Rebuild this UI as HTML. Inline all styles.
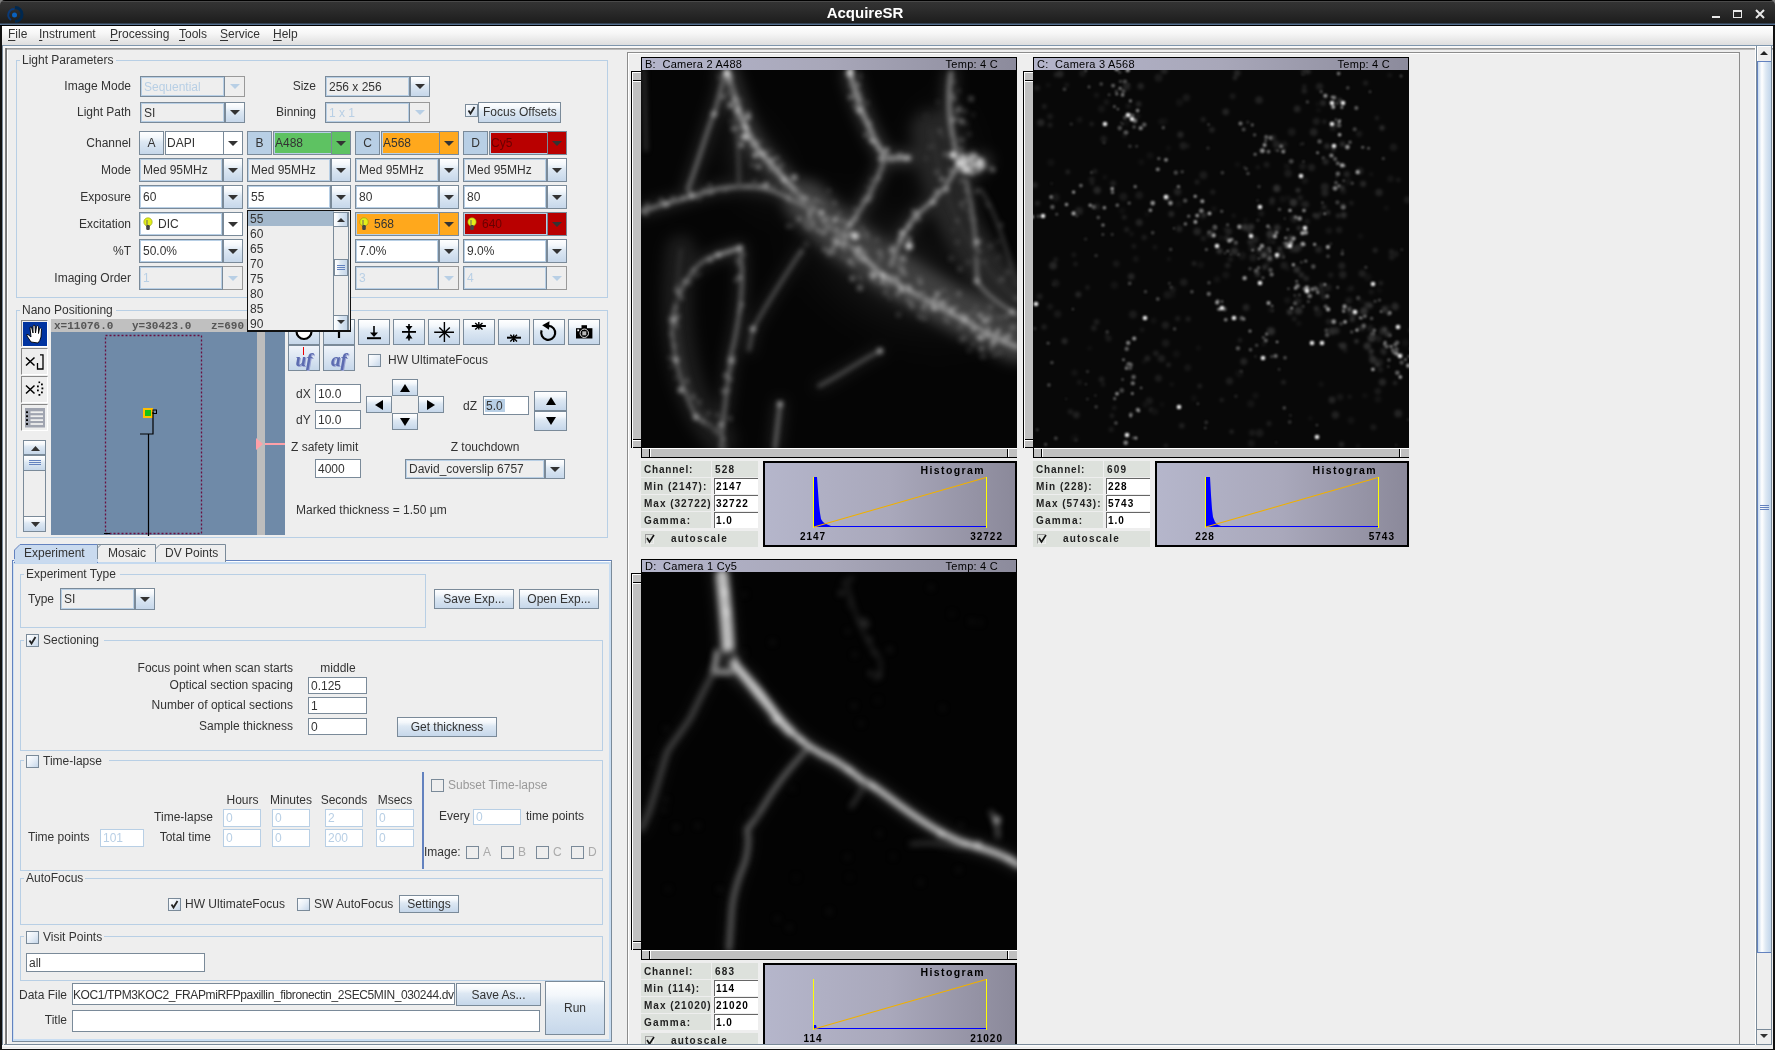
<!DOCTYPE html><html><head><meta charset="utf-8"><title>AcquireSR</title><style>
*{margin:0;padding:0}
html,body{width:1775px;height:1050px;overflow:hidden;background:#eeeeee}
body{position:relative;font-family:"Liberation Sans",sans-serif;font-size:12px;color:#333}
.a{position:absolute}
.t{position:absolute;white-space:nowrap}
u{text-decoration:underline;text-underline-offset:1.5px;text-decoration-thickness:1px}
</style></head><body>
<div id="root" style="position:absolute;left:0;top:0;width:1775px;height:1050px;will-change:transform">
<div class="a" style="left:0px;top:0px;width:8px;height:8px;background:#808080;"></div>
<div class="a" style="left:1767px;top:0px;width:8px;height:8px;background:#808080;"></div>
<div class="a" style="left:0px;top:0px;width:1775px;height:25px;background:linear-gradient(to bottom,#000 0px,#000 1px,#4a4a4a 1px,#4a4a4a 2px,#333 2px,#2e2e2e 8px,#1d1d1d 23px,#4d6a8a 24px);border-radius:5px 5px 0 0;"></div>
<div class="a" style="left:0px;top:24px;width:1775px;height:1px;background:#56708f;"></div>
<svg class="a" style="left:6px;top:6px" width="18" height="18"><path d="M8.5 3 A6 6 0 0 0 5 14" stroke="#0a3a78" stroke-width="2" fill="none"/><path d="M9 1.5 A7 7 0 0 1 9 15.5" stroke="#00284f" stroke-width="3" fill="none"/><circle cx="8.5" cy="9" r="2.5" fill="#0a62bf"/></svg>
<div class="t" style="top:4.30px;font-size:15px;line-height:17px;color:#ffffff;font-weight:bold;left:565px;width:600px;text-align:center;">AcquireSR</div>
<div class="a" style="left:1712px;top:16px;width:8px;height:2px;background:#e8e8e8;"></div>
<div class="a" style="left:1733px;top:10px;width:9px;height:8px;box-sizing:border-box;border:1px solid #e8e8e8;border-top-width:2px;"></div>
<svg class="a" style="left:1755px;top:9px" width="10" height="10"><path d="M1 1 L9 9 M9 1 L1 9" stroke="#e8e8e8" stroke-width="2"/></svg>
<div class="a" style="left:0px;top:25px;width:2px;height:1025px;background:#111;"></div>
<div class="a" style="left:1773px;top:25px;width:2px;height:1025px;background:#111;"></div>
<div class="a" style="left:0px;top:1049px;width:1775px;height:1px;background:#111;"></div>
<div class="a" style="left:0px;top:25px;width:1775px;height:1px;background:#000;"></div>
<div class="a" style="left:2px;top:26px;width:1771px;height:19px;background:linear-gradient(to bottom,#ffffff 0%,#f6f6f6 40%,#dedede 100%);"></div>
<div class="a" style="left:2px;top:45px;width:1771px;height:1px;background:#7e96ad;"></div>
<div class="a" style="left:2px;top:46px;width:1771px;height:2px;background:#f8f8f8;"></div>
<div class="a" style="left:2px;top:48px;width:1771px;height:2px;background:linear-gradient(to bottom,#8a8a8a,#c9c9c9);"></div>
<div class="t" style="top:26.84px;font-size:12px;line-height:14px;color:#333;left:8px;"><u>F</u>ile</div>
<div class="t" style="top:26.84px;font-size:12px;line-height:14px;color:#333;left:39px;"><u>I</u>nstrument</div>
<div class="t" style="top:26.84px;font-size:12px;line-height:14px;color:#333;left:110px;"><u>P</u>rocessing</div>
<div class="t" style="top:26.84px;font-size:12px;line-height:14px;color:#333;left:179px;"><u>T</u>ools</div>
<div class="t" style="top:26.84px;font-size:12px;line-height:14px;color:#333;left:220px;"><u>S</u>ervice</div>
<div class="t" style="top:26.84px;font-size:12px;line-height:14px;color:#333;left:273px;"><u>H</u>elp</div>
<div class="a" style="left:2px;top:45px;width:1px;height:1000px;background:#7a8a99;"></div>
<div class="a" style="left:3px;top:46px;width:2px;height:999px;background:#f6f6f6;"></div>
<div class="a" style="left:5px;top:48px;width:2px;height:997px;background:linear-gradient(to right,#8a8a8a,#6e6e6e);"></div>
<div class="a" style="left:7px;top:50px;width:1px;height:995px;background:#ffffff;"></div>
<div class="a" style="left:16px;top:60px;width:592px;height:238px;box-sizing:border-box;border:1px solid #b8cfe5;"></div>
<div class="a" style="left:20px;top:59px;width:96px;height:3px;background:#eeeeee;"></div>
<div class="t" style="top:52.84px;font-size:12px;line-height:14px;color:#333;left:22px;">Light Parameters</div>
<div class="t" style="top:78.84px;font-size:12px;line-height:14px;color:#333;right:1644px;">Image Mode</div>
<div class="a" style="left:140px;top:76px;width:85px;height:21px;box-sizing:border-box;border:1px solid #7a8a99;background:#eeeeee;box-shadow:inset 1px 1px 0 #b8cfe5,inset -1px -1px 0 #b8cfe5;"></div>
<div class="a" style="left:225px;top:76px;width:20px;height:21px;box-sizing:border-box;border:1px solid #999;border-left:none;background:#eeeeee;"></div>
<svg class="a" style="left:230.0px;top:84.0px" width="10" height="5"><polygon points="0,0 10,0 5.0,5" fill="#b8cfe5"/></svg>
<div class="t" style="top:79.84px;font-size:12px;line-height:14px;color:#b8cfe5;left:144px;">Sequential</div>
<div class="t" style="top:104.84px;font-size:12px;line-height:14px;color:#333;right:1644px;">Light Path</div>
<div class="a" style="left:140px;top:102px;width:85px;height:21px;box-sizing:border-box;border:1px solid #7a8a99;background:#eeeeee;box-shadow:inset 1px 1px 0 #b8cfe5,inset -1px -1px 0 #b8cfe5;"></div>
<div class="a" style="left:225px;top:102px;width:20px;height:21px;box-sizing:border-box;border:1px solid #7a8a99;border-left:1px solid #7a8a99;background:linear-gradient(to bottom,#ffffff 0%,#f3f7fb 25%,#dde8f3 45%,#c6d7ea 100%);"></div>
<svg class="a" style="left:230.0px;top:110.0px" width="10" height="5"><polygon points="0,0 10,0 5.0,5" fill="#333"/></svg>
<div class="t" style="top:105.84px;font-size:12px;line-height:14px;color:#333;left:144px;">SI</div>
<div class="t" style="top:78.84px;font-size:12px;line-height:14px;color:#333;right:1459px;">Size</div>
<div class="a" style="left:325px;top:76px;width:85px;height:21px;box-sizing:border-box;border:1px solid #7a8a99;background:#eeeeee;box-shadow:inset 1px 1px 0 #b8cfe5,inset -1px -1px 0 #b8cfe5;"></div>
<div class="a" style="left:410px;top:76px;width:20px;height:21px;box-sizing:border-box;border:1px solid #7a8a99;border-left:1px solid #7a8a99;background:linear-gradient(to bottom,#ffffff 0%,#f3f7fb 25%,#dde8f3 45%,#c6d7ea 100%);"></div>
<svg class="a" style="left:415.0px;top:84.0px" width="10" height="5"><polygon points="0,0 10,0 5.0,5" fill="#333"/></svg>
<div class="t" style="top:79.84px;font-size:12px;line-height:14px;color:#333;left:329px;">256 x 256</div>
<div class="t" style="top:104.84px;font-size:12px;line-height:14px;color:#333;right:1459px;">Binning</div>
<div class="a" style="left:325px;top:102px;width:85px;height:21px;box-sizing:border-box;border:1px solid #7a8a99;background:#eeeeee;box-shadow:inset 1px 1px 0 #b8cfe5,inset -1px -1px 0 #b8cfe5;"></div>
<div class="a" style="left:410px;top:102px;width:20px;height:21px;box-sizing:border-box;border:1px solid #999;border-left:none;background:#eeeeee;"></div>
<svg class="a" style="left:415.0px;top:110.0px" width="10" height="5"><polygon points="0,0 10,0 5.0,5" fill="#b8cfe5"/></svg>
<div class="t" style="top:105.84px;font-size:12px;line-height:14px;color:#b8cfe5;left:329px;">1 x 1</div>
<div class="a" style="left:465px;top:104px;width:13px;height:13px;box-sizing:border-box;border:1px solid #7a8a99;background:linear-gradient(to bottom right,#ffffff 0%,#e8eff7 50%,#c6d7ea 100%);"></div>
<svg class="a" style="left:465px;top:104px" width="13" height="13"><path d="M3.5 6.5 L5.5 9.5 L9.5 3" stroke="#222" stroke-width="1.8" fill="none"/></svg>
<div class="a" style="left:478px;top:102px;width:83px;height:21px;box-sizing:border-box;border:1px solid #7a8a99;background:linear-gradient(to bottom,#ffffff 0%,#f3f7fb 25%,#dde8f3 45%,#c6d7ea 100%);"></div>
<div class="t" style="top:104.84px;font-size:12px;line-height:14px;color:#333;left:483px;">Focus Offsets</div>
<div class="t" style="top:135.84px;font-size:12px;line-height:14px;color:#333;right:1644px;">Channel</div>
<div class="t" style="top:162.84px;font-size:12px;line-height:14px;color:#333;right:1644px;">Mode</div>
<div class="t" style="top:189.84px;font-size:12px;line-height:14px;color:#333;right:1644px;">Exposure</div>
<div class="t" style="top:216.84px;font-size:12px;line-height:14px;color:#333;right:1644px;">Excitation</div>
<div class="t" style="top:243.84px;font-size:12px;line-height:14px;color:#333;right:1644px;">%T</div>
<div class="t" style="top:270.84px;font-size:12px;line-height:14px;color:#333;right:1644px;">Imaging Order</div>
<div class="a" style="left:139px;top:131px;width:25px;height:24px;box-sizing:border-box;border:1px solid #7a8a99;background:linear-gradient(to bottom,#ffffff 0%,#f3f7fb 25%,#dde8f3 45%,#c6d7ea 100%);"></div>
<div class="t" style="top:135.84px;font-size:12px;line-height:14px;color:#333;left:-148.5px;width:600px;text-align:center;">A</div>
<div class="a" style="left:165px;top:131px;width:78px;height:24px;box-sizing:border-box;border:1px solid #7a8a99;background:#ffffff;"></div>
<div class="a" style="left:223px;top:131px;width:20px;height:24px;box-sizing:border-box;border:1px solid #7a8a99;background:#ffffff;"></div>
<svg class="a" style="left:228.0px;top:140.5px" width="10" height="5"><polygon points="0,0 10,0 5.0,5" fill="#333"/></svg>
<div class="t" style="top:135.84px;font-size:12px;line-height:14px;color:#333;left:167px;">DAPI</div>
<div class="a" style="left:247px;top:131px;width:25px;height:24px;box-sizing:border-box;border:1px solid #7a8a99;background:#b8cfe5;"></div>
<div class="t" style="top:135.84px;font-size:12px;line-height:14px;color:#333;left:-40.5px;width:600px;text-align:center;">B</div>
<div class="a" style="left:273px;top:131px;width:78px;height:24px;box-sizing:border-box;border:1px solid #7a8a99;background:#5ec262;"></div>
<div class="a" style="left:274px;top:132px;width:76px;height:22px;box-sizing:border-box;border:1px solid #b8cfe5;border-right:none;"></div>
<div class="a" style="left:331px;top:131px;width:20px;height:24px;box-sizing:border-box;border:1px solid #7a8a99;background:#5ec262;"></div>
<svg class="a" style="left:336.0px;top:140.5px" width="10" height="5"><polygon points="0,0 10,0 5.0,5" fill="#333"/></svg>
<div class="t" style="top:135.84px;font-size:12px;line-height:14px;color:#333;left:275px;">A488</div>
<div class="a" style="left:355px;top:131px;width:25px;height:24px;box-sizing:border-box;border:1px solid #7a8a99;background:#b8cfe5;"></div>
<div class="t" style="top:135.84px;font-size:12px;line-height:14px;color:#333;left:67.5px;width:600px;text-align:center;">C</div>
<div class="a" style="left:381px;top:131px;width:78px;height:24px;box-sizing:border-box;border:1px solid #7a8a99;background:#ffa81c;"></div>
<div class="a" style="left:382px;top:132px;width:76px;height:22px;box-sizing:border-box;border:1px solid #b8cfe5;border-right:none;"></div>
<div class="a" style="left:439px;top:131px;width:20px;height:24px;box-sizing:border-box;border:1px solid #7a8a99;background:#ffa81c;"></div>
<svg class="a" style="left:444.0px;top:140.5px" width="10" height="5"><polygon points="0,0 10,0 5.0,5" fill="#333"/></svg>
<div class="t" style="top:135.84px;font-size:12px;line-height:14px;color:#333;left:383px;">A568</div>
<div class="a" style="left:463px;top:131px;width:25px;height:24px;box-sizing:border-box;border:1px solid #7a8a99;background:#b8cfe5;"></div>
<div class="t" style="top:135.84px;font-size:12px;line-height:14px;color:#333;left:175.5px;width:600px;text-align:center;">D</div>
<div class="a" style="left:489px;top:131px;width:78px;height:24px;box-sizing:border-box;border:1px solid #7a8a99;background:#b90000;"></div>
<div class="a" style="left:490px;top:132px;width:76px;height:22px;box-sizing:border-box;border:1px solid #b8cfe5;border-right:none;"></div>
<div class="a" style="left:547px;top:131px;width:20px;height:24px;box-sizing:border-box;border:1px solid #7a8a99;background:#b90000;"></div>
<svg class="a" style="left:552.0px;top:140.5px" width="10" height="5"><polygon points="0,0 10,0 5.0,5" fill="#333"/></svg>
<div class="t" style="top:135.84px;font-size:12px;line-height:14px;color:#6a0000;left:491px;">Cy5</div>
<div class="a" style="left:139px;top:158px;width:84px;height:24px;box-sizing:border-box;border:1px solid #7a8a99;background:#eeeeee;box-shadow:inset 1px 1px 0 #b8cfe5,inset -1px -1px 0 #b8cfe5;"></div>
<div class="a" style="left:223px;top:158px;width:20px;height:24px;box-sizing:border-box;border:1px solid #7a8a99;border-left:1px solid #7a8a99;background:linear-gradient(to bottom,#ffffff 0%,#f3f7fb 25%,#dde8f3 45%,#c6d7ea 100%);"></div>
<svg class="a" style="left:228.0px;top:167.5px" width="10" height="5"><polygon points="0,0 10,0 5.0,5" fill="#333"/></svg>
<div class="t" style="top:163.34px;font-size:12px;line-height:14px;color:#333;left:143px;">Med 95MHz</div>
<div class="a" style="left:139px;top:185px;width:84px;height:24px;box-sizing:border-box;border:1px solid #7a8a99;background:#ffffff;box-shadow:inset 1px 1px 0 #b8cfe5,inset -1px -1px 0 #b8cfe5;"></div>
<div class="a" style="left:223px;top:185px;width:20px;height:24px;box-sizing:border-box;border:1px solid #7a8a99;border-left:1px solid #7a8a99;background:linear-gradient(to bottom,#ffffff 0%,#f3f7fb 25%,#dde8f3 45%,#c6d7ea 100%);"></div>
<svg class="a" style="left:228.0px;top:194.5px" width="10" height="5"><polygon points="0,0 10,0 5.0,5" fill="#333"/></svg>
<div class="t" style="top:190.34px;font-size:12px;line-height:14px;color:#333;left:143px;">60</div>
<div class="a" style="left:139px;top:212px;width:84px;height:24px;box-sizing:border-box;border:1px solid #7a8a99;background:#ffffff;box-shadow:inset 1px 1px 0 #b8cfe5,inset -1px -1px 0 #b8cfe5;"></div>
<div class="a" style="left:223px;top:212px;width:20px;height:24px;box-sizing:border-box;border:1px solid #7a8a99;border-left:1px solid #7a8a99;background:#ffffff;"></div>
<svg class="a" style="left:228.0px;top:221.5px" width="10" height="5"><polygon points="0,0 10,0 5.0,5" fill="#333"/></svg>
<svg class="a" style="left:142px;top:212px" width="12" height="24"><ellipse cx="6" cy="10" rx="4.2" ry="4.2" fill="#e4ef1a" stroke="#8a9a10" stroke-width="0.6"/><rect x="4.2" y="13" width="3.6" height="5" rx="1.2" fill="#444"/><rect x="4.5" y="8" width="1" height="5" fill="#666"/></svg>
<div class="t" style="top:217.34px;font-size:12px;line-height:14px;color:#333;left:158px;">DIC</div>
<div class="a" style="left:139px;top:239px;width:84px;height:24px;box-sizing:border-box;border:1px solid #7a8a99;background:#ffffff;box-shadow:inset 1px 1px 0 #b8cfe5,inset -1px -1px 0 #b8cfe5;"></div>
<div class="a" style="left:223px;top:239px;width:20px;height:24px;box-sizing:border-box;border:1px solid #7a8a99;border-left:1px solid #7a8a99;background:linear-gradient(to bottom,#ffffff 0%,#f3f7fb 25%,#dde8f3 45%,#c6d7ea 100%);"></div>
<svg class="a" style="left:228.0px;top:248.5px" width="10" height="5"><polygon points="0,0 10,0 5.0,5" fill="#333"/></svg>
<div class="t" style="top:244.34px;font-size:12px;line-height:14px;color:#333;left:143px;">50.0%</div>
<div class="a" style="left:139px;top:266px;width:84px;height:24px;box-sizing:border-box;border:1px solid #7a8a99;background:#eeeeee;box-shadow:inset 1px 1px 0 #b8cfe5,inset -1px -1px 0 #b8cfe5;"></div>
<div class="a" style="left:223px;top:266px;width:20px;height:24px;box-sizing:border-box;border:1px solid #999;border-left:none;background:#eeeeee;"></div>
<svg class="a" style="left:228.0px;top:275.5px" width="10" height="5"><polygon points="0,0 10,0 5.0,5" fill="#b8cfe5"/></svg>
<div class="t" style="top:271.34px;font-size:12px;line-height:14px;color:#b8cfe5;left:143px;">1</div>
<div class="a" style="left:247px;top:158px;width:84px;height:24px;box-sizing:border-box;border:1px solid #7a8a99;background:#eeeeee;box-shadow:inset 1px 1px 0 #b8cfe5,inset -1px -1px 0 #b8cfe5;"></div>
<div class="a" style="left:331px;top:158px;width:20px;height:24px;box-sizing:border-box;border:1px solid #7a8a99;border-left:1px solid #7a8a99;background:linear-gradient(to bottom,#ffffff 0%,#f3f7fb 25%,#dde8f3 45%,#c6d7ea 100%);"></div>
<svg class="a" style="left:336.0px;top:167.5px" width="10" height="5"><polygon points="0,0 10,0 5.0,5" fill="#333"/></svg>
<div class="t" style="top:163.34px;font-size:12px;line-height:14px;color:#333;left:251px;">Med 95MHz</div>
<div class="a" style="left:247px;top:185px;width:84px;height:24px;box-sizing:border-box;border:1px solid #7a8a99;background:#ffffff;box-shadow:inset 1px 1px 0 #b8cfe5,inset -1px -1px 0 #b8cfe5;"></div>
<div class="a" style="left:331px;top:185px;width:20px;height:24px;box-sizing:border-box;border:1px solid #7a8a99;border-left:1px solid #7a8a99;background:linear-gradient(to bottom,#ffffff 0%,#f3f7fb 25%,#dde8f3 45%,#c6d7ea 100%);"></div>
<svg class="a" style="left:336.0px;top:194.5px" width="10" height="5"><polygon points="0,0 10,0 5.0,5" fill="#333"/></svg>
<div class="t" style="top:190.34px;font-size:12px;line-height:14px;color:#333;left:251px;">55</div>
<div class="a" style="left:355px;top:158px;width:84px;height:24px;box-sizing:border-box;border:1px solid #7a8a99;background:#eeeeee;box-shadow:inset 1px 1px 0 #b8cfe5,inset -1px -1px 0 #b8cfe5;"></div>
<div class="a" style="left:439px;top:158px;width:20px;height:24px;box-sizing:border-box;border:1px solid #7a8a99;border-left:1px solid #7a8a99;background:linear-gradient(to bottom,#ffffff 0%,#f3f7fb 25%,#dde8f3 45%,#c6d7ea 100%);"></div>
<svg class="a" style="left:444.0px;top:167.5px" width="10" height="5"><polygon points="0,0 10,0 5.0,5" fill="#333"/></svg>
<div class="t" style="top:163.34px;font-size:12px;line-height:14px;color:#333;left:359px;">Med 95MHz</div>
<div class="a" style="left:355px;top:185px;width:84px;height:24px;box-sizing:border-box;border:1px solid #7a8a99;background:#ffffff;box-shadow:inset 1px 1px 0 #b8cfe5,inset -1px -1px 0 #b8cfe5;"></div>
<div class="a" style="left:439px;top:185px;width:20px;height:24px;box-sizing:border-box;border:1px solid #7a8a99;border-left:1px solid #7a8a99;background:linear-gradient(to bottom,#ffffff 0%,#f3f7fb 25%,#dde8f3 45%,#c6d7ea 100%);"></div>
<svg class="a" style="left:444.0px;top:194.5px" width="10" height="5"><polygon points="0,0 10,0 5.0,5" fill="#333"/></svg>
<div class="t" style="top:190.34px;font-size:12px;line-height:14px;color:#333;left:359px;">80</div>
<div class="a" style="left:355px;top:212px;width:104px;height:24px;box-sizing:border-box;border:1px solid #7a8a99;background:#ffa81c;"></div>
<div class="a" style="left:356px;top:213px;width:83px;height:22px;box-sizing:border-box;border:1px solid #b8cfe5;"></div>
<div class="a" style="left:439px;top:212px;width:20px;height:24px;box-sizing:border-box;border:1px solid #7a8a99;background:#ffa81c;"></div>
<svg class="a" style="left:444.0px;top:221.5px" width="10" height="5"><polygon points="0,0 10,0 5.0,5" fill="#333"/></svg>
<svg class="a" style="left:358px;top:212px" width="12" height="24"><ellipse cx="6" cy="10" rx="4.2" ry="4.2" fill="#e4ef1a" stroke="#8a9a10" stroke-width="0.6"/><rect x="4.2" y="13" width="3.6" height="5" rx="1.2" fill="#444"/><rect x="4.5" y="8" width="1" height="5" fill="#666"/></svg>
<div class="t" style="top:216.84px;font-size:12px;line-height:14px;color:#333;left:374px;">568</div>
<div class="a" style="left:355px;top:239px;width:84px;height:24px;box-sizing:border-box;border:1px solid #7a8a99;background:#ffffff;box-shadow:inset 1px 1px 0 #b8cfe5,inset -1px -1px 0 #b8cfe5;"></div>
<div class="a" style="left:439px;top:239px;width:20px;height:24px;box-sizing:border-box;border:1px solid #7a8a99;border-left:1px solid #7a8a99;background:linear-gradient(to bottom,#ffffff 0%,#f3f7fb 25%,#dde8f3 45%,#c6d7ea 100%);"></div>
<svg class="a" style="left:444.0px;top:248.5px" width="10" height="5"><polygon points="0,0 10,0 5.0,5" fill="#333"/></svg>
<div class="t" style="top:244.34px;font-size:12px;line-height:14px;color:#333;left:359px;">7.0%</div>
<div class="a" style="left:355px;top:266px;width:84px;height:24px;box-sizing:border-box;border:1px solid #7a8a99;background:#eeeeee;box-shadow:inset 1px 1px 0 #b8cfe5,inset -1px -1px 0 #b8cfe5;"></div>
<div class="a" style="left:439px;top:266px;width:20px;height:24px;box-sizing:border-box;border:1px solid #999;border-left:none;background:#eeeeee;"></div>
<svg class="a" style="left:444.0px;top:275.5px" width="10" height="5"><polygon points="0,0 10,0 5.0,5" fill="#b8cfe5"/></svg>
<div class="t" style="top:271.34px;font-size:12px;line-height:14px;color:#b8cfe5;left:359px;">3</div>
<div class="a" style="left:463px;top:158px;width:84px;height:24px;box-sizing:border-box;border:1px solid #7a8a99;background:#eeeeee;box-shadow:inset 1px 1px 0 #b8cfe5,inset -1px -1px 0 #b8cfe5;"></div>
<div class="a" style="left:547px;top:158px;width:20px;height:24px;box-sizing:border-box;border:1px solid #7a8a99;border-left:1px solid #7a8a99;background:linear-gradient(to bottom,#ffffff 0%,#f3f7fb 25%,#dde8f3 45%,#c6d7ea 100%);"></div>
<svg class="a" style="left:552.0px;top:167.5px" width="10" height="5"><polygon points="0,0 10,0 5.0,5" fill="#333"/></svg>
<div class="t" style="top:163.34px;font-size:12px;line-height:14px;color:#333;left:467px;">Med 95MHz</div>
<div class="a" style="left:463px;top:185px;width:84px;height:24px;box-sizing:border-box;border:1px solid #7a8a99;background:#ffffff;box-shadow:inset 1px 1px 0 #b8cfe5,inset -1px -1px 0 #b8cfe5;"></div>
<div class="a" style="left:547px;top:185px;width:20px;height:24px;box-sizing:border-box;border:1px solid #7a8a99;border-left:1px solid #7a8a99;background:linear-gradient(to bottom,#ffffff 0%,#f3f7fb 25%,#dde8f3 45%,#c6d7ea 100%);"></div>
<svg class="a" style="left:552.0px;top:194.5px" width="10" height="5"><polygon points="0,0 10,0 5.0,5" fill="#333"/></svg>
<div class="t" style="top:190.34px;font-size:12px;line-height:14px;color:#333;left:467px;">80</div>
<div class="a" style="left:463px;top:212px;width:104px;height:24px;box-sizing:border-box;border:1px solid #7a8a99;background:#b90000;"></div>
<div class="a" style="left:464px;top:213px;width:83px;height:22px;box-sizing:border-box;border:1px solid #b8cfe5;"></div>
<div class="a" style="left:547px;top:212px;width:20px;height:24px;box-sizing:border-box;border:1px solid #7a8a99;background:#b90000;"></div>
<svg class="a" style="left:552.0px;top:221.5px" width="10" height="5"><polygon points="0,0 10,0 5.0,5" fill="#333"/></svg>
<svg class="a" style="left:466px;top:212px" width="12" height="24"><ellipse cx="6" cy="10" rx="4.2" ry="4.2" fill="#e4ef1a" stroke="#8a9a10" stroke-width="0.6"/><rect x="4.2" y="13" width="3.6" height="5" rx="1.2" fill="#444"/><rect x="4.5" y="8" width="1" height="5" fill="#666"/></svg>
<div class="t" style="top:216.84px;font-size:12px;line-height:14px;color:#6a0000;left:482px;">640</div>
<div class="a" style="left:463px;top:239px;width:84px;height:24px;box-sizing:border-box;border:1px solid #7a8a99;background:#ffffff;box-shadow:inset 1px 1px 0 #b8cfe5,inset -1px -1px 0 #b8cfe5;"></div>
<div class="a" style="left:547px;top:239px;width:20px;height:24px;box-sizing:border-box;border:1px solid #7a8a99;border-left:1px solid #7a8a99;background:linear-gradient(to bottom,#ffffff 0%,#f3f7fb 25%,#dde8f3 45%,#c6d7ea 100%);"></div>
<svg class="a" style="left:552.0px;top:248.5px" width="10" height="5"><polygon points="0,0 10,0 5.0,5" fill="#333"/></svg>
<div class="t" style="top:244.34px;font-size:12px;line-height:14px;color:#333;left:467px;">9.0%</div>
<div class="a" style="left:463px;top:266px;width:84px;height:24px;box-sizing:border-box;border:1px solid #7a8a99;background:#eeeeee;box-shadow:inset 1px 1px 0 #b8cfe5,inset -1px -1px 0 #b8cfe5;"></div>
<div class="a" style="left:547px;top:266px;width:20px;height:24px;box-sizing:border-box;border:1px solid #999;border-left:none;background:#eeeeee;"></div>
<svg class="a" style="left:552.0px;top:275.5px" width="10" height="5"><polygon points="0,0 10,0 5.0,5" fill="#b8cfe5"/></svg>
<div class="t" style="top:271.34px;font-size:12px;line-height:14px;color:#b8cfe5;left:467px;">4</div>
<div class="a" style="left:16px;top:310px;width:592px;height:228px;box-sizing:border-box;border:1px solid #b8cfe5;"></div>
<div class="a" style="left:20px;top:309px;width:96px;height:3px;background:#eeeeee;"></div>
<div class="t" style="top:302.84px;font-size:12px;line-height:14px;color:#333;left:22px;">Nano Positioning</div>
<div class="a" style="left:21px;top:320px;width:27px;height:27px;box-sizing:border-box;border:1px solid #888;border-right-color:#fff;border-bottom-color:#fff;background:#eee;"></div>
<div class="a" style="left:23px;top:322px;width:24px;height:24px;background:#0033a0;"></div>
<svg class="a" style="left:24px;top:323px" width="22" height="22"><path d="M7 19 L3 13 Q2 11 4 11.5 L7 14 L6 5 Q6 3.5 7.5 4 L9 10 L9 3 Q9.5 1.5 11 2.5 L11.5 10 L12.5 3.5 Q13.5 2 14.5 3.5 L14.5 10.5 L15.5 5.5 Q16.5 4.5 17.5 6 L17 14 Q16 18 14 20 Z" fill="#fff" stroke="#000" stroke-width="0.9"/></svg>
<div class="a" style="left:21px;top:348px;width:27px;height:27px;box-sizing:border-box;border:1px solid #888;border-right-color:#fff;border-bottom-color:#fff;background:#eee;"></div>
<div class="a" style="left:21px;top:376px;width:27px;height:27px;box-sizing:border-box;border:1px solid #888;border-right-color:#fff;border-bottom-color:#fff;background:#eee;"></div>
<div class="a" style="left:21px;top:404px;width:27px;height:27px;box-sizing:border-box;border:1px solid #888;border-right-color:#fff;border-bottom-color:#fff;background:#eee;"></div>
<svg class="a" style="left:21px;top:348px" width="27" height="27"><path d="M5 9.5 L13.5 17.5 M13.5 9.5 L5 17.5" stroke="#000" stroke-width="1.5"/><path d="M19 6.8 L22 6.8 L22 21 L16.5 21 L16.5 15" stroke="#000" stroke-width="1.3" fill="none"/></svg>
<svg class="a" style="left:21px;top:376px" width="27" height="27"><path d="M5 9.5 L13.5 17.5 M13.5 9.5 L5 17.5" stroke="#000" stroke-width="1.5"/><g fill="#000"><rect x="17.5" y="5.5" width="1.6" height="1.6"/><rect x="20" y="7.5" width="1.8" height="1.8"/><rect x="16" y="9.5" width="1.8" height="1.8"/><rect x="20.5" y="11.5" width="1.8" height="1.8"/><rect x="16" y="13.5" width="1.8" height="1.8"/><rect x="20" y="15.5" width="1.8" height="1.8"/><rect x="17.5" y="18" width="1.8" height="1.8"/></g></svg>
<svg class="a" style="left:21px;top:404px" width="27" height="27"><rect x="4" y="4" width="20" height="19.5" fill="#a0a4b0"/><g fill="#eee"><rect x="9.5" y="7.3" width="12.5" height="1.8"/><rect x="9.5" y="11.3" width="12.5" height="1.8"/><rect x="9.5" y="15.2" width="12.5" height="1.8"/><rect x="9.5" y="19.1" width="12.5" height="1.8"/></g><g fill="#000"><rect x="5" y="7.3" width="2" height="1.8"/><rect x="5" y="11.3" width="2" height="1.8"/><rect x="5" y="15.2" width="2" height="1.8"/><rect x="5" y="19.1" width="2" height="1.8"/></g></svg>
<div class="a" style="left:23px;top:440px;width:23px;height:92px;box-sizing:border-box;border:1px solid #7a8a99;background:#eeeeee;"></div>
<div class="a" style="left:24px;top:441px;width:21px;height:14px;box-sizing:border-box;border-bottom:1px solid #7a8a99;background:linear-gradient(to bottom,#ffffff 0%,#f3f7fb 25%,#dde8f3 45%,#c6d7ea 100%);"></div>
<svg class="a" style="left:30.5px;top:445.5px" width="9" height="5"><polygon points="0,5 9,5 4.5,0" fill="#333"/></svg>
<div class="a" style="left:24px;top:455px;width:21px;height:16px;box-sizing:border-box;border:1px solid #7a8a99;border-left:none;border-right:none;background:linear-gradient(to bottom,#ffffff 0%,#f3f7fb 25%,#dde8f3 45%,#c6d7ea 100%);"></div>
<div class="a" style="left:29px;top:460px;width:12px;height:1px;background:#6382bf;"></div>
<div class="a" style="left:29px;top:462px;width:12px;height:1px;background:#6382bf;"></div>
<div class="a" style="left:29px;top:464px;width:12px;height:1px;background:#6382bf;"></div>
<div class="a" style="left:24px;top:516px;width:21px;height:15px;box-sizing:border-box;border-top:1px solid #7a8a99;background:linear-gradient(to bottom,#ffffff 0%,#f3f7fb 25%,#dde8f3 45%,#c6d7ea 100%);"></div>
<svg class="a" style="left:30.5px;top:521.5px" width="9" height="5"><polygon points="0,0 9,0 4.5,5" fill="#333"/></svg>
<div class="a" style="left:51px;top:319px;width:234px;height:216px;background:#6f8aa8;"></div>
<div class="a" style="left:51px;top:319px;width:234px;height:13px;background:#c0c0c0;"></div>
<div class="t" style="top:319.19px;font-size:11px;line-height:14px;color:#555;font-weight:bold;font-family:'Liberation Mono',monospace;left:54px;">x=11076.0</div>
<div class="t" style="top:319.19px;font-size:11px;line-height:14px;color:#555;font-weight:bold;font-family:'Liberation Mono',monospace;left:132px;">y=30423.0</div>
<div class="t" style="top:319.19px;font-size:11px;line-height:14px;color:#555;font-weight:bold;font-family:'Liberation Mono',monospace;left:211px;">z=690</div>
<svg class="a" style="left:104px;top:334px" width="100" height="202"><rect x="1.5" y="1.5" width="96" height="198" fill="none" stroke="#6a1040" stroke-width="1.3" stroke-dasharray="2,2"/></svg>
<div class="a" style="left:257px;top:332px;width:8px;height:203px;background:#bdbdbd;"></div>
<div class="a" style="left:265px;top:443px;width:20px;height:2px;background:#ffa0a8;"></div>
<svg class="a" style="left:256px;top:438px" width="8" height="12"><polygon points="0,0 0,12 7,6" fill="#ffa0a8"/></svg>
<div class="a" style="left:143px;top:408px;width:10px;height:10px;background:#ffc000;"></div>
<div class="a" style="left:145px;top:410px;width:6px;height:6px;background:#15c015;border:0;"></div>
<svg class="a" style="left:140px;top:405px" width="20" height="132"><path d="M13 7 L13 29 L0 29 M8.5 29 L8.5 131" stroke="#000" stroke-width="1.2" fill="none"/><rect x="13" y="5" width="3.5" height="3.5" fill="none" stroke="#000" stroke-width="1"/></svg>
<div class="a" style="left:104px;top:533px;width:6px;height:1px;background:#000;"></div>
<div class="a" style="left:288px;top:319px;width:32px;height:26px;box-sizing:border-box;border:1px solid #7a8a99;background:linear-gradient(to bottom,#ffffff 0%,#f3f7fb 25%,#dde8f3 45%,#c6d7ea 100%);"></div>
<div class="a" style="left:323px;top:319px;width:32px;height:26px;box-sizing:border-box;border:1px solid #7a8a99;background:linear-gradient(to bottom,#ffffff 0%,#f3f7fb 25%,#dde8f3 45%,#c6d7ea 100%);"></div>
<div class="a" style="left:358px;top:319px;width:32px;height:26px;box-sizing:border-box;border:1px solid #7a8a99;background:linear-gradient(to bottom,#ffffff 0%,#f3f7fb 25%,#dde8f3 45%,#c6d7ea 100%);"></div>
<div class="a" style="left:393px;top:319px;width:32px;height:26px;box-sizing:border-box;border:1px solid #7a8a99;background:linear-gradient(to bottom,#ffffff 0%,#f3f7fb 25%,#dde8f3 45%,#c6d7ea 100%);"></div>
<div class="a" style="left:428px;top:319px;width:32px;height:26px;box-sizing:border-box;border:1px solid #7a8a99;background:linear-gradient(to bottom,#ffffff 0%,#f3f7fb 25%,#dde8f3 45%,#c6d7ea 100%);"></div>
<div class="a" style="left:463px;top:319px;width:32px;height:26px;box-sizing:border-box;border:1px solid #7a8a99;background:linear-gradient(to bottom,#ffffff 0%,#f3f7fb 25%,#dde8f3 45%,#c6d7ea 100%);"></div>
<div class="a" style="left:498px;top:319px;width:32px;height:26px;box-sizing:border-box;border:1px solid #7a8a99;background:linear-gradient(to bottom,#ffffff 0%,#f3f7fb 25%,#dde8f3 45%,#c6d7ea 100%);"></div>
<div class="a" style="left:533px;top:319px;width:32px;height:26px;box-sizing:border-box;border:1px solid #7a8a99;background:linear-gradient(to bottom,#ffffff 0%,#f3f7fb 25%,#dde8f3 45%,#c6d7ea 100%);"></div>
<div class="a" style="left:568px;top:319px;width:32px;height:26px;box-sizing:border-box;border:1px solid #7a8a99;background:linear-gradient(to bottom,#ffffff 0%,#f3f7fb 25%,#dde8f3 45%,#c6d7ea 100%);"></div>
<svg class="a" style="left:358px;top:319px" width="32" height="26"><path d="M16 7 L16 17" stroke="#000" stroke-width="1.6"/><polygon points="12,13.5 20,13.5 16,18" fill="#000"/><rect x="9" y="18.2" width="14" height="2" fill="#000"/></svg>
<svg class="a" style="left:393px;top:319px" width="32" height="26"><path d="M16 5 L16 21.5" stroke="#000" stroke-width="1.6"/><rect x="9" y="12" width="14" height="1.8" fill="#000"/><polygon points="12.5,7 19.5,7 16,11.5" fill="#000"/><polygon points="12.5,19.5 19.5,19.5 16,14.5" fill="#000"/></svg>
<svg class="a" style="left:428px;top:319px" width="32" height="26"><path d="M16.4 3 L16.4 23 M6.2 13.3 L26 13.3 M11.3 8.4 L21.8 18.5 M21.8 8.4 L11.3 18.5" stroke="#000" stroke-width="1.4"/></svg>
<svg class="a" style="left:463px;top:319px" width="32" height="26"><path d="M15.8 3 L15.8 10.6 M12.2 4 L19.5 10.6 M19.5 4 L12.2 10.6" stroke="#000" stroke-width="1.4"/><path d="M8.8 7 L22.9 7" stroke="#000" stroke-width="2"/></svg>
<svg class="a" style="left:498px;top:319px" width="32" height="26"><path d="M15.7 15.6 L15.7 23 M12.3 15.8 L19 22.4 M19 15.8 L12.3 22.4" stroke="#000" stroke-width="1.4"/><path d="M9 18.7 L23 18.7" stroke="#000" stroke-width="2"/></svg>
<svg class="a" style="left:533px;top:319px" width="32" height="26"><path d="M15.5 6.8 A7 7 0 1 1 8.6 11.4" stroke="#000" stroke-width="2.2" fill="none"/><polygon points="9.2,6.2 16.5,2.2 16,10.8" fill="#000"/></svg>
<svg class="a" style="left:568px;top:319px" width="32" height="26"><rect x="8" y="9.2" width="16.4" height="10.3" fill="#000"/><rect x="13.5" y="6.2" width="5.5" height="3.5" fill="#000"/><circle cx="16.3" cy="14.3" r="4.2" fill="#000" stroke="#ddd" stroke-width="1"/><rect x="14.3" y="12.3" width="4" height="4" fill="#bbb"/><rect x="9.3" y="10.4" width="1.8" height="1.8" fill="#fff"/></svg>
<svg class="a" style="left:288px;top:319px" width="32" height="26"><circle cx="16" cy="12.5" r="7.5" fill="#fff" stroke="#000" stroke-width="2.2"/><circle cx="16" cy="9.5" r="3.4" fill="#000"/></svg>
<svg class="a" style="left:323px;top:319px" width="32" height="26"><path d="M16 4 L16 19 M11 5 L21 5" stroke="#000" stroke-width="2.2"/></svg>
<div class="a" style="left:288px;top:345px;width:32px;height:26px;box-sizing:border-box;border:1px solid #7a8a99;background:linear-gradient(to bottom,#f0f4fa,#c6d7ea);"></div>
<div class="t" style="top:348.92px;font-size:19px;line-height:21px;color:#5c6bb0;font-weight:bold;font-family:'Liberation Serif',serif;left:4px;width:600px;text-align:center;font-style:italic;text-shadow:1px 1px 0 #9aa4d4;">uf</div>
<div class="a" style="left:323px;top:345px;width:32px;height:26px;box-sizing:border-box;border:1px solid #7a8a99;background:linear-gradient(to bottom,#f0f4fa,#c6d7ea);"></div>
<div class="t" style="top:348.92px;font-size:19px;line-height:21px;color:#5c6bb0;font-weight:bold;font-family:'Liberation Serif',serif;left:39px;width:600px;text-align:center;font-style:italic;text-shadow:1px 1px 0 #9aa4d4;">af</div>
<div class="a" style="left:303px;top:347px;width:1px;height:8px;background:#e00;"></div>
<div class="a" style="left:368px;top:354px;width:13px;height:13px;box-sizing:border-box;border:1px solid #7a8a99;background:linear-gradient(to bottom right,#ffffff 0%,#e8eff7 50%,#c6d7ea 100%);"></div>
<div class="t" style="top:352.84px;font-size:12px;line-height:14px;color:#333;left:388px;">HW UltimateFocus</div>
<div class="t" style="top:386.84px;font-size:12px;line-height:14px;color:#333;left:296px;">dX</div>
<div class="a" style="left:315px;top:384px;width:46px;height:19px;box-sizing:border-box;border:1px solid #7a8a99;background:#ffffff;box-shadow:inset -1px -1px 0 #ffffff;"></div>
<div class="a" style="left:316px;top:402px;width:45px;height:1px;background:#7a8a99;"></div>
<div class="a" style="left:360px;top:385px;width:1px;height:18px;background:#7a8a99;"></div>
<div class="t" style="top:386.84px;font-size:12px;line-height:14px;color:#333;left:318px;">10.0</div>
<div class="t" style="top:412.84px;font-size:12px;line-height:14px;color:#333;left:296px;">dY</div>
<div class="a" style="left:315px;top:410px;width:46px;height:19px;box-sizing:border-box;border:1px solid #7a8a99;background:#ffffff;box-shadow:inset -1px -1px 0 #ffffff;"></div>
<div class="a" style="left:316px;top:428px;width:45px;height:1px;background:#7a8a99;"></div>
<div class="a" style="left:360px;top:411px;width:1px;height:18px;background:#7a8a99;"></div>
<div class="t" style="top:412.84px;font-size:12px;line-height:14px;color:#333;left:318px;">10.0</div>
<div class="a" style="left:392px;top:379px;width:26px;height:17px;box-sizing:border-box;border:1px solid #7a8a99;background:linear-gradient(to bottom,#ffffff 0%,#f3f7fb 25%,#dde8f3 45%,#c6d7ea 100%);"></div>
<svg class="a" style="left:400.0px;top:383.5px" width="10" height="8"><polygon points="0,8 10,8 5.0,0" fill="#000"/></svg>
<div class="a" style="left:366px;top:396px;width:26px;height:17px;box-sizing:border-box;border:1px solid #7a8a99;background:linear-gradient(to bottom,#ffffff 0%,#f3f7fb 25%,#dde8f3 45%,#c6d7ea 100%);"></div>
<svg class="a" style="left:375.0px;top:399.5px" width="8" height="10"><polygon points="8,0 8,10 0,5.0" fill="#000"/></svg>
<div class="a" style="left:418px;top:396px;width:26px;height:17px;box-sizing:border-box;border:1px solid #7a8a99;background:linear-gradient(to bottom,#ffffff 0%,#f3f7fb 25%,#dde8f3 45%,#c6d7ea 100%);"></div>
<svg class="a" style="left:427.0px;top:399.5px" width="8" height="10"><polygon points="0,0 0,10 8,5.0" fill="#000"/></svg>
<div class="a" style="left:392px;top:413px;width:26px;height:17px;box-sizing:border-box;border:1px solid #7a8a99;background:linear-gradient(to bottom,#ffffff 0%,#f3f7fb 25%,#dde8f3 45%,#c6d7ea 100%);"></div>
<svg class="a" style="left:400.0px;top:417.5px" width="10" height="8"><polygon points="0,0 10,0 5.0,8" fill="#000"/></svg>
<div class="t" style="top:398.84px;font-size:12px;line-height:14px;color:#333;left:463px;">dZ</div>
<div class="a" style="left:483px;top:396px;width:46px;height:19px;box-sizing:border-box;border:1px solid #7a8a99;background:#ffffff;box-shadow:inset -1px -1px 0 #ffffff;"></div>
<div class="a" style="left:484px;top:414px;width:45px;height:1px;background:#7a8a99;"></div>
<div class="a" style="left:528px;top:397px;width:1px;height:18px;background:#7a8a99;"></div>
<div class="a" style="left:485px;top:399px;width:20px;height:13px;background:#b8cfe5;"></div>
<div class="t" style="top:398.84px;font-size:12px;line-height:14px;color:#333;left:486px;">5.0</div>
<div class="a" style="left:534px;top:391px;width:33px;height:20px;box-sizing:border-box;border:1px solid #7a8a99;background:linear-gradient(to bottom,#ffffff 0%,#f3f7fb 25%,#dde8f3 45%,#c6d7ea 100%);"></div>
<svg class="a" style="left:545.5px;top:397.0px" width="10" height="8"><polygon points="0,8 10,8 5.0,0" fill="#000"/></svg>
<div class="a" style="left:534px;top:411px;width:33px;height:20px;box-sizing:border-box;border:1px solid #7a8a99;background:linear-gradient(to bottom,#ffffff 0%,#f3f7fb 25%,#dde8f3 45%,#c6d7ea 100%);"></div>
<svg class="a" style="left:545.5px;top:417.0px" width="10" height="8"><polygon points="0,0 10,0 5.0,8" fill="#000"/></svg>
<div class="t" style="top:439.84px;font-size:12px;line-height:14px;color:#333;left:291px;">Z safety limit</div>
<div class="t" style="top:439.84px;font-size:12px;line-height:14px;color:#333;left:185px;width:600px;text-align:center;">Z touchdown</div>
<div class="a" style="left:315px;top:459px;width:46px;height:19px;box-sizing:border-box;border:1px solid #7a8a99;background:#ffffff;box-shadow:inset -1px -1px 0 #ffffff;"></div>
<div class="a" style="left:316px;top:477px;width:45px;height:1px;background:#7a8a99;"></div>
<div class="a" style="left:360px;top:460px;width:1px;height:18px;background:#7a8a99;"></div>
<div class="t" style="top:461.84px;font-size:12px;line-height:14px;color:#333;left:318px;">4000</div>
<div class="a" style="left:405px;top:459px;width:140px;height:20px;box-sizing:border-box;border:1px solid #7a8a99;background:#eeeeee;box-shadow:inset 1px 1px 0 #b8cfe5,inset -1px -1px 0 #b8cfe5;"></div>
<div class="a" style="left:545px;top:459px;width:20px;height:20px;box-sizing:border-box;border:1px solid #7a8a99;border-left:1px solid #7a8a99;background:linear-gradient(to bottom,#ffffff 0%,#f3f7fb 25%,#dde8f3 45%,#c6d7ea 100%);"></div>
<svg class="a" style="left:550.0px;top:466.5px" width="10" height="5"><polygon points="0,0 10,0 5.0,5" fill="#333"/></svg>
<div class="t" style="top:462.34px;font-size:12px;line-height:14px;color:#333;left:409px;">David_coverslip 6757</div>
<div class="t" style="top:502.84px;font-size:12px;line-height:14px;color:#333;left:296px;">Marked thickness = 1.50 µm</div>
<div class="a" style="left:12px;top:560px;width:600px;height:482px;box-sizing:border-box;border:1px solid #6382bf;border-right-color:#7a8a99;border-bottom-color:#7a8a99;"></div>
<div class="a" style="left:13px;top:561px;width:598px;height:1px;background:#ffffff;"></div>
<div class="a" style="left:13px;top:562px;width:597px;height:2px;background:#c4d9ef;"></div>
<div class="a" style="left:13px;top:562px;width:1px;height:478px;background:#cfe0f2;"></div>
<div class="a" style="left:609px;top:562px;width:2px;height:479px;background:#c8ddf2;"></div>
<div class="a" style="left:13px;top:1039px;width:598px;height:2px;background:#c8ddf2;"></div>
<svg class="a" style="left:12px;top:543px" width="216" height="21"><path d="M2.5 20 L2.5 7 L8 1.5 L85.5 1.5 L85.5 20" fill="#c9daef" stroke="#6382bf" stroke-width="1"/><path d="M85.5 19 L85.5 1.5 L143.5 1.5 L143.5 19" fill="#eeeeee" stroke="#7a8a99" stroke-width="1"/><path d="M89 1.5 L85.5 5" stroke="#7a8a99" stroke-width="1"/><path d="M143.5 19 L143.5 6 L148 1.5 L213.5 1.5 L213.5 19" fill="#eeeeee" stroke="#7a8a99" stroke-width="1"/></svg>
<div class="a" style="left:14px;top:559px;width:84px;height:3px;background:#c9daef;"></div>
<div class="t" style="top:545.84px;font-size:12px;line-height:14px;color:#333;left:24px;">Experiment</div>
<div class="t" style="top:545.84px;font-size:12px;line-height:14px;color:#333;left:108px;">Mosaic</div>
<div class="t" style="top:545.84px;font-size:12px;line-height:14px;color:#333;left:165px;">DV Points</div>
<div class="a" style="left:20px;top:574px;width:406px;height:54px;box-sizing:border-box;border:1px solid #b8cfe5;"></div>
<div class="a" style="left:24px;top:573px;width:96px;height:3px;background:#eeeeee;"></div>
<div class="t" style="top:566.84px;font-size:12px;line-height:14px;color:#333;left:26px;">Experiment Type</div>
<div class="t" style="top:591.84px;font-size:12px;line-height:14px;color:#333;left:28px;">Type</div>
<div class="a" style="left:60px;top:588px;width:75px;height:22px;box-sizing:border-box;border:1px solid #7a8a99;background:#eeeeee;box-shadow:inset 1px 1px 0 #b8cfe5,inset -1px -1px 0 #b8cfe5;"></div>
<div class="a" style="left:135px;top:588px;width:20px;height:22px;box-sizing:border-box;border:1px solid #7a8a99;border-left:1px solid #7a8a99;background:linear-gradient(to bottom,#ffffff 0%,#f3f7fb 25%,#dde8f3 45%,#c6d7ea 100%);"></div>
<svg class="a" style="left:140.0px;top:596.5px" width="10" height="5"><polygon points="0,0 10,0 5.0,5" fill="#333"/></svg>
<div class="t" style="top:592.34px;font-size:12px;line-height:14px;color:#333;left:64px;">SI</div>
<div class="a" style="left:434px;top:589px;width:80px;height:20px;box-sizing:border-box;border:1px solid #7a8a99;background:linear-gradient(to bottom,#ffffff 0%,#f3f7fb 25%,#dde8f3 45%,#c6d7ea 100%);"></div>
<div class="t" style="top:592.34px;font-size:12px;line-height:14px;color:#333;left:174.0px;width:600px;text-align:center;">Save Exp...</div>
<div class="a" style="left:519px;top:589px;width:80px;height:20px;box-sizing:border-box;border:1px solid #7a8a99;background:linear-gradient(to bottom,#ffffff 0%,#f3f7fb 25%,#dde8f3 45%,#c6d7ea 100%);"></div>
<div class="t" style="top:592.34px;font-size:12px;line-height:14px;color:#333;left:259.0px;width:600px;text-align:center;">Open Exp...</div>
<div class="a" style="left:20px;top:640px;width:583px;height:111px;box-sizing:border-box;border:1px solid #b8cfe5;"></div>
<div class="a" style="left:24px;top:633px;width:80px;height:14px;background:#eeeeee;"></div>
<div class="a" style="left:26px;top:634px;width:13px;height:13px;box-sizing:border-box;border:1px solid #7a8a99;background:linear-gradient(to bottom right,#ffffff 0%,#e8eff7 50%,#c6d7ea 100%);"></div>
<svg class="a" style="left:26px;top:634px" width="13" height="13"><path d="M3.5 6.5 L5.5 9.5 L9.5 3" stroke="#222" stroke-width="1.8" fill="none"/></svg>
<div class="t" style="top:632.84px;font-size:12px;line-height:14px;color:#333;left:43px;">Sectioning</div>
<div class="t" style="top:660.84px;font-size:12px;line-height:14px;color:#333;right:1482px;">Focus point when scan starts</div>
<div class="t" style="top:660.84px;font-size:12px;line-height:14px;color:#333;left:38px;width:600px;text-align:center;">middle</div>
<div class="t" style="top:677.84px;font-size:12px;line-height:14px;color:#333;right:1482px;">Optical section spacing</div>
<div class="a" style="left:308px;top:677px;width:59px;height:17px;box-sizing:border-box;border:1px solid #7a8a99;background:#ffffff;box-shadow:inset -1px -1px 0 #ffffff;"></div>
<div class="a" style="left:309px;top:693px;width:58px;height:1px;background:#7a8a99;"></div>
<div class="a" style="left:366px;top:678px;width:1px;height:16px;background:#7a8a99;"></div>
<div class="t" style="top:678.84px;font-size:12px;line-height:14px;color:#333;left:311px;">0.125</div>
<div class="t" style="top:697.84px;font-size:12px;line-height:14px;color:#333;right:1482px;">Number of optical sections</div>
<div class="a" style="left:308px;top:697px;width:59px;height:17px;box-sizing:border-box;border:1px solid #7a8a99;background:#ffffff;box-shadow:inset -1px -1px 0 #ffffff;"></div>
<div class="a" style="left:309px;top:713px;width:58px;height:1px;background:#7a8a99;"></div>
<div class="a" style="left:366px;top:698px;width:1px;height:16px;background:#7a8a99;"></div>
<div class="t" style="top:698.84px;font-size:12px;line-height:14px;color:#333;left:311px;">1</div>
<div class="t" style="top:718.84px;font-size:12px;line-height:14px;color:#333;right:1482px;">Sample thickness</div>
<div class="a" style="left:308px;top:718px;width:59px;height:17px;box-sizing:border-box;border:1px solid #7a8a99;background:#ffffff;box-shadow:inset -1px -1px 0 #ffffff;"></div>
<div class="a" style="left:309px;top:734px;width:58px;height:1px;background:#7a8a99;"></div>
<div class="a" style="left:366px;top:719px;width:1px;height:16px;background:#7a8a99;"></div>
<div class="t" style="top:719.84px;font-size:12px;line-height:14px;color:#333;left:311px;">0</div>
<div class="a" style="left:397px;top:717px;width:100px;height:20px;box-sizing:border-box;border:1px solid #7a8a99;background:linear-gradient(to bottom,#ffffff 0%,#f3f7fb 25%,#dde8f3 45%,#c6d7ea 100%);"></div>
<div class="t" style="top:720.34px;font-size:12px;line-height:14px;color:#333;left:147.0px;width:600px;text-align:center;">Get thickness</div>
<div class="a" style="left:20px;top:760px;width:583px;height:111px;box-sizing:border-box;border:1px solid #b8cfe5;"></div>
<div class="a" style="left:24px;top:754px;width:85px;height:14px;background:#eeeeee;"></div>
<div class="a" style="left:26px;top:755px;width:13px;height:13px;box-sizing:border-box;border:1px solid #7a8a99;background:linear-gradient(to bottom right,#ffffff 0%,#e8eff7 50%,#c6d7ea 100%);"></div>
<div class="t" style="top:753.84px;font-size:12px;line-height:14px;color:#333;left:43px;">Time-lapse</div>
<div class="t" style="top:792.84px;font-size:12px;line-height:14px;color:#333;left:-57.5px;width:600px;text-align:center;">Hours</div>
<div class="t" style="top:792.84px;font-size:12px;line-height:14px;color:#333;left:-9px;width:600px;text-align:center;">Minutes</div>
<div class="t" style="top:792.84px;font-size:12px;line-height:14px;color:#333;left:44px;width:600px;text-align:center;">Seconds</div>
<div class="t" style="top:792.84px;font-size:12px;line-height:14px;color:#333;left:95px;width:600px;text-align:center;">Msecs</div>
<div class="t" style="top:809.84px;font-size:12px;line-height:14px;color:#333;right:1562px;">Time-lapse</div>
<div class="t" style="top:829.84px;font-size:12px;line-height:14px;color:#333;right:1564px;">Total time</div>
<div class="t" style="top:829.84px;font-size:12px;line-height:14px;color:#333;left:28px;">Time points</div>
<div class="a" style="left:100px;top:829px;width:44px;height:18px;box-sizing:border-box;border:1px solid #b8cfe5;background:#ffffff;"></div>
<div class="t" style="top:831.34px;font-size:12px;line-height:14px;color:#b8cfe5;left:103px;">101</div>
<div class="a" style="left:223px;top:809px;width:38px;height:18px;box-sizing:border-box;border:1px solid #b8cfe5;background:#ffffff;"></div>
<div class="t" style="top:811.34px;font-size:12px;line-height:14px;color:#b8cfe5;left:226px;">0</div>
<div class="a" style="left:223px;top:829px;width:38px;height:18px;box-sizing:border-box;border:1px solid #b8cfe5;background:#ffffff;"></div>
<div class="t" style="top:831.34px;font-size:12px;line-height:14px;color:#b8cfe5;left:226px;">0</div>
<div class="a" style="left:272px;top:809px;width:38px;height:18px;box-sizing:border-box;border:1px solid #b8cfe5;background:#ffffff;"></div>
<div class="t" style="top:811.34px;font-size:12px;line-height:14px;color:#b8cfe5;left:275px;">0</div>
<div class="a" style="left:272px;top:829px;width:38px;height:18px;box-sizing:border-box;border:1px solid #b8cfe5;background:#ffffff;"></div>
<div class="t" style="top:831.34px;font-size:12px;line-height:14px;color:#b8cfe5;left:275px;">0</div>
<div class="a" style="left:325px;top:809px;width:38px;height:18px;box-sizing:border-box;border:1px solid #b8cfe5;background:#ffffff;"></div>
<div class="t" style="top:811.34px;font-size:12px;line-height:14px;color:#b8cfe5;left:328px;">2</div>
<div class="a" style="left:325px;top:829px;width:38px;height:18px;box-sizing:border-box;border:1px solid #b8cfe5;background:#ffffff;"></div>
<div class="t" style="top:831.34px;font-size:12px;line-height:14px;color:#b8cfe5;left:328px;">200</div>
<div class="a" style="left:376px;top:809px;width:38px;height:18px;box-sizing:border-box;border:1px solid #b8cfe5;background:#ffffff;"></div>
<div class="t" style="top:811.34px;font-size:12px;line-height:14px;color:#b8cfe5;left:379px;">0</div>
<div class="a" style="left:376px;top:829px;width:38px;height:18px;box-sizing:border-box;border:1px solid #b8cfe5;background:#ffffff;"></div>
<div class="t" style="top:831.34px;font-size:12px;line-height:14px;color:#b8cfe5;left:379px;">0</div>
<div class="a" style="left:422px;top:772px;width:2px;height:97px;background:#6382bf;"></div>
<div class="a" style="left:431px;top:779px;width:13px;height:13px;box-sizing:border-box;border:1px solid #7a8a99;background:transparent;"></div>
<div class="t" style="top:777.84px;font-size:12px;line-height:14px;color:#999;left:448px;">Subset Time-lapse</div>
<div class="t" style="top:808.84px;font-size:12px;line-height:14px;color:#333;left:439px;">Every</div>
<div class="a" style="left:473px;top:809px;width:48px;height:16px;box-sizing:border-box;border:1px solid #b8cfe5;background:#ffffff;"></div>
<div class="t" style="top:810.34px;font-size:12px;line-height:14px;color:#b8cfe5;left:476px;">0</div>
<div class="t" style="top:808.84px;font-size:12px;line-height:14px;color:#333;left:526px;">time points</div>
<div class="t" style="top:844.84px;font-size:12px;line-height:14px;color:#333;left:424px;">Image:</div>
<div class="a" style="left:466px;top:846px;width:13px;height:13px;box-sizing:border-box;border:1px solid #7a8a99;background:transparent;"></div>
<div class="t" style="top:844.84px;font-size:12px;line-height:14px;color:#aaa;left:483px;">A</div>
<div class="a" style="left:501px;top:846px;width:13px;height:13px;box-sizing:border-box;border:1px solid #7a8a99;background:transparent;"></div>
<div class="t" style="top:844.84px;font-size:12px;line-height:14px;color:#aaa;left:518px;">B</div>
<div class="a" style="left:536px;top:846px;width:13px;height:13px;box-sizing:border-box;border:1px solid #7a8a99;background:transparent;"></div>
<div class="t" style="top:844.84px;font-size:12px;line-height:14px;color:#aaa;left:553px;">C</div>
<div class="a" style="left:571px;top:846px;width:13px;height:13px;box-sizing:border-box;border:1px solid #7a8a99;background:transparent;"></div>
<div class="t" style="top:844.84px;font-size:12px;line-height:14px;color:#aaa;left:588px;">D</div>
<div class="a" style="left:20px;top:878px;width:583px;height:47px;box-sizing:border-box;border:1px solid #b8cfe5;"></div>
<div class="a" style="left:24px;top:877px;width:61px;height:3px;background:#eeeeee;"></div>
<div class="t" style="top:870.84px;font-size:12px;line-height:14px;color:#333;left:26px;">AutoFocus</div>
<div class="a" style="left:168px;top:898px;width:13px;height:13px;box-sizing:border-box;border:1px solid #7a8a99;background:linear-gradient(to bottom right,#ffffff 0%,#e8eff7 50%,#c6d7ea 100%);"></div>
<svg class="a" style="left:168px;top:898px" width="13" height="13"><path d="M3.5 6.5 L5.5 9.5 L9.5 3" stroke="#222" stroke-width="1.8" fill="none"/></svg>
<div class="t" style="top:896.84px;font-size:12px;line-height:14px;color:#333;left:185px;">HW UltimateFocus</div>
<div class="a" style="left:297px;top:898px;width:13px;height:13px;box-sizing:border-box;border:1px solid #7a8a99;background:linear-gradient(to bottom right,#ffffff 0%,#e8eff7 50%,#c6d7ea 100%);"></div>
<div class="t" style="top:896.84px;font-size:12px;line-height:14px;color:#333;left:314px;">SW AutoFocus</div>
<div class="a" style="left:399px;top:895px;width:60px;height:18px;box-sizing:border-box;border:1px solid #7a8a99;background:linear-gradient(to bottom,#ffffff 0%,#f3f7fb 25%,#dde8f3 45%,#c6d7ea 100%);"></div>
<div class="t" style="top:897.34px;font-size:12px;line-height:14px;color:#333;left:129.0px;width:600px;text-align:center;">Settings</div>
<div class="a" style="left:20px;top:936px;width:583px;height:45px;box-sizing:border-box;border:1px solid #b8cfe5;"></div>
<div class="a" style="left:24px;top:930px;width:80px;height:14px;background:#eeeeee;"></div>
<div class="a" style="left:26px;top:931px;width:13px;height:13px;box-sizing:border-box;border:1px solid #7a8a99;background:linear-gradient(to bottom right,#ffffff 0%,#e8eff7 50%,#c6d7ea 100%);"></div>
<div class="t" style="top:929.84px;font-size:12px;line-height:14px;color:#333;left:43px;">Visit Points</div>
<div class="a" style="left:26px;top:953px;width:179px;height:19px;box-sizing:border-box;border:1px solid #7a8a99;background:#ffffff;box-shadow:inset -1px -1px 0 #ffffff;"></div>
<div class="a" style="left:27px;top:971px;width:178px;height:1px;background:#7a8a99;"></div>
<div class="a" style="left:204px;top:954px;width:1px;height:18px;background:#7a8a99;"></div>
<div class="t" style="top:955.84px;font-size:12px;line-height:14px;color:#333;left:29px;">all</div>
<div class="t" style="top:987.84px;font-size:12px;line-height:14px;color:#333;right:1708px;">Data File</div>
<div class="a" style="left:72px;top:983px;width:383px;height:22px;box-sizing:border-box;border:1px solid #7a8a99;background:#ffffff;box-shadow:inset -1px -1px 0 #ffffff;"></div>
<div class="a" style="left:73px;top:1004px;width:382px;height:1px;background:#7a8a99;"></div>
<div class="a" style="left:454px;top:984px;width:1px;height:21px;background:#7a8a99;"></div>
<div class="t" style="top:987.84px;font-size:12px;line-height:14px;color:#333;letter-spacing:-0.38px;left:73px;">KOC1/TPM3KOC2_FRAPmiRFPpaxillin_fibronectin_2SEC5MIN_030244.dv</div>
<div class="a" style="left:456px;top:983px;width:85px;height:23px;box-sizing:border-box;border:1px solid #7a8a99;background:linear-gradient(to bottom,#ffffff 0%,#f3f7fb 25%,#dde8f3 45%,#c6d7ea 100%);"></div>
<div class="t" style="top:987.84px;font-size:12px;line-height:14px;color:#333;left:198.5px;width:600px;text-align:center;">Save As...</div>
<div class="t" style="top:1012.84px;font-size:12px;line-height:14px;color:#333;right:1708px;">Title</div>
<div class="a" style="left:72px;top:1010px;width:468px;height:22px;box-sizing:border-box;border:1px solid #7a8a99;background:#ffffff;box-shadow:inset -1px -1px 0 #ffffff;"></div>
<div class="a" style="left:73px;top:1031px;width:467px;height:1px;background:#7a8a99;"></div>
<div class="a" style="left:539px;top:1011px;width:1px;height:21px;background:#7a8a99;"></div>
<div class="a" style="left:545px;top:981px;width:60px;height:54px;box-sizing:border-box;border:1px solid #7a8a99;background:linear-gradient(to bottom,#ffffff 0%,#f3f7fb 25%,#dde8f3 45%,#c6d7ea 100%);"></div>
<div class="t" style="top:1001.34px;font-size:12px;line-height:14px;color:#333;left:275.0px;width:600px;text-align:center;">Run</div>
<div class="a" style="left:627px;top:52px;width:1113px;height:994px;box-sizing:border-box;border-left:1px solid #8c8c8c;border-top:1px solid #8c8c8c;border-right:1px solid #8c8c8c;"></div>
<div class="a" style="left:628px;top:53px;width:1px;height:992px;background:#ffffff;"></div>
<div class="a" style="left:628px;top:53px;width:1110px;height:1px;background:#ffffff;"></div>
<div class="a" style="left:1755px;top:46px;width:1px;height:999px;background:#ffffff;"></div>
<div class="a" style="left:1756px;top:46px;width:16px;height:999px;box-sizing:border-box;border:1px solid #7a8a99;background:#eeeeee;"></div>
<div class="a" style="left:1757px;top:46px;width:14px;height:15px;box-sizing:border-box;border-top:1px solid #fff;border-left:1px solid #fff;background:#eeeeee;"></div>
<svg class="a" style="left:1760.0px;top:51.0px" width="8" height="4"><polygon points="0,4 8,4 4.0,0" fill="#222"/></svg>
<div class="a" style="left:1757px;top:61px;width:14px;height:892px;box-sizing:border-box;border-left:1px solid #6382bf;border-top:1px solid #6382bf;border-bottom:1px solid #6382bf;background:linear-gradient(to right,#c8daee 0%,#ffffff 30%,#dde8f3 60%,#c0d4ea 100%);"></div>
<div class="a" style="left:1760px;top:505px;width:9px;height:1px;background:#6382bf;"></div>
<div class="a" style="left:1760px;top:507px;width:9px;height:1px;background:#6382bf;"></div>
<div class="a" style="left:1760px;top:509px;width:9px;height:1px;background:#6382bf;"></div>
<div class="a" style="left:1757px;top:1029px;width:14px;height:15px;box-sizing:border-box;border-top:1px solid #7a8a99;background:#eeeeee;"></div>
<svg class="a" style="left:1760.0px;top:1034.0px" width="8" height="4"><polygon points="0,0 8,0 4.0,4" fill="#333"/></svg>
<div class="a" style="left:631px;top:71px;width:10px;height:377px;box-sizing:border-box;border-left:1px solid #000;border-top:1px solid #000;background:#fff;"></div>
<div class="a" style="left:633px;top:73px;width:8px;height:7px;background:#c0c0c0;"></div>
<div class="a" style="left:633px;top:80px;width:8px;height:1px;background:#000;"></div>
<div class="a" style="left:633px;top:81px;width:8px;height:1px;background:#fff;"></div>
<div class="a" style="left:633px;top:82px;width:8px;height:357px;background:#c0c0c0;"></div>
<div class="a" style="left:633px;top:439px;width:8px;height:1px;background:#000;"></div>
<div class="a" style="left:633px;top:440px;width:8px;height:1px;background:#fff;"></div>
<div class="a" style="left:633px;top:441px;width:8px;height:6px;background:#c0c0c0;"></div>
<div class="a" style="left:633px;top:447px;width:8px;height:1px;background:#000;"></div>
<div class="a" style="left:641px;top:57px;width:376px;height:13px;box-sizing:border-box;border:1px solid #000;border-bottom:none;background:linear-gradient(to right,#b4b5cb 0%,#a8a7b9 50%,#8c8b9c 100%);"></div>
<div class="t" style="top:56.69px;font-size:11px;line-height:14px;color:#000;letter-spacing:0.25px;left:645px;">B:&nbsp; Camera 2 A488</div>
<div class="t" style="top:56.69px;font-size:11px;line-height:14px;color:#000;letter-spacing:0.25px;right:777px;">Temp: 4 C</div>
<div class="a" style="left:641px;top:70px;width:376px;height:378px;background:#000;overflow:hidden"><svg width="376" height="378" style="position:absolute;left:0;top:0"><defs><filter id="bl3" x="-10%" y="-10%" width="120%" height="120%" color-interpolation-filters="sRGB"><feGaussianBlur stdDeviation="2.8"/></filter><filter id="bw3" x="-10%" y="-10%" width="120%" height="120%" color-interpolation-filters="sRGB"><feGaussianBlur stdDeviation="7"/></filter></defs><g filter="url(#bw3)" fill="none" stroke-linecap="round" stroke-linejoin="round"><defs><radialGradient id="rgB1"><stop offset="0" stop-color="#242424"/><stop offset="1" stop-color="#050505" stop-opacity="0"/></radialGradient></defs><rect x="-10" y="-10" width="400" height="400" fill="#050505" stroke="none"/><ellipse cx="250" cy="200" rx="150" ry="90" transform="rotate(30 250 200)" fill="url(#rgB1)" stroke="none"/><ellipse cx="110" cy="90" rx="90" ry="55" transform="rotate(60 110 90)" fill="url(#rgB1)" stroke="none" opacity="0.6"/><ellipse cx="300" cy="90" rx="60" ry="90" fill="url(#rgB1)" stroke="none" opacity="0.7"/><path d="M86,3 C95,31 104,66 121,84 C143,110 165,132 187,154 C204,167 222,189 244,207 C266,220 292,233 323,250 C345,264 360,270 376,277" stroke="#3a3a3a" stroke-width="20" opacity="1.0"/><path d="M209,3 C218,40 231,66 244,88 L268,88" stroke="#383838" stroke-width="14" opacity="1.0"/><path d="M244,88 C235,115 222,137 209,154 C200,165 196,172 190,182" stroke="#303030" stroke-width="12" opacity="1.0"/><path d="M310,3 C305,36 310,66 318,93 C305,119 292,132 275,145 C261,163 257,176 250,195" stroke="#303030" stroke-width="12" opacity="1.0"/><path d="M320,100 L342,92" stroke="#404040" stroke-width="16" opacity="1.0"/><path d="M325,110 C331,136 336,172 336,211 C345,225 360,235 376,245" stroke="#2a2a2a" stroke-width="10" opacity="1.0"/><path d="M0,141 C25,134 51,126 77,119 C104,115 125,115 147,128 L172,140" stroke="#2c2c2c" stroke-width="10" opacity="1.0"/><path d="M84,3 C80,20 76,35 73,44 C66,60 60,84 47,119" stroke="#2a2a2a" stroke-width="10" opacity="1.0"/><path d="M77,185 C55,189 38,215 31,250 C31,277 38,312 55,347 L77,362" stroke="#262626" stroke-width="10" opacity="1.0"/><path d="M99,178 C104,215 99,250 90,285 C86,321 82,345 80,378" stroke="#262626" stroke-width="10" opacity="1.0"/><path d="M77,185 L99,178" stroke="#303030" stroke-width="10" opacity="1.0"/><path d="M161,180 C143,207 126,233 112,259 L108,280" stroke="#222222" stroke-width="8" opacity="1.0"/><path d="M139,334 L134,378" stroke="#262626" stroke-width="10" opacity="1.0"/><path d="M239,281 C220,290 204,303 178,316" stroke="#222222" stroke-width="8" opacity="1.0"/><path d="M90,15 C95,40 98,80 98,118" stroke="#1e1e1e" stroke-width="8" opacity="1.0"/><path d="M165,132 C200,170 260,215 376,270" stroke="#404040" stroke-width="44" opacity="1.0"/><path d="M290,60 C300,120 320,180 376,230" stroke="#262626" stroke-width="40" opacity="1.0"/><path d="M40,180 C30,250 40,330 80,370" stroke="#1c1c1c" stroke-width="30" opacity="1.0"/></g><g filter="url(#bl3)" fill="none" stroke-linecap="round" stroke-linejoin="round"><path d="M86,3 C95,31 104,66 121,84 C143,110 165,132 187,154 C204,167 222,189 244,207 C266,220 292,233 323,250 C345,264 360,270 376,277" stroke="#8c8c8c" stroke-width="5.5" opacity="1.0"/><path d="M209,3 C218,40 231,66 244,88 L268,88" stroke="#8a8a8a" stroke-width="5" opacity="1.0"/><path d="M244,88 C235,115 222,137 209,154 C200,165 196,172 190,182" stroke="#727272" stroke-width="4" opacity="1.0"/><path d="M310,3 C305,36 310,66 318,93 C305,119 292,132 275,145 C261,163 257,176 250,195" stroke="#7c7c7c" stroke-width="4.5" opacity="1.0"/><path d="M320,100 L342,92" stroke="#9a9a9a" stroke-width="5" opacity="1.0"/><path d="M325,110 C331,136 336,172 336,211 C345,225 360,235 376,245" stroke="#6a6a6a" stroke-width="3.8" opacity="1.0"/><path d="M0,141 C25,134 51,126 77,119 C104,115 125,115 147,128 L172,140" stroke="#727272" stroke-width="4" opacity="1.0"/><path d="M84,3 C80,20 76,35 73,44 C66,60 60,84 47,119" stroke="#6a6a6a" stroke-width="3.8" opacity="1.0"/><path d="M77,185 C55,189 38,215 31,250 C31,277 38,312 55,347 L77,362" stroke="#626262" stroke-width="3.8" opacity="1.0"/><path d="M99,178 C104,215 99,250 90,285 C86,321 82,345 80,378" stroke="#626262" stroke-width="3.8" opacity="1.0"/><path d="M77,185 L99,178" stroke="#888888" stroke-width="4" opacity="1.0"/><path d="M161,180 C143,207 126,233 112,259 L108,280" stroke="#555555" stroke-width="3.2" opacity="1.0"/><path d="M139,334 L134,378" stroke="#666666" stroke-width="3.8" opacity="1.0"/><path d="M239,281 C220,290 204,303 178,316" stroke="#555555" stroke-width="3.2" opacity="1.0"/><path d="M3,0 L5,80" stroke="#3a3a3a" stroke-width="3" opacity="1.0"/><path d="M90,15 C95,40 98,80 98,118" stroke="#4a4a4a" stroke-width="3" opacity="1.0"/><path d="M165,132 C200,170 260,215 376,270" stroke="#404040" stroke-width="3" opacity="1.0"/><path d="M290,60 C300,120 320,180 376,230" stroke="#303030" stroke-width="3" opacity="1.0"/><path d="M40,180 C30,250 40,330 80,370" stroke="#303030" stroke-width="3" opacity="1.0"/><path d="M340,120 C360,150 370,200 376,215" stroke="#3a3a3a" stroke-width="3" opacity="1.0"/><circle cx="169" cy="154" r="5" stroke="#777" stroke-width="2"/><circle cx="73" cy="44" r="2.8" fill="#b8b8b8" stroke="none"/><circle cx="77" cy="185" r="2.8" fill="#b8b8b8" stroke="none"/><circle cx="99" cy="178" r="2.8" fill="#b8b8b8" stroke="none"/><circle cx="218" cy="40" r="2.8" fill="#b8b8b8" stroke="none"/><circle cx="231" cy="70" r="2.8" fill="#b8b8b8" stroke="none"/><circle cx="266" cy="88" r="2.8" fill="#b8b8b8" stroke="none"/><circle cx="209" cy="154" r="2.8" fill="#b8b8b8" stroke="none"/><circle cx="204" cy="167" r="2.8" fill="#b8b8b8" stroke="none"/><circle cx="261" cy="163" r="2.8" fill="#b8b8b8" stroke="none"/><circle cx="301" cy="233" r="2.8" fill="#b8b8b8" stroke="none"/><circle cx="340" cy="268" r="2.8" fill="#b8b8b8" stroke="none"/><circle cx="139" cy="334" r="2.8" fill="#b8b8b8" stroke="none"/><circle cx="239" cy="281" r="2.8" fill="#b8b8b8" stroke="none"/><circle cx="196" cy="172" r="2.8" fill="#b8b8b8" stroke="none"/><circle cx="222" cy="189" r="2.8" fill="#b8b8b8" stroke="none"/><circle cx="371" cy="242" r="2.8" fill="#b8b8b8" stroke="none"/><circle cx="35" cy="290" r="2.8" fill="#b8b8b8" stroke="none"/><circle cx="33" cy="250" r="2.8" fill="#b8b8b8" stroke="none"/><circle cx="40" cy="320" r="2.8" fill="#b8b8b8" stroke="none"/><circle cx="90" cy="290" r="2.8" fill="#b8b8b8" stroke="none"/><circle cx="104" cy="66" r="2.8" fill="#b8b8b8" stroke="none"/><circle cx="121" cy="84" r="2.8" fill="#b8b8b8" stroke="none"/><circle cx="143" cy="110" r="2.8" fill="#b8b8b8" stroke="none"/><circle cx="244" cy="207" r="2.8" fill="#b8b8b8" stroke="none"/><circle cx="266" cy="220" r="2.8" fill="#b8b8b8" stroke="none"/><circle cx="323" cy="250" r="2.8" fill="#b8b8b8" stroke="none"/><circle cx="25" cy="134" r="2.8" fill="#b8b8b8" stroke="none"/><circle cx="51" cy="126" r="2.8" fill="#b8b8b8" stroke="none"/><circle cx="125" cy="115" r="2.8" fill="#b8b8b8" stroke="none"/><circle cx="305" cy="119" r="2.8" fill="#b8b8b8" stroke="none"/><circle cx="292" cy="132" r="2.8" fill="#b8b8b8" stroke="none"/><circle cx="275" cy="145" r="2.8" fill="#b8b8b8" stroke="none"/><circle cx="336" cy="172" r="2.8" fill="#b8b8b8" stroke="none"/><circle cx="336" cy="211" r="2.8" fill="#b8b8b8" stroke="none"/><circle cx="112" cy="259" r="2.8" fill="#b8b8b8" stroke="none"/><circle cx="80" cy="355" r="2.8" fill="#b8b8b8" stroke="none"/><circle cx="55" cy="347" r="2.8" fill="#b8b8b8" stroke="none"/><circle cx="318" cy="93" r="3.6" fill="#e6e6e6" stroke="none"/><circle cx="312" cy="85" r="3.6" fill="#e6e6e6" stroke="none"/><circle cx="325" cy="100" r="3.6" fill="#e6e6e6" stroke="none"/><circle cx="214" cy="166" r="3.6" fill="#e6e6e6" stroke="none"/><circle cx="268" cy="176" r="3.6" fill="#e6e6e6" stroke="none"/><circle cx="86" cy="3" r="3.6" fill="#e6e6e6" stroke="none"/><circle cx="209" cy="3" r="3.6" fill="#e6e6e6" stroke="none"/><circle cx="231.1" cy="204.3" r="2.8" fill="rgb(186,186,186)"/><circle cx="353.4" cy="285.0" r="1.3" fill="rgb(147,147,147)"/><circle cx="92.5" cy="58.8" r="2.3" fill="rgb(144,144,144)"/><circle cx="157.8" cy="127.3" r="1.7" fill="rgb(113,113,113)"/><circle cx="272.9" cy="225.5" r="1.5" fill="rgb(174,174,174)"/><circle cx="114.2" cy="85.2" r="2.3" fill="rgb(206,206,206)"/><circle cx="296.3" cy="224.1" r="2.4" fill="rgb(176,176,176)"/><circle cx="93.4" cy="28.9" r="2.6" fill="rgb(176,176,176)"/><circle cx="241.0" cy="210.1" r="1.5" fill="rgb(165,165,165)"/><circle cx="372.3" cy="277.1" r="1.5" fill="rgb(132,132,132)"/><circle cx="341.2" cy="251.4" r="1.4" fill="rgb(102,102,102)"/><circle cx="104.7" cy="57.5" r="2.8" fill="rgb(199,199,199)"/><circle cx="289.7" cy="239.3" r="1.4" fill="rgb(103,103,103)"/><circle cx="217.8" cy="184.7" r="1.6" fill="rgb(92,92,92)"/><circle cx="339.0" cy="245.5" r="2.8" fill="rgb(142,142,142)"/><circle cx="269.8" cy="232.7" r="2.5" fill="rgb(106,106,106)"/><circle cx="89.2" cy="15.9" r="1.8" fill="rgb(91,91,91)"/><circle cx="315.3" cy="237.9" r="1.3" fill="rgb(196,196,196)"/><circle cx="218.1" cy="178.6" r="2.2" fill="rgb(196,196,196)"/><circle cx="196.0" cy="159.0" r="1.6" fill="rgb(198,198,198)"/><circle cx="173.5" cy="138.8" r="1.4" fill="rgb(113,113,113)"/><circle cx="182.6" cy="150.0" r="2.3" fill="rgb(142,142,142)"/><circle cx="93.4" cy="27.9" r="2.0" fill="rgb(138,138,138)"/><circle cx="255.4" cy="209.4" r="2.2" fill="rgb(173,173,173)"/><circle cx="202.9" cy="168.8" r="2.2" fill="rgb(97,97,97)"/><circle cx="131.0" cy="89.9" r="1.8" fill="rgb(184,184,184)"/><circle cx="304.8" cy="235.8" r="1.3" fill="rgb(101,101,101)"/><circle cx="367.8" cy="270.8" r="1.3" fill="rgb(118,118,118)"/><circle cx="352.3" cy="272.5" r="2.7" fill="rgb(166,166,166)"/><circle cx="346.1" cy="265.0" r="1.2" fill="rgb(180,180,180)"/><circle cx="107.1" cy="42.7" r="1.5" fill="rgb(186,186,186)"/><circle cx="102.4" cy="67.1" r="2.5" fill="rgb(196,196,196)"/><circle cx="357.1" cy="261.1" r="2.1" fill="rgb(188,188,188)"/><circle cx="198.2" cy="161.6" r="2.5" fill="rgb(99,99,99)"/><circle cx="87.4" cy="23.2" r="1.8" fill="rgb(90,90,90)"/><circle cx="293.8" cy="229.6" r="2.5" fill="rgb(144,144,144)"/><circle cx="97.5" cy="48.3" r="1.9" fill="rgb(103,103,103)"/><circle cx="362.0" cy="270.9" r="1.4" fill="rgb(177,177,177)"/><circle cx="322.5" cy="245.9" r="1.8" fill="rgb(126,126,126)"/><circle cx="293.8" cy="237.9" r="2.8" fill="rgb(182,182,182)"/><circle cx="89.4" cy="7.1" r="2.3" fill="rgb(161,161,161)"/><circle cx="203.3" cy="173.9" r="2.2" fill="rgb(167,167,167)"/><circle cx="344.2" cy="250.3" r="2.7" fill="rgb(190,190,190)"/><circle cx="281.2" cy="224.1" r="2.6" fill="rgb(141,141,141)"/><circle cx="337.5" cy="266.6" r="1.9" fill="rgb(174,174,174)"/><circle cx="128.9" cy="99.8" r="1.7" fill="rgb(101,101,101)"/><circle cx="194.4" cy="149.6" r="2.7" fill="rgb(181,181,181)"/><circle cx="326.2" cy="245.3" r="1.6" fill="rgb(119,119,119)"/><circle cx="180.7" cy="142.8" r="2.6" fill="rgb(200,200,200)"/><circle cx="153.2" cy="107.4" r="2.6" fill="rgb(185,185,185)"/><circle cx="221.6" cy="182.6" r="1.7" fill="rgb(165,165,165)"/><circle cx="147.5" cy="125.8" r="1.5" fill="rgb(153,153,153)"/><circle cx="234.3" cy="205.8" r="1.9" fill="rgb(199,199,199)"/><circle cx="265.1" cy="216.5" r="1.5" fill="rgb(124,124,124)"/><circle cx="346.4" cy="259.5" r="2.3" fill="rgb(208,208,208)"/><circle cx="100.6" cy="74.9" r="2.3" fill="rgb(179,179,179)"/><circle cx="285.6" cy="234.1" r="1.2" fill="rgb(172,172,172)"/><circle cx="117.5" cy="96.8" r="2.2" fill="rgb(160,160,160)"/><circle cx="242.7" cy="205.1" r="1.7" fill="rgb(97,97,97)"/><circle cx="99.3" cy="30.1" r="1.4" fill="rgb(103,103,103)"/><circle cx="210.4" cy="162.9" r="1.6" fill="rgb(182,182,182)"/><circle cx="113.7" cy="74.9" r="1.9" fill="rgb(172,172,172)"/><circle cx="186.0" cy="148.5" r="2.7" fill="rgb(131,131,131)"/><circle cx="325.6" cy="247.0" r="1.6" fill="rgb(192,192,192)"/><circle cx="301.4" cy="234.9" r="1.2" fill="rgb(112,112,112)"/><circle cx="345.9" cy="266.1" r="2.1" fill="rgb(169,169,169)"/><circle cx="112.0" cy="74.8" r="2.8" fill="rgb(135,135,135)"/><circle cx="245.0" cy="207.8" r="1.3" fill="rgb(91,91,91)"/><circle cx="332.5" cy="259.9" r="1.8" fill="rgb(176,176,176)"/><circle cx="102.8" cy="53.6" r="1.8" fill="rgb(152,152,152)"/><circle cx="98.8" cy="58.0" r="1.7" fill="rgb(135,135,135)"/><circle cx="290.4" cy="235.7" r="1.6" fill="rgb(136,136,136)"/><circle cx="157.9" cy="123.6" r="2.6" fill="rgb(96,96,96)"/><circle cx="255.3" cy="208.1" r="1.2" fill="rgb(142,142,142)"/><circle cx="90.0" cy="51.4" r="1.3" fill="rgb(104,104,104)"/><circle cx="199.0" cy="164.6" r="1.9" fill="rgb(104,104,104)"/><circle cx="89.4" cy="35.2" r="2.7" fill="rgb(156,156,156)"/><circle cx="95.8" cy="41.2" r="2.1" fill="rgb(194,194,194)"/><circle cx="364.1" cy="267.5" r="2.7" fill="rgb(152,152,152)"/><circle cx="132.8" cy="101.1" r="1.5" fill="rgb(99,99,99)"/><circle cx="140.1" cy="95.3" r="2.4" fill="rgb(98,98,98)"/><circle cx="187.2" cy="157.1" r="2.3" fill="rgb(133,133,133)"/><circle cx="106.5" cy="49.9" r="1.5" fill="rgb(91,91,91)"/><circle cx="247.8" cy="209.6" r="2.0" fill="rgb(178,178,178)"/><circle cx="214.9" cy="184.2" r="2.2" fill="rgb(168,168,168)"/><circle cx="107.3" cy="47.0" r="2.4" fill="rgb(192,192,192)"/><circle cx="165.9" cy="127.4" r="1.6" fill="rgb(161,161,161)"/><circle cx="343.6" cy="260.2" r="1.3" fill="rgb(142,142,142)"/><circle cx="105.6" cy="68.2" r="2.1" fill="rgb(202,202,202)"/><circle cx="172.7" cy="138.4" r="2.7" fill="rgb(117,117,117)"/><circle cx="181.7" cy="159.0" r="2.0" fill="rgb(209,209,209)"/><circle cx="241.2" cy="212.9" r="1.5" fill="rgb(209,209,209)"/><circle cx="192.2" cy="169.5" r="1.7" fill="rgb(138,138,138)"/><circle cx="155.3" cy="121.0" r="1.8" fill="rgb(109,109,109)"/><circle cx="321.2" cy="244.0" r="1.6" fill="rgb(144,144,144)"/><circle cx="220.7" cy="181.3" r="1.6" fill="rgb(104,104,104)"/><circle cx="363.4" cy="272.0" r="2.0" fill="rgb(159,159,159)"/><circle cx="338.5" cy="256.7" r="1.5" fill="rgb(160,160,160)"/><circle cx="178.1" cy="160.0" r="2.3" fill="rgb(193,193,193)"/><circle cx="358.5" cy="282.9" r="1.9" fill="rgb(96,96,96)"/><circle cx="345.7" cy="261.3" r="1.7" fill="rgb(124,124,124)"/><circle cx="368.2" cy="266.1" r="2.0" fill="rgb(191,191,191)"/><circle cx="301.2" cy="234.0" r="1.4" fill="rgb(119,119,119)"/><circle cx="241.8" cy="205.2" r="2.6" fill="rgb(205,205,205)"/><circle cx="125.1" cy="82.2" r="2.1" fill="rgb(111,111,111)"/><circle cx="263.2" cy="221.9" r="1.8" fill="rgb(152,152,152)"/><circle cx="266.8" cy="219.0" r="2.2" fill="rgb(146,146,146)"/><circle cx="256.3" cy="212.8" r="2.0" fill="rgb(171,171,171)"/><circle cx="267.3" cy="217.8" r="2.7" fill="rgb(184,184,184)"/><circle cx="111.4" cy="94.9" r="1.5" fill="rgb(139,139,139)"/><circle cx="365.5" cy="267.1" r="2.4" fill="rgb(133,133,133)"/><circle cx="253.2" cy="208.7" r="1.6" fill="rgb(115,115,115)"/><circle cx="137.5" cy="99.3" r="1.8" fill="rgb(140,140,140)"/><circle cx="82.4" cy="26.9" r="2.1" fill="rgb(132,132,132)"/><circle cx="264.4" cy="221.3" r="2.0" fill="rgb(92,92,92)"/><circle cx="260.5" cy="219.2" r="2.7" fill="rgb(182,182,182)"/><circle cx="310.4" cy="238.8" r="2.3" fill="rgb(205,205,205)"/><circle cx="115.3" cy="72.4" r="1.6" fill="rgb(188,188,188)"/><circle cx="240.1" cy="186.0" r="2.1" fill="rgb(113,113,113)"/><circle cx="78.3" cy="6.9" r="1.6" fill="rgb(98,98,98)"/><circle cx="90.8" cy="13.1" r="1.2" fill="rgb(117,117,117)"/><circle cx="129.8" cy="81.1" r="1.2" fill="rgb(103,103,103)"/><circle cx="355.4" cy="263.8" r="1.7" fill="rgb(152,152,152)"/><circle cx="143.6" cy="118.5" r="1.6" fill="rgb(96,96,96)"/><circle cx="96.9" cy="38.6" r="2.2" fill="rgb(173,173,173)"/><circle cx="136.0" cy="88.3" r="1.7" fill="rgb(149,149,149)"/><circle cx="119.5" cy="71.7" r="1.3" fill="rgb(108,108,108)"/><circle cx="256.4" cy="223.9" r="1.6" fill="rgb(185,185,185)"/><circle cx="310.0" cy="243.4" r="1.5" fill="rgb(174,174,174)"/><circle cx="305.3" cy="235.2" r="1.3" fill="rgb(169,169,169)"/><circle cx="232.4" cy="67.0" r="1.9" fill="rgb(100,100,100)"/><circle cx="234.7" cy="75.1" r="1.7" fill="rgb(143,143,143)"/><circle cx="246.2" cy="82.3" r="1.5" fill="rgb(119,119,119)"/><circle cx="232.9" cy="67.4" r="2.3" fill="rgb(110,110,110)"/><circle cx="219.3" cy="34.5" r="1.4" fill="rgb(112,112,112)"/><circle cx="245.6" cy="80.1" r="2.4" fill="rgb(169,169,169)"/><circle cx="218.3" cy="42.9" r="1.3" fill="rgb(150,150,150)"/><circle cx="217.0" cy="14.2" r="1.4" fill="rgb(183,183,183)"/><circle cx="251.2" cy="88.6" r="1.3" fill="rgb(140,140,140)"/><circle cx="224.9" cy="65.0" r="1.8" fill="rgb(167,167,167)"/><circle cx="216.7" cy="16.3" r="1.8" fill="rgb(115,115,115)"/><circle cx="237.2" cy="78.9" r="1.8" fill="rgb(161,161,161)"/><circle cx="239.6" cy="88.8" r="2.3" fill="rgb(183,183,183)"/><circle cx="237.1" cy="73.2" r="2.0" fill="rgb(117,117,117)"/><circle cx="219.1" cy="6.1" r="1.4" fill="rgb(136,136,136)"/><circle cx="233.2" cy="72.0" r="2.1" fill="rgb(167,167,167)"/><circle cx="229.2" cy="53.1" r="1.3" fill="rgb(186,186,186)"/><circle cx="209.3" cy="15.3" r="1.4" fill="rgb(100,100,100)"/><circle cx="214.2" cy="15.0" r="2.2" fill="rgb(106,106,106)"/><circle cx="216.1" cy="17.9" r="1.6" fill="rgb(102,102,102)"/><circle cx="220.3" cy="29.3" r="1.5" fill="rgb(164,164,164)"/><circle cx="259.1" cy="85.4" r="2.3" fill="rgb(150,150,150)"/><circle cx="213.9" cy="36.1" r="2.1" fill="rgb(102,102,102)"/><circle cx="218.3" cy="23.8" r="2.2" fill="rgb(123,123,123)"/><circle cx="218.4" cy="34.7" r="2.4" fill="rgb(104,104,104)"/><circle cx="250.0" cy="90.2" r="2.1" fill="rgb(124,124,124)"/><circle cx="209.7" cy="27.2" r="2.2" fill="rgb(147,147,147)"/><circle cx="209.9" cy="-1.3" r="2.3" fill="rgb(185,185,185)"/><circle cx="225.8" cy="32.9" r="1.5" fill="rgb(126,126,126)"/><circle cx="221.0" cy="47.2" r="1.3" fill="rgb(112,112,112)"/><circle cx="253.8" cy="180.7" r="2.3" fill="rgb(155,155,155)"/><circle cx="320.9" cy="51.5" r="2.4" fill="rgb(152,152,152)"/><circle cx="274.6" cy="145.3" r="2.0" fill="rgb(118,118,118)"/><circle cx="268.6" cy="168.1" r="1.6" fill="rgb(162,162,162)"/><circle cx="320.9" cy="70.1" r="2.3" fill="rgb(93,93,93)"/><circle cx="255.7" cy="177.2" r="2.0" fill="rgb(84,84,84)"/><circle cx="258.2" cy="168.9" r="1.6" fill="rgb(158,158,158)"/><circle cx="272.7" cy="151.3" r="1.6" fill="rgb(104,104,104)"/><circle cx="311.5" cy="25.2" r="2.2" fill="rgb(102,102,102)"/><circle cx="317.3" cy="20.8" r="1.4" fill="rgb(126,126,126)"/><circle cx="320.8" cy="79.2" r="1.6" fill="rgb(143,143,143)"/><circle cx="251.6" cy="176.5" r="2.1" fill="rgb(111,111,111)"/><circle cx="260.4" cy="170.1" r="1.9" fill="rgb(162,162,162)"/><circle cx="300.8" cy="109.2" r="2.3" fill="rgb(146,146,146)"/><circle cx="311.5" cy="50.2" r="2.4" fill="rgb(149,149,149)"/><circle cx="313.3" cy="29.0" r="1.9" fill="rgb(123,123,123)"/><circle cx="276.3" cy="142.3" r="1.8" fill="rgb(162,162,162)"/><circle cx="268.4" cy="156.9" r="2.1" fill="rgb(160,160,160)"/><circle cx="323.4" cy="41.2" r="1.7" fill="rgb(118,118,118)"/><circle cx="281.3" cy="139.1" r="1.6" fill="rgb(112,112,112)"/><circle cx="277.8" cy="148.6" r="1.8" fill="rgb(146,146,146)"/><circle cx="330.1" cy="28.7" r="1.9" fill="rgb(159,159,159)"/><circle cx="317.7" cy="39.3" r="2.1" fill="rgb(166,166,166)"/><circle cx="319.3" cy="78.8" r="1.2" fill="rgb(130,130,130)"/><circle cx="267.8" cy="169.8" r="1.8" fill="rgb(173,173,173)"/><circle cx="302.8" cy="120.0" r="2.2" fill="rgb(122,122,122)"/><circle cx="293.4" cy="125.8" r="1.7" fill="rgb(131,131,131)"/><circle cx="312.2" cy="100.7" r="1.6" fill="rgb(151,151,151)"/><circle cx="274.3" cy="150.0" r="1.8" fill="rgb(97,97,97)"/><circle cx="295.7" cy="121.2" r="1.9" fill="rgb(152,152,152)"/><circle cx="272.5" cy="140.9" r="1.5" fill="rgb(163,163,163)"/><circle cx="266.2" cy="183.8" r="1.7" fill="rgb(88,88,88)"/><circle cx="313.1" cy="12.1" r="1.4" fill="rgb(125,125,125)"/><circle cx="292.2" cy="128.5" r="2.1" fill="rgb(104,104,104)"/><circle cx="315.9" cy="48.8" r="1.9" fill="rgb(110,110,110)"/><circle cx="321.8" cy="87.7" r="1.8" fill="rgb(171,171,171)"/><circle cx="330.8" cy="102.7" r="2.2" fill="rgb(237,237,237)"/><circle cx="333.4" cy="94.9" r="1.8" fill="rgb(199,199,199)"/><circle cx="321.9" cy="86.7" r="2.6" fill="rgb(236,236,236)"/><circle cx="323.2" cy="98.1" r="2.0" fill="rgb(209,209,209)"/><circle cx="331.9" cy="101.7" r="2.4" fill="rgb(140,140,140)"/><circle cx="339.0" cy="90.2" r="2.4" fill="rgb(232,232,232)"/><circle cx="322.5" cy="95.6" r="2.3" fill="rgb(206,206,206)"/><circle cx="338.2" cy="96.2" r="2.0" fill="rgb(225,225,225)"/><circle cx="331.2" cy="91.9" r="2.0" fill="rgb(234,234,234)"/><circle cx="326.8" cy="100.8" r="1.7" fill="rgb(229,229,229)"/><circle cx="342.3" cy="96.5" r="2.2" fill="rgb(189,189,189)"/><circle cx="329.2" cy="89.7" r="2.3" fill="rgb(232,232,232)"/><circle cx="327.7" cy="99.5" r="2.1" fill="rgb(200,200,200)"/><circle cx="337.1" cy="100.9" r="2.1" fill="rgb(176,176,176)"/><circle cx="338.0" cy="92.7" r="2.0" fill="rgb(222,222,222)"/><circle cx="320.9" cy="84.6" r="1.8" fill="rgb(145,145,145)"/><circle cx="340.3" cy="98.6" r="1.6" fill="rgb(166,166,166)"/><circle cx="333.5" cy="86.3" r="2.9" fill="rgb(195,195,195)"/><circle cx="351.8" cy="99.6" r="2.2" fill="rgb(159,159,159)"/><circle cx="339.1" cy="93.0" r="1.6" fill="rgb(227,227,227)"/><circle cx="325.0" cy="88.8" r="1.6" fill="rgb(145,145,145)"/><circle cx="328.4" cy="85.4" r="2.4" fill="rgb(151,151,151)"/><circle cx="324.2" cy="91.8" r="2.5" fill="rgb(236,236,236)"/><circle cx="330.8" cy="91.8" r="2.1" fill="rgb(165,165,165)"/><circle cx="47.8" cy="213.3" r="1.9" fill="rgb(94,94,94)"/><circle cx="48.6" cy="210.4" r="1.9" fill="rgb(84,84,84)"/><circle cx="33.7" cy="275.9" r="1.6" fill="rgb(143,143,143)"/><circle cx="29.2" cy="288.0" r="1.8" fill="rgb(106,106,106)"/><circle cx="36.9" cy="246.5" r="2.1" fill="rgb(124,124,124)"/><circle cx="54.5" cy="205.9" r="1.9" fill="rgb(80,80,80)"/><circle cx="52.2" cy="325.6" r="1.2" fill="rgb(143,143,143)"/><circle cx="29.4" cy="248.9" r="1.9" fill="rgb(112,112,112)"/><circle cx="78.4" cy="353.4" r="1.8" fill="rgb(105,105,105)"/><circle cx="31.3" cy="251.0" r="2.0" fill="rgb(143,143,143)"/><circle cx="58.4" cy="332.0" r="1.5" fill="rgb(140,140,140)"/><circle cx="35.5" cy="219.8" r="2.1" fill="rgb(119,119,119)"/><circle cx="37.4" cy="223.0" r="2.1" fill="rgb(140,140,140)"/><circle cx="52.4" cy="200.2" r="2.1" fill="rgb(126,126,126)"/><circle cx="32.7" cy="254.6" r="2.0" fill="rgb(88,88,88)"/><circle cx="40.8" cy="227.9" r="1.6" fill="rgb(138,138,138)"/><circle cx="36.5" cy="215.5" r="1.3" fill="rgb(119,119,119)"/><circle cx="41.9" cy="320.0" r="1.5" fill="rgb(109,109,109)"/><circle cx="76.5" cy="345.0" r="1.6" fill="rgb(125,125,125)"/><circle cx="52.4" cy="326.9" r="2.1" fill="rgb(112,112,112)"/><circle cx="69.0" cy="353.9" r="1.9" fill="rgb(91,91,91)"/><circle cx="46.0" cy="310.9" r="1.7" fill="rgb(139,139,139)"/><circle cx="53.2" cy="199.6" r="1.4" fill="rgb(145,145,145)"/><circle cx="70.2" cy="189.4" r="2.1" fill="rgb(151,151,151)"/><circle cx="68.0" cy="190.2" r="1.9" fill="rgb(138,138,138)"/><circle cx="35.2" cy="236.9" r="1.3" fill="rgb(145,145,145)"/><circle cx="58.3" cy="203.7" r="1.5" fill="rgb(93,93,93)"/><circle cx="62.7" cy="351.2" r="1.5" fill="rgb(153,153,153)"/><circle cx="43.5" cy="211.1" r="2.2" fill="rgb(141,141,141)"/><circle cx="30.6" cy="296.5" r="1.6" fill="rgb(87,87,87)"/><circle cx="67.4" cy="343.4" r="1.9" fill="rgb(98,98,98)"/><circle cx="35.8" cy="255.8" r="2.1" fill="rgb(92,92,92)"/><circle cx="34.8" cy="307.8" r="1.4" fill="rgb(90,90,90)"/><circle cx="30.2" cy="264.2" r="1.6" fill="rgb(124,124,124)"/><circle cx="44.6" cy="321.5" r="2.1" fill="rgb(109,109,109)"/><circle cx="82.5" cy="369.8" r="1.8" fill="rgb(157,157,157)"/><circle cx="95.5" cy="254.7" r="1.2" fill="rgb(96,96,96)"/><circle cx="98.1" cy="207.1" r="1.8" fill="rgb(155,155,155)"/><circle cx="82.3" cy="320.6" r="1.8" fill="rgb(123,123,123)"/><circle cx="81.5" cy="348.0" r="1.8" fill="rgb(104,104,104)"/><circle cx="80.9" cy="379.9" r="1.3" fill="rgb(80,80,80)"/><circle cx="92.9" cy="292.2" r="1.3" fill="rgb(146,146,146)"/><circle cx="84.9" cy="305.5" r="2.2" fill="rgb(134,134,134)"/><circle cx="87.0" cy="320.5" r="1.6" fill="rgb(157,157,157)"/><circle cx="98.6" cy="240.9" r="1.6" fill="rgb(152,152,152)"/><circle cx="90.8" cy="295.6" r="1.4" fill="rgb(94,94,94)"/><circle cx="89.1" cy="348.5" r="1.5" fill="rgb(150,150,150)"/><circle cx="89.8" cy="288.4" r="1.6" fill="rgb(135,135,135)"/><circle cx="103.1" cy="184.2" r="1.3" fill="rgb(139,139,139)"/><circle cx="100.7" cy="234.8" r="1.9" fill="rgb(156,156,156)"/><circle cx="84.3" cy="376.6" r="1.9" fill="rgb(92,92,92)"/><circle cx="83.1" cy="322.2" r="2.1" fill="rgb(100,100,100)"/><circle cx="99.9" cy="208.0" r="1.8" fill="rgb(144,144,144)"/><circle cx="95.1" cy="210.2" r="1.8" fill="rgb(113,113,113)"/><circle cx="93.3" cy="287.0" r="1.6" fill="rgb(98,98,98)"/><circle cx="85.4" cy="334.9" r="1.4" fill="rgb(87,87,87)"/><circle cx="92.6" cy="275.6" r="2.0" fill="rgb(97,97,97)"/><circle cx="89.3" cy="309.1" r="1.7" fill="rgb(153,153,153)"/><circle cx="90.5" cy="299.9" r="1.3" fill="rgb(106,106,106)"/><circle cx="97.1" cy="193.4" r="1.5" fill="rgb(120,120,120)"/><circle cx="81.4" cy="367.0" r="1.5" fill="rgb(105,105,105)"/><circle cx="81.0" cy="356.9" r="1.4" fill="rgb(83,83,83)"/><circle cx="101.5" cy="199.1" r="1.4" fill="rgb(130,130,130)"/><circle cx="96.3" cy="189.6" r="1.3" fill="rgb(139,139,139)"/><circle cx="84.2" cy="321.1" r="1.9" fill="rgb(114,114,114)"/><circle cx="122.2" cy="119.2" r="1.2" fill="rgb(97,97,97)"/><circle cx="69.9" cy="122.4" r="1.9" fill="rgb(159,159,159)"/><circle cx="58.0" cy="128.7" r="1.4" fill="rgb(112,112,112)"/><circle cx="120.1" cy="116.0" r="1.3" fill="rgb(123,123,123)"/><circle cx="171.7" cy="138.5" r="1.7" fill="rgb(119,119,119)"/><circle cx="32.2" cy="128.3" r="2.0" fill="rgb(103,103,103)"/><circle cx="162.7" cy="131.2" r="1.3" fill="rgb(118,118,118)"/><circle cx="20.3" cy="130.4" r="1.8" fill="rgb(158,158,158)"/><circle cx="6.7" cy="133.5" r="1.3" fill="rgb(105,105,105)"/><circle cx="5.2" cy="135.9" r="1.5" fill="rgb(135,135,135)"/><circle cx="63.4" cy="120.4" r="2.2" fill="rgb(115,115,115)"/><circle cx="4.7" cy="143.4" r="2.1" fill="rgb(130,130,130)"/><circle cx="30.4" cy="129.8" r="1.3" fill="rgb(110,110,110)"/><circle cx="119.5" cy="115.6" r="1.6" fill="rgb(149,149,149)"/><circle cx="168.7" cy="145.7" r="2.0" fill="rgb(149,149,149)"/><circle cx="107.8" cy="116.0" r="2.1" fill="rgb(125,125,125)"/><circle cx="30.9" cy="130.8" r="1.5" fill="rgb(109,109,109)"/><circle cx="87.7" cy="116.8" r="1.5" fill="rgb(120,120,120)"/><circle cx="84.5" cy="120.2" r="1.4" fill="rgb(122,122,122)"/><circle cx="48.7" cy="122.6" r="2.0" fill="rgb(121,121,121)"/><circle cx="46.6" cy="127.0" r="1.6" fill="rgb(103,103,103)"/><circle cx="68.7" cy="115.6" r="1.7" fill="rgb(138,138,138)"/><circle cx="34.5" cy="131.2" r="1.5" fill="rgb(108,108,108)"/><circle cx="132.5" cy="117.1" r="1.4" fill="rgb(142,142,142)"/><circle cx="113.7" cy="112.0" r="1.9" fill="rgb(101,101,101)"/><circle cx="10.1" cy="138.6" r="2.2" fill="rgb(121,121,121)"/><circle cx="123.7" cy="114.4" r="1.4" fill="rgb(106,106,106)"/><circle cx="20.3" cy="130.9" r="1.7" fill="rgb(109,109,109)"/><circle cx="42.4" cy="127.9" r="2.1" fill="rgb(147,147,147)"/><circle cx="147.9" cy="129.9" r="1.5" fill="rgb(157,157,157)"/><circle cx="237.2" cy="108.3" r="2.1" fill="rgb(148,148,148)"/><circle cx="233.0" cy="115.9" r="1.6" fill="rgb(95,95,95)"/><circle cx="203.3" cy="162.9" r="2.1" fill="rgb(115,115,115)"/><circle cx="224.4" cy="126.2" r="1.2" fill="rgb(111,111,111)"/><circle cx="230.0" cy="125.9" r="2.0" fill="rgb(106,106,106)"/><circle cx="208.9" cy="152.2" r="1.2" fill="rgb(133,133,133)"/><circle cx="214.0" cy="149.4" r="2.1" fill="rgb(152,152,152)"/><circle cx="230.2" cy="109.2" r="1.5" fill="rgb(82,82,82)"/><circle cx="227.0" cy="117.1" r="1.7" fill="rgb(89,89,89)"/><circle cx="233.3" cy="112.0" r="1.6" fill="rgb(152,152,152)"/><circle cx="241.0" cy="99.3" r="2.1" fill="rgb(99,99,99)"/><circle cx="215.5" cy="145.9" r="2.0" fill="rgb(144,144,144)"/><circle cx="232.6" cy="111.4" r="2.2" fill="rgb(84,84,84)"/><circle cx="227.6" cy="130.0" r="2.0" fill="rgb(147,147,147)"/><circle cx="214.4" cy="145.4" r="1.3" fill="rgb(100,100,100)"/><circle cx="196.8" cy="163.5" r="1.3" fill="rgb(116,116,116)"/><circle cx="235.8" cy="109.1" r="1.3" fill="rgb(109,109,109)"/><circle cx="222.2" cy="130.9" r="1.9" fill="rgb(121,121,121)"/><circle cx="192.9" cy="183.5" r="1.7" fill="rgb(109,109,109)"/><circle cx="200.3" cy="175.6" r="1.6" fill="rgb(106,106,106)"/><circle cx="278.6" cy="228.3" r="1.3" fill="rgb(145,145,145)"/><circle cx="254.4" cy="212.6" r="1.9" fill="rgb(89,89,89)"/><circle cx="238.5" cy="182.1" r="1.8" fill="rgb(146,146,146)"/><circle cx="230.6" cy="202.6" r="2.1" fill="rgb(119,119,119)"/><circle cx="246.2" cy="215.4" r="2.3" fill="rgb(101,101,101)"/><circle cx="321.4" cy="270.9" r="1.2" fill="rgb(79,79,79)"/><circle cx="358.3" cy="247.3" r="1.9" fill="rgb(102,102,102)"/><circle cx="216.3" cy="189.5" r="2.2" fill="rgb(83,83,83)"/><circle cx="307.9" cy="251.4" r="1.4" fill="rgb(105,105,105)"/><circle cx="221.5" cy="187.9" r="1.9" fill="rgb(115,115,115)"/><circle cx="187.6" cy="181.3" r="2.0" fill="rgb(115,115,115)"/><circle cx="316.7" cy="245.8" r="1.8" fill="rgb(134,134,134)"/><circle cx="279.5" cy="212.9" r="1.8" fill="rgb(147,147,147)"/><circle cx="331.5" cy="248.5" r="2.1" fill="rgb(62,62,62)"/><circle cx="383.1" cy="260.1" r="1.6" fill="rgb(136,136,136)"/><circle cx="211.1" cy="153.4" r="1.2" fill="rgb(140,140,140)"/><circle cx="263.7" cy="190.2" r="1.9" fill="rgb(137,137,137)"/><circle cx="218.2" cy="164.9" r="1.2" fill="rgb(90,90,90)"/><circle cx="200.0" cy="159.2" r="1.4" fill="rgb(74,74,74)"/><circle cx="219.0" cy="217.8" r="2.5" fill="rgb(138,138,138)"/><circle cx="350.5" cy="278.2" r="1.6" fill="rgb(143,143,143)"/><circle cx="331.6" cy="242.9" r="1.3" fill="rgb(143,143,143)"/><circle cx="255.1" cy="206.1" r="1.4" fill="rgb(122,122,122)"/><circle cx="261.7" cy="197.1" r="1.5" fill="rgb(146,146,146)"/><circle cx="221.7" cy="158.6" r="1.5" fill="rgb(122,122,122)"/><circle cx="246.0" cy="212.6" r="2.5" fill="rgb(93,93,93)"/><circle cx="264.4" cy="218.4" r="2.3" fill="rgb(127,127,127)"/><circle cx="341.6" cy="266.3" r="1.7" fill="rgb(125,125,125)"/><circle cx="283.8" cy="248.2" r="1.4" fill="rgb(142,142,142)"/><circle cx="235.3" cy="212.2" r="1.5" fill="rgb(125,125,125)"/><circle cx="238.4" cy="190.8" r="1.6" fill="rgb(117,117,117)"/><circle cx="248.9" cy="227.5" r="1.5" fill="rgb(99,99,99)"/><circle cx="173.6" cy="130.1" r="2.4" fill="rgb(109,109,109)"/><circle cx="281.3" cy="225.8" r="2.3" fill="rgb(86,86,86)"/><circle cx="349.4" cy="237.1" r="2.3" fill="rgb(99,99,99)"/><circle cx="309.9" cy="237.8" r="1.3" fill="rgb(97,97,97)"/><circle cx="273.5" cy="226.4" r="2.4" fill="rgb(94,94,94)"/><circle cx="205.3" cy="180.6" r="1.5" fill="rgb(102,102,102)"/><circle cx="258.0" cy="228.4" r="2.4" fill="rgb(61,61,61)"/><circle cx="361.2" cy="267.4" r="2.3" fill="rgb(111,111,111)"/><circle cx="278.3" cy="246.2" r="1.6" fill="rgb(125,125,125)"/><circle cx="194.5" cy="167.6" r="1.7" fill="rgb(103,103,103)"/><circle cx="168.9" cy="133.6" r="1.4" fill="rgb(109,109,109)"/><circle cx="336.5" cy="261.8" r="2.4" fill="rgb(64,64,64)"/><circle cx="225.6" cy="185.2" r="1.3" fill="rgb(104,104,104)"/><circle cx="211.9" cy="194.9" r="1.7" fill="rgb(130,130,130)"/><circle cx="320.1" cy="251.5" r="1.2" fill="rgb(89,89,89)"/><circle cx="182.3" cy="134.3" r="2.6" fill="rgb(78,78,78)"/><circle cx="177.5" cy="131.5" r="2.5" fill="rgb(95,95,95)"/><circle cx="258.9" cy="205.0" r="1.9" fill="rgb(99,99,99)"/><circle cx="255.8" cy="182.3" r="1.9" fill="rgb(76,76,76)"/><circle cx="257.6" cy="195.3" r="2.1" fill="rgb(110,110,110)"/><circle cx="248.4" cy="207.1" r="2.0" fill="rgb(137,137,137)"/><circle cx="165.3" cy="174.0" r="2.6" fill="rgb(61,61,61)"/><circle cx="273.4" cy="214.6" r="1.9" fill="rgb(71,71,71)"/><circle cx="220.8" cy="166.1" r="1.5" fill="rgb(117,117,117)"/><circle cx="296.1" cy="236.0" r="1.8" fill="rgb(89,89,89)"/><circle cx="281.7" cy="236.6" r="2.1" fill="rgb(85,85,85)"/><circle cx="322.1" cy="267.6" r="2.3" fill="rgb(70,70,70)"/><circle cx="344.4" cy="259.4" r="1.2" fill="rgb(125,125,125)"/><circle cx="244.9" cy="211.7" r="1.9" fill="rgb(97,97,97)"/><circle cx="181.1" cy="157.9" r="2.6" fill="rgb(94,94,94)"/><circle cx="257.5" cy="244.8" r="1.7" fill="rgb(118,118,118)"/><circle cx="319.3" cy="269.5" r="1.6" fill="rgb(69,69,69)"/><circle cx="150.8" cy="155.7" r="1.5" fill="rgb(99,99,99)"/><circle cx="320.4" cy="256.5" r="1.9" fill="rgb(98,98,98)"/><circle cx="370.2" cy="258.2" r="2.0" fill="rgb(97,97,97)"/><circle cx="147.1" cy="156.1" r="1.6" fill="rgb(112,112,112)"/><circle cx="339.0" cy="256.1" r="1.4" fill="rgb(87,87,87)"/><circle cx="324.5" cy="246.0" r="1.4" fill="rgb(102,102,102)"/><circle cx="178.7" cy="150.6" r="1.3" fill="rgb(68,68,68)"/><circle cx="198.8" cy="170.3" r="2.3" fill="rgb(97,97,97)"/><circle cx="218.6" cy="207.1" r="1.3" fill="rgb(126,126,126)"/><circle cx="201.7" cy="150.7" r="2.0" fill="rgb(137,137,137)"/><circle cx="208.6" cy="164.5" r="2.0" fill="rgb(124,124,124)"/><circle cx="212.9" cy="184.7" r="1.8" fill="rgb(85,85,85)"/><circle cx="279.8" cy="239.5" r="2.1" fill="rgb(67,67,67)"/><circle cx="320.4" cy="252.3" r="1.4" fill="rgb(105,105,105)"/><circle cx="263.9" cy="204.3" r="1.8" fill="rgb(140,140,140)"/><circle cx="250.5" cy="180.3" r="2.6" fill="rgb(144,144,144)"/><circle cx="225.6" cy="163.5" r="1.5" fill="rgb(149,149,149)"/><circle cx="302.4" cy="220.6" r="1.3" fill="rgb(137,137,137)"/><circle cx="201.7" cy="187.4" r="1.5" fill="rgb(101,101,101)"/><circle cx="327.4" cy="255.8" r="1.3" fill="rgb(102,102,102)"/><circle cx="294.6" cy="233.6" r="1.5" fill="rgb(146,146,146)"/><circle cx="231.3" cy="208.4" r="2.2" fill="rgb(126,126,126)"/><circle cx="281.5" cy="248.1" r="1.9" fill="rgb(76,76,76)"/><circle cx="388.1" cy="260.1" r="2.6" fill="rgb(101,101,101)"/><circle cx="340.5" cy="278.5" r="2.2" fill="rgb(144,144,144)"/><circle cx="345.9" cy="247.4" r="2.3" fill="rgb(102,102,102)"/><circle cx="211.4" cy="208.5" r="2.4" fill="rgb(136,136,136)"/><circle cx="304.3" cy="247.3" r="2.0" fill="rgb(79,79,79)"/><circle cx="239.4" cy="198.8" r="2.2" fill="rgb(80,80,80)"/><circle cx="328.2" cy="280.2" r="1.6" fill="rgb(84,84,84)"/><circle cx="259.0" cy="203.9" r="1.7" fill="rgb(61,61,61)"/><circle cx="344.0" cy="257.8" r="2.5" fill="rgb(80,80,80)"/><circle cx="223.6" cy="181.5" r="2.2" fill="rgb(112,112,112)"/><circle cx="266.7" cy="229.1" r="2.6" fill="rgb(93,93,93)"/><circle cx="379.1" cy="264.3" r="2.4" fill="rgb(61,61,61)"/><circle cx="317.8" cy="223.8" r="2.0" fill="rgb(133,133,133)"/><circle cx="188.2" cy="162.0" r="1.8" fill="rgb(77,77,77)"/><circle cx="287.4" cy="232.9" r="2.1" fill="rgb(113,113,113)"/><circle cx="365.1" cy="246.2" r="1.7" fill="rgb(143,143,143)"/><circle cx="249.4" cy="207.0" r="2.2" fill="rgb(143,143,143)"/><circle cx="278.2" cy="208.9" r="2.3" fill="rgb(100,100,100)"/><circle cx="258.6" cy="199.7" r="1.4" fill="rgb(115,115,115)"/><circle cx="332.5" cy="274.0" r="2.4" fill="rgb(71,71,71)"/><circle cx="182.7" cy="162.3" r="2.5" fill="rgb(149,149,149)"/><circle cx="259.8" cy="190.6" r="1.4" fill="rgb(147,147,147)"/><circle cx="216.2" cy="175.0" r="1.2" fill="rgb(103,103,103)"/><circle cx="261.5" cy="201.0" r="2.4" fill="rgb(130,130,130)"/><circle cx="284.2" cy="240.8" r="1.9" fill="rgb(95,95,95)"/><circle cx="283.1" cy="236.5" r="2.0" fill="rgb(149,149,149)"/><circle cx="206.7" cy="174.3" r="1.3" fill="rgb(64,64,64)"/><circle cx="261.1" cy="188.0" r="2.6" fill="rgb(135,135,135)"/><circle cx="281.3" cy="227.7" r="1.7" fill="rgb(83,83,83)"/><circle cx="306.4" cy="240.6" r="1.7" fill="rgb(104,104,104)"/><circle cx="264.2" cy="217.6" r="2.3" fill="rgb(113,113,113)"/><circle cx="168.6" cy="142.0" r="2.6" fill="rgb(128,128,128)"/><circle cx="193.5" cy="133.0" r="1.6" fill="rgb(142,142,142)"/><circle cx="344.6" cy="247.8" r="2.0" fill="rgb(94,94,94)"/><circle cx="226.7" cy="168.1" r="1.7" fill="rgb(108,108,108)"/><circle cx="331.3" cy="250.9" r="2.0" fill="rgb(149,149,149)"/><circle cx="158.3" cy="149.1" r="2.2" fill="rgb(147,147,147)"/><circle cx="271.2" cy="236.7" r="1.9" fill="rgb(123,123,123)"/><circle cx="376.1" cy="266.3" r="2.4" fill="rgb(65,65,65)"/><circle cx="347.9" cy="255.0" r="2.3" fill="rgb(81,81,81)"/><circle cx="244.6" cy="222.5" r="1.9" fill="rgb(114,114,114)"/><circle cx="201.0" cy="174.1" r="2.3" fill="rgb(145,145,145)"/><circle cx="202.4" cy="178.2" r="1.7" fill="rgb(132,132,132)"/><circle cx="180.2" cy="159.3" r="2.5" fill="rgb(61,61,61)"/><circle cx="187.7" cy="184.8" r="1.4" fill="rgb(135,135,135)"/><circle cx="213.9" cy="193.6" r="1.3" fill="rgb(89,89,89)"/><circle cx="207.0" cy="173.8" r="2.2" fill="rgb(112,112,112)"/><circle cx="198.0" cy="143.7" r="1.4" fill="rgb(133,133,133)"/><circle cx="341.9" cy="286.3" r="2.3" fill="rgb(80,80,80)"/><circle cx="187.8" cy="120.8" r="1.3" fill="rgb(128,128,128)"/><circle cx="306.4" cy="229.8" r="2.6" fill="rgb(89,89,89)"/><circle cx="348.7" cy="249.2" r="2.2" fill="rgb(121,121,121)"/><circle cx="331.1" cy="251.8" r="1.6" fill="rgb(108,108,108)"/><circle cx="213.9" cy="139.0" r="1.5" fill="rgb(122,122,122)"/><circle cx="318.7" cy="257.3" r="2.3" fill="rgb(87,87,87)"/><circle cx="183.6" cy="179.3" r="1.9" fill="rgb(133,133,133)"/><circle cx="210.0" cy="173.6" r="2.4" fill="rgb(74,74,74)"/><circle cx="183.8" cy="145.6" r="2.1" fill="rgb(67,67,67)"/><circle cx="201.4" cy="155.1" r="1.8" fill="rgb(100,100,100)"/><circle cx="170.2" cy="153.8" r="2.3" fill="rgb(124,124,124)"/><circle cx="305.4" cy="246.2" r="1.4" fill="rgb(94,94,94)"/><circle cx="220.1" cy="209.4" r="1.5" fill="rgb(89,89,89)"/><circle cx="235.9" cy="170.2" r="1.9" fill="rgb(94,94,94)"/><circle cx="372.3" cy="257.2" r="2.0" fill="rgb(137,137,137)"/><circle cx="217.5" cy="187.6" r="1.9" fill="rgb(129,129,129)"/><circle cx="160.2" cy="182.7" r="1.9" fill="rgb(94,94,94)"/><circle cx="349.9" cy="247.0" r="1.4" fill="rgb(117,117,117)"/><circle cx="334.8" cy="237.0" r="1.6" fill="rgb(106,106,106)"/><circle cx="208.9" cy="191.3" r="2.5" fill="rgb(141,141,141)"/><circle cx="323.3" cy="268.3" r="1.4" fill="rgb(142,142,142)"/><circle cx="304.4" cy="225.8" r="2.6" fill="rgb(62,62,62)"/><circle cx="346.9" cy="244.0" r="2.4" fill="rgb(79,79,79)"/><circle cx="305.2" cy="250.5" r="1.5" fill="rgb(132,132,132)"/><circle cx="369.8" cy="194.5" r="1.5" fill="rgb(76,76,76)"/><circle cx="296.0" cy="102.3" r="2.3" fill="rgb(94,94,94)"/><circle cx="324.6" cy="110.0" r="1.8" fill="rgb(90,90,90)"/><circle cx="337.6" cy="120.4" r="1.6" fill="rgb(79,79,79)"/><circle cx="327.9" cy="64.1" r="1.9" fill="rgb(79,79,79)"/><circle cx="308.8" cy="100.2" r="1.7" fill="rgb(118,118,118)"/><circle cx="328.3" cy="148.3" r="1.4" fill="rgb(74,74,74)"/><circle cx="349.3" cy="176.2" r="2.1" fill="rgb(80,80,80)"/><circle cx="322.2" cy="138.2" r="1.3" fill="rgb(96,96,96)"/><circle cx="310.5" cy="188.3" r="2.2" fill="rgb(71,71,71)"/><circle cx="284.8" cy="45.4" r="1.5" fill="rgb(53,53,53)"/><circle cx="346.9" cy="134.4" r="2.0" fill="rgb(69,69,69)"/><circle cx="324.1" cy="130.7" r="1.4" fill="rgb(107,107,107)"/><circle cx="320.6" cy="110.5" r="2.2" fill="rgb(91,91,91)"/><circle cx="316.4" cy="172.1" r="1.4" fill="rgb(118,118,118)"/><circle cx="312.4" cy="159.9" r="1.3" fill="rgb(73,73,73)"/><circle cx="315.4" cy="79.9" r="1.7" fill="rgb(110,110,110)"/><circle cx="339.1" cy="171.2" r="1.5" fill="rgb(99,99,99)"/><circle cx="316.0" cy="81.3" r="2.1" fill="rgb(90,90,90)"/><circle cx="357.8" cy="187.2" r="2.4" fill="rgb(50,50,50)"/><circle cx="366.8" cy="202.3" r="1.7" fill="rgb(103,103,103)"/><circle cx="325.1" cy="120.8" r="1.9" fill="rgb(102,102,102)"/><circle cx="348.0" cy="135.4" r="1.5" fill="rgb(83,83,83)"/><circle cx="298.9" cy="60.8" r="2.1" fill="rgb(94,94,94)"/><circle cx="320.8" cy="100.6" r="1.4" fill="rgb(87,87,87)"/><circle cx="327.0" cy="141.2" r="1.6" fill="rgb(74,74,74)"/><circle cx="292.8" cy="75.8" r="1.9" fill="rgb(62,62,62)"/><circle cx="354.4" cy="189.8" r="1.4" fill="rgb(56,56,56)"/><circle cx="304.4" cy="84.5" r="2.3" fill="rgb(115,115,115)"/><circle cx="317.4" cy="69.7" r="1.9" fill="rgb(67,67,67)"/><circle cx="357.9" cy="210.8" r="1.6" fill="rgb(72,72,72)"/><circle cx="285.1" cy="88.6" r="1.2" fill="rgb(108,108,108)"/><circle cx="348.5" cy="98.6" r="1.5" fill="rgb(64,64,64)"/><circle cx="302.4" cy="66.4" r="1.4" fill="rgb(67,67,67)"/><circle cx="316.4" cy="150.7" r="1.8" fill="rgb(104,104,104)"/><circle cx="319.1" cy="198.9" r="2.1" fill="rgb(89,89,89)"/><circle cx="320.6" cy="134.0" r="2.3" fill="rgb(92,92,92)"/><circle cx="332.2" cy="44.7" r="1.2" fill="rgb(99,99,99)"/><circle cx="288.8" cy="77.2" r="1.6" fill="rgb(84,84,84)"/><circle cx="338.4" cy="181.2" r="1.7" fill="rgb(118,118,118)"/><circle cx="310.6" cy="70.0" r="1.5" fill="rgb(58,58,58)"/><circle cx="300.6" cy="65.4" r="2.2" fill="rgb(56,56,56)"/><circle cx="333.8" cy="149.5" r="1.5" fill="rgb(103,103,103)"/><circle cx="335.6" cy="121.1" r="1.7" fill="rgb(117,117,117)"/><circle cx="348.5" cy="96.4" r="1.4" fill="rgb(88,88,88)"/><circle cx="375.1" cy="228.3" r="2.1" fill="rgb(102,102,102)"/><circle cx="356.9" cy="171.7" r="1.3" fill="rgb(104,104,104)"/><circle cx="327.6" cy="192.1" r="1.7" fill="rgb(102,102,102)"/><circle cx="315.3" cy="42.2" r="2.2" fill="rgb(83,83,83)"/><circle cx="338.4" cy="204.6" r="1.2" fill="rgb(84,84,84)"/><circle cx="318.2" cy="38.0" r="1.7" fill="rgb(118,118,118)"/><circle cx="361.0" cy="209.3" r="2.0" fill="rgb(100,100,100)"/><circle cx="360.2" cy="155.0" r="1.7" fill="rgb(91,91,91)"/><circle cx="343.6" cy="191.7" r="2.3" fill="rgb(68,68,68)"/><circle cx="332.2" cy="81.8" r="2.1" fill="rgb(64,64,64)"/><circle cx="325.6" cy="54.1" r="1.9" fill="rgb(59,59,59)"/><circle cx="323.1" cy="115.3" r="1.7" fill="rgb(53,53,53)"/><circle cx="387.3" cy="240.8" r="2.2" fill="rgb(101,101,101)"/><circle cx="297.1" cy="32.3" r="1.8" fill="rgb(60,60,60)"/><circle cx="327.8" cy="127.2" r="2.3" fill="rgb(79,79,79)"/></g></svg></div>
<div class="a" style="left:641px;top:448px;width:376px;height:10px;box-sizing:border-box;border-top:1px solid #fff;border-bottom:1px solid #000;background:#c0c0c0;"></div>
<div class="a" style="left:641px;top:448px;width:1px;height:10px;background:#000;"></div>
<div class="a" style="left:649px;top:449px;width:1px;height:8px;background:#000;"></div>
<div class="a" style="left:650px;top:449px;width:1px;height:8px;background:#fff;"></div>
<div class="a" style="left:1007px;top:449px;width:1px;height:8px;background:#000;"></div>
<div class="a" style="left:1008px;top:449px;width:1px;height:8px;background:#fff;"></div>
<div class="a" style="left:1023px;top:71px;width:10px;height:377px;box-sizing:border-box;border-left:1px solid #000;border-top:1px solid #000;background:#fff;"></div>
<div class="a" style="left:1025px;top:73px;width:8px;height:7px;background:#c0c0c0;"></div>
<div class="a" style="left:1025px;top:80px;width:8px;height:1px;background:#000;"></div>
<div class="a" style="left:1025px;top:81px;width:8px;height:1px;background:#fff;"></div>
<div class="a" style="left:1025px;top:82px;width:8px;height:357px;background:#c0c0c0;"></div>
<div class="a" style="left:1025px;top:439px;width:8px;height:1px;background:#000;"></div>
<div class="a" style="left:1025px;top:440px;width:8px;height:1px;background:#fff;"></div>
<div class="a" style="left:1025px;top:441px;width:8px;height:6px;background:#c0c0c0;"></div>
<div class="a" style="left:1025px;top:447px;width:8px;height:1px;background:#000;"></div>
<div class="a" style="left:1033px;top:57px;width:376px;height:13px;box-sizing:border-box;border:1px solid #000;border-bottom:none;background:linear-gradient(to right,#b4b5cb 0%,#a8a7b9 50%,#8c8b9c 100%);"></div>
<div class="t" style="top:56.69px;font-size:11px;line-height:14px;color:#000;letter-spacing:0.25px;left:1037px;">C:&nbsp; Camera 3 A568</div>
<div class="t" style="top:56.69px;font-size:11px;line-height:14px;color:#000;letter-spacing:0.25px;right:385px;">Temp: 4 C</div>
<div class="a" style="left:1033px;top:70px;width:376px;height:378px;background:#000;overflow:hidden"><svg width="376" height="378" style="position:absolute;left:0;top:0"><defs><filter id="bl1" x="-10%" y="-10%" width="120%" height="120%" color-interpolation-filters="sRGB"><feGaussianBlur stdDeviation="1.1"/></filter><filter id="bw1" x="-10%" y="-10%" width="120%" height="120%" color-interpolation-filters="sRGB"><feGaussianBlur stdDeviation="1.8"/></filter></defs><g filter="url(#bw1)" fill="none" stroke-linecap="round" stroke-linejoin="round"><rect x="-10" y="-10" width="400" height="400" fill="#080808" stroke="none"/><circle cx="271.3" cy="20.9" r="2.7" fill="rgb(33,33,33)" stroke="none"/><circle cx="316.6" cy="326.8" r="2.0" fill="rgb(26,26,26)" stroke="none"/><circle cx="342.2" cy="180.2" r="2.5" fill="rgb(35,35,35)" stroke="none"/><circle cx="70.0" cy="314.4" r="2.3" fill="rgb(24,24,24)" stroke="none"/><circle cx="139.6" cy="224.9" r="3.0" fill="rgb(16,16,16)" stroke="none"/><circle cx="167.6" cy="194.9" r="3.4" fill="rgb(18,18,18)" stroke="none"/><circle cx="307.0" cy="327.1" r="3.4" fill="rgb(23,23,23)" stroke="none"/><circle cx="143.4" cy="284.0" r="3.7" fill="rgb(17,17,17)" stroke="none"/><circle cx="358.7" cy="187.0" r="3.1" fill="rgb(27,27,27)" stroke="none"/><circle cx="202.0" cy="7.8" r="2.4" fill="rgb(37,37,37)" stroke="none"/><circle cx="68.6" cy="38.8" r="3.6" fill="rgb(21,21,21)" stroke="none"/><circle cx="11.3" cy="36.5" r="2.4" fill="rgb(31,31,31)" stroke="none"/><circle cx="6.7" cy="226.6" r="3.0" fill="rgb(28,28,28)" stroke="none"/><circle cx="264.2" cy="38.9" r="3.4" fill="rgb(35,35,35)" stroke="none"/><circle cx="17.0" cy="46.5" r="3.0" fill="rgb(26,26,26)" stroke="none"/><circle cx="105.1" cy="46.1" r="2.3" fill="rgb(24,24,24)" stroke="none"/><circle cx="222.5" cy="325.5" r="3.1" fill="rgb(19,19,19)" stroke="none"/><circle cx="280.7" cy="62.1" r="3.9" fill="rgb(34,34,34)" stroke="none"/><circle cx="146.2" cy="158.9" r="3.1" fill="rgb(34,34,34)" stroke="none"/><circle cx="148.8" cy="355.8" r="2.7" fill="rgb(33,33,33)" stroke="none"/><circle cx="90.4" cy="126.7" r="4.0" fill="rgb(25,25,25)" stroke="none"/><circle cx="302.4" cy="345.0" r="3.7" fill="rgb(33,33,33)" stroke="none"/><circle cx="20.1" cy="195.6" r="3.9" fill="rgb(37,37,37)" stroke="none"/><circle cx="93.7" cy="159.6" r="2.7" fill="rgb(29,29,29)" stroke="none"/><circle cx="199.6" cy="26.2" r="3.0" fill="rgb(25,25,25)" stroke="none"/><circle cx="7.8" cy="52.7" r="3.6" fill="rgb(37,37,37)" stroke="none"/><circle cx="352.3" cy="239.4" r="3.8" fill="rgb(33,33,33)" stroke="none"/><circle cx="332.6" cy="13.0" r="2.5" fill="rgb(30,30,30)" stroke="none"/><circle cx="255.1" cy="103.4" r="3.8" fill="rgb(27,27,27)" stroke="none"/><circle cx="233.6" cy="94.7" r="2.9" fill="rgb(27,27,27)" stroke="none"/><circle cx="357.5" cy="108.7" r="3.3" fill="rgb(22,22,22)" stroke="none"/><circle cx="45.3" cy="224.6" r="3.0" fill="rgb(37,37,37)" stroke="none"/><circle cx="100.9" cy="176.3" r="2.3" fill="rgb(27,27,27)" stroke="none"/><circle cx="46.6" cy="49.7" r="2.8" fill="rgb(22,22,22)" stroke="none"/><circle cx="108.4" cy="92.0" r="3.1" fill="rgb(17,17,17)" stroke="none"/><circle cx="315.7" cy="230.6" r="3.3" fill="rgb(28,28,28)" stroke="none"/><circle cx="75.6" cy="268.5" r="3.1" fill="rgb(26,26,26)" stroke="none"/><circle cx="230.4" cy="177.3" r="2.5" fill="rgb(22,22,22)" stroke="none"/><circle cx="83.3" cy="193.7" r="3.2" fill="rgb(24,24,24)" stroke="none"/><circle cx="4.5" cy="133.3" r="2.5" fill="rgb(34,34,34)" stroke="none"/><circle cx="209.3" cy="185.8" r="4.0" fill="rgb(22,22,22)" stroke="none"/><circle cx="111.1" cy="291.9" r="2.1" fill="rgb(19,19,19)" stroke="none"/><circle cx="327.6" cy="166.3" r="2.8" fill="rgb(17,17,17)" stroke="none"/><circle cx="165.4" cy="278.0" r="2.5" fill="rgb(18,18,18)" stroke="none"/><circle cx="360.7" cy="279.2" r="2.7" fill="rgb(19,19,19)" stroke="none"/><circle cx="132.5" cy="255.3" r="3.7" fill="rgb(29,29,29)" stroke="none"/><circle cx="308.8" cy="195.7" r="3.5" fill="rgb(32,32,32)" stroke="none"/><circle cx="285.6" cy="179.6" r="3.4" fill="rgb(33,33,33)" stroke="none"/><circle cx="343.9" cy="48.1" r="2.0" fill="rgb(35,35,35)" stroke="none"/><circle cx="287.9" cy="221.4" r="3.9" fill="rgb(26,26,26)" stroke="none"/><circle cx="215.1" cy="158.0" r="3.7" fill="rgb(33,33,33)" stroke="none"/><circle cx="228.4" cy="143.5" r="2.9" fill="rgb(25,25,25)" stroke="none"/><circle cx="271.9" cy="110.7" r="3.1" fill="rgb(24,24,24)" stroke="none"/><circle cx="144.6" cy="121.7" r="3.7" fill="rgb(33,33,33)" stroke="none"/><circle cx="187.8" cy="167.8" r="2.6" fill="rgb(20,20,20)" stroke="none"/><circle cx="54.5" cy="217.5" r="2.2" fill="rgb(28,28,28)" stroke="none"/><circle cx="346.0" cy="122.4" r="3.7" fill="rgb(34,34,34)" stroke="none"/><circle cx="360.5" cy="77.2" r="3.8" fill="rgb(25,25,25)" stroke="none"/><circle cx="4.0" cy="17.9" r="3.0" fill="rgb(28,28,28)" stroke="none"/><circle cx="346.0" cy="292.4" r="4.0" fill="rgb(27,27,27)" stroke="none"/><circle cx="194.6" cy="195.5" r="2.8" fill="rgb(31,31,31)" stroke="none"/><circle cx="134.5" cy="224.8" r="3.9" fill="rgb(23,23,23)" stroke="none"/><circle cx="254.4" cy="198.5" r="2.7" fill="rgb(18,18,18)" stroke="none"/><circle cx="150.7" cy="212.2" r="3.8" fill="rgb(28,28,28)" stroke="none"/><circle cx="362.6" cy="184.0" r="3.2" fill="rgb(25,25,25)" stroke="none"/><circle cx="374.5" cy="129.8" r="3.6" fill="rgb(27,27,27)" stroke="none"/><circle cx="64.2" cy="120.2" r="3.7" fill="rgb(37,37,37)" stroke="none"/><circle cx="192.7" cy="41.8" r="3.4" fill="rgb(35,35,35)" stroke="none"/><circle cx="308.5" cy="374.3" r="2.8" fill="rgb(35,35,35)" stroke="none"/><circle cx="58.8" cy="109.6" r="3.0" fill="rgb(27,27,27)" stroke="none"/><circle cx="70.7" cy="69.0" r="3.2" fill="rgb(29,29,29)" stroke="none"/><circle cx="132.8" cy="375.6" r="2.1" fill="rgb(30,30,30)" stroke="none"/><circle cx="154.7" cy="297.7" r="3.4" fill="rgb(22,22,22)" stroke="none"/><circle cx="1.5" cy="115.1" r="3.2" fill="rgb(34,34,34)" stroke="none"/><circle cx="251.2" cy="74.3" r="3.1" fill="rgb(26,26,26)" stroke="none"/><circle cx="100.0" cy="244.5" r="4.0" fill="rgb(27,27,27)" stroke="none"/><circle cx="216.0" cy="155.4" r="2.3" fill="rgb(18,18,18)" stroke="none"/><circle cx="285.6" cy="40.3" r="2.3" fill="rgb(18,18,18)" stroke="none"/><circle cx="196.5" cy="311.1" r="3.6" fill="rgb(29,29,29)" stroke="none"/><circle cx="23.4" cy="4.7" r="2.6" fill="rgb(32,32,32)" stroke="none"/><circle cx="269.0" cy="133.8" r="2.5" fill="rgb(19,19,19)" stroke="none"/><circle cx="37.4" cy="341.7" r="2.7" fill="rgb(28,28,28)" stroke="none"/><circle cx="169.1" cy="145.8" r="3.8" fill="rgb(17,17,17)" stroke="none"/><circle cx="219.1" cy="362.7" r="3.2" fill="rgb(25,25,25)" stroke="none"/><circle cx="93.7" cy="16.6" r="3.7" fill="rgb(36,36,36)" stroke="none"/><circle cx="118.4" cy="339.8" r="2.6" fill="rgb(33,33,33)" stroke="none"/><circle cx="226.6" cy="362.9" r="3.9" fill="rgb(26,26,26)" stroke="none"/><circle cx="91.3" cy="147.3" r="2.4" fill="rgb(31,31,31)" stroke="none"/><circle cx="116.2" cy="330.9" r="3.6" fill="rgb(26,26,26)" stroke="none"/><circle cx="91.5" cy="65.6" r="2.4" fill="rgb(23,23,23)" stroke="none"/><circle cx="365.3" cy="109.9" r="2.2" fill="rgb(28,28,28)" stroke="none"/><circle cx="200.7" cy="145.8" r="2.1" fill="rgb(24,24,24)" stroke="none"/><circle cx="46.4" cy="312.2" r="2.5" fill="rgb(23,23,23)" stroke="none"/><circle cx="71.9" cy="107.2" r="2.1" fill="rgb(21,21,21)" stroke="none"/><circle cx="249.8" cy="129.1" r="3.4" fill="rgb(19,19,19)" stroke="none"/><circle cx="34.8" cy="101.9" r="2.3" fill="rgb(34,34,34)" stroke="none"/><circle cx="166.7" cy="316.1" r="2.3" fill="rgb(33,33,33)" stroke="none"/><circle cx="132.7" cy="273.1" r="3.9" fill="rgb(24,24,24)" stroke="none"/><circle cx="78.2" cy="359.5" r="2.5" fill="rgb(27,27,27)" stroke="none"/><circle cx="170.2" cy="49.5" r="2.5" fill="rgb(31,31,31)" stroke="none"/><circle cx="338.3" cy="222.1" r="2.5" fill="rgb(24,24,24)" stroke="none"/><circle cx="228.7" cy="80.3" r="2.2" fill="rgb(35,35,35)" stroke="none"/><circle cx="192.9" cy="205.1" r="3.5" fill="rgb(21,21,21)" stroke="none"/><circle cx="144.7" cy="248.5" r="2.6" fill="rgb(28,28,28)" stroke="none"/><circle cx="146.6" cy="32.5" r="3.7" fill="rgb(19,19,19)" stroke="none"/><circle cx="120.7" cy="250.5" r="3.1" fill="rgb(18,18,18)" stroke="none"/><circle cx="135.9" cy="189.1" r="2.1" fill="rgb(22,22,22)" stroke="none"/><circle cx="117.0" cy="85.6" r="3.4" fill="rgb(18,18,18)" stroke="none"/><circle cx="106.2" cy="152.5" r="3.5" fill="rgb(35,35,35)" stroke="none"/><circle cx="331.9" cy="325.6" r="2.6" fill="rgb(18,18,18)" stroke="none"/><circle cx="11.1" cy="256.9" r="2.7" fill="rgb(30,30,30)" stroke="none"/><circle cx="155.1" cy="249.1" r="2.5" fill="rgb(31,31,31)" stroke="none"/><circle cx="318.4" cy="133.1" r="2.4" fill="rgb(29,29,29)" stroke="none"/><circle cx="43.3" cy="345.0" r="3.4" fill="rgb(32,32,32)" stroke="none"/><circle cx="15.2" cy="15.1" r="2.4" fill="rgb(19,19,19)" stroke="none"/><circle cx="114.0" cy="143.9" r="2.6" fill="rgb(16,16,16)" stroke="none"/><circle cx="240.0" cy="67.9" r="3.1" fill="rgb(34,34,34)" stroke="none"/><circle cx="269.5" cy="96.3" r="3.4" fill="rgb(25,25,25)" stroke="none"/><circle cx="131.2" cy="0.4" r="3.6" fill="rgb(34,34,34)" stroke="none"/><circle cx="107.7" cy="16.2" r="3.2" fill="rgb(34,34,34)" stroke="none"/><circle cx="17.8" cy="92.4" r="3.6" fill="rgb(18,18,18)" stroke="none"/><circle cx="79.0" cy="345.7" r="2.2" fill="rgb(32,32,32)" stroke="none"/><circle cx="261.2" cy="148.8" r="3.7" fill="rgb(32,32,32)" stroke="none"/><circle cx="105.7" cy="34.0" r="2.8" fill="rgb(36,36,36)" stroke="none"/><circle cx="349.8" cy="261.4" r="3.7" fill="rgb(32,32,32)" stroke="none"/><circle cx="236.2" cy="171.2" r="3.4" fill="rgb(17,17,17)" stroke="none"/><circle cx="161.1" cy="193.5" r="2.3" fill="rgb(36,36,36)" stroke="none"/><circle cx="286.5" cy="16.5" r="3.6" fill="rgb(31,31,31)" stroke="none"/><circle cx="98.2" cy="206.5" r="3.3" fill="rgb(37,37,37)" stroke="none"/><circle cx="204.5" cy="94.4" r="2.7" fill="rgb(17,17,17)" stroke="none"/><circle cx="154.8" cy="76.1" r="2.3" fill="rgb(22,22,22)" stroke="none"/><circle cx="265.8" cy="253.4" r="2.5" fill="rgb(21,21,21)" stroke="none"/><circle cx="193.8" cy="168.2" r="2.7" fill="rgb(36,36,36)" stroke="none"/><circle cx="112.6" cy="334.4" r="3.1" fill="rgb(19,19,19)" stroke="none"/><circle cx="125.4" cy="308.2" r="3.5" fill="rgb(28,28,28)" stroke="none"/><circle cx="63.6" cy="251.9" r="2.9" fill="rgb(29,29,29)" stroke="none"/><circle cx="288.1" cy="314.2" r="2.6" fill="rgb(18,18,18)" stroke="none"/><circle cx="135.5" cy="78.0" r="2.6" fill="rgb(17,17,17)" stroke="none"/><circle cx="74.1" cy="265.2" r="2.2" fill="rgb(25,25,25)" stroke="none"/><circle cx="122.0" cy="177.2" r="2.3" fill="rgb(23,23,23)" stroke="none"/><circle cx="27.0" cy="4.1" r="3.5" fill="rgb(37,37,37)" stroke="none"/><circle cx="31.6" cy="271.1" r="3.1" fill="rgb(37,37,37)" stroke="none"/><circle cx="40.9" cy="184.8" r="2.4" fill="rgb(25,25,25)" stroke="none"/><circle cx="204.2" cy="3.1" r="3.3" fill="rgb(36,36,36)" stroke="none"/><circle cx="236.0" cy="353.5" r="2.5" fill="rgb(30,30,30)" stroke="none"/><circle cx="92.5" cy="52.4" r="3.5" fill="rgb(16,16,16)" stroke="none"/><circle cx="315.7" cy="112.0" r="3.3" fill="rgb(20,20,20)" stroke="none"/><circle cx="318.0" cy="350.3" r="3.6" fill="rgb(19,19,19)" stroke="none"/><circle cx="312.2" cy="280.6" r="2.4" fill="rgb(23,23,23)" stroke="none"/><circle cx="310.3" cy="121.0" r="3.1" fill="rgb(24,24,24)" stroke="none"/><circle cx="138.8" cy="314.3" r="2.1" fill="rgb(21,21,21)" stroke="none"/><circle cx="213.1" cy="237.5" r="3.4" fill="rgb(34,34,34)" stroke="none"/><circle cx="340.4" cy="357.2" r="3.0" fill="rgb(26,26,26)" stroke="none"/><circle cx="59.2" cy="113.2" r="2.2" fill="rgb(28,28,28)" stroke="none"/><circle cx="258.7" cy="61.9" r="3.9" fill="rgb(25,25,25)" stroke="none"/><circle cx="33.7" cy="15.1" r="2.4" fill="rgb(25,25,25)" stroke="none"/><circle cx="271.8" cy="1.1" r="3.7" fill="rgb(34,34,34)" stroke="none"/><circle cx="295.9" cy="160.8" r="3.3" fill="rgb(22,22,22)" stroke="none"/><circle cx="193.5" cy="159.2" r="2.9" fill="rgb(23,23,23)" stroke="none"/><circle cx="250.5" cy="312.3" r="2.3" fill="rgb(35,35,35)" stroke="none"/><circle cx="111.2" cy="167.5" r="2.7" fill="rgb(28,28,28)" stroke="none"/><circle cx="73.5" cy="32.1" r="2.9" fill="rgb(23,23,23)" stroke="none"/><circle cx="365.2" cy="343.5" r="3.9" fill="rgb(35,35,35)" stroke="none"/><circle cx="361.6" cy="234.3" r="2.1" fill="rgb(33,33,33)" stroke="none"/><circle cx="254.3" cy="230.3" r="3.1" fill="rgb(22,22,22)" stroke="none"/><circle cx="358.3" cy="181.7" r="2.6" fill="rgb(30,30,30)" stroke="none"/><circle cx="129.1" cy="334.6" r="2.4" fill="rgb(16,16,16)" stroke="none"/><circle cx="255.2" cy="169.1" r="3.3" fill="rgb(17,17,17)" stroke="none"/><circle cx="139.9" cy="219.5" r="3.1" fill="rgb(25,25,25)" stroke="none"/><circle cx="212.4" cy="149.8" r="2.4" fill="rgb(18,18,18)" stroke="none"/><circle cx="334.6" cy="207.2" r="3.7" fill="rgb(18,18,18)" stroke="none"/><circle cx="95.3" cy="35.9" r="2.5" fill="rgb(27,27,27)" stroke="none"/><circle cx="184.0" cy="209.4" r="3.1" fill="rgb(20,20,20)" stroke="none"/><circle cx="42.5" cy="194.0" r="2.2" fill="rgb(28,28,28)" stroke="none"/><circle cx="153.4" cy="27.8" r="3.7" fill="rgb(25,25,25)" stroke="none"/><circle cx="207.0" cy="270.1" r="2.2" fill="rgb(32,32,32)" stroke="none"/><circle cx="372.5" cy="272.8" r="3.7" fill="rgb(18,18,18)" stroke="none"/><circle cx="147.4" cy="64.7" r="3.1" fill="rgb(37,37,37)" stroke="none"/><circle cx="291.4" cy="51.7" r="2.1" fill="rgb(33,33,33)" stroke="none"/><circle cx="89.1" cy="140.7" r="3.2" fill="rgb(16,16,16)" stroke="none"/><circle cx="80.1" cy="113.4" r="2.9" fill="rgb(31,31,31)" stroke="none"/><circle cx="334.1" cy="234.8" r="3.1" fill="rgb(35,35,35)" stroke="none"/><circle cx="345.0" cy="329.2" r="3.5" fill="rgb(19,19,19)" stroke="none"/><circle cx="128.4" cy="288.6" r="3.7" fill="rgb(30,30,30)" stroke="none"/><circle cx="46.1" cy="141.0" r="3.9" fill="rgb(32,32,32)" stroke="none"/><circle cx="271.4" cy="16.4" r="2.2" fill="rgb(29,29,29)" stroke="none"/><circle cx="206.4" cy="303.5" r="3.9" fill="rgb(18,18,18)" stroke="none"/><circle cx="253.9" cy="96.2" r="2.9" fill="rgb(20,20,20)" stroke="none"/><circle cx="315.1" cy="219.8" r="2.0" fill="rgb(18,18,18)" stroke="none"/><circle cx="41.5" cy="302.7" r="3.1" fill="rgb(20,20,20)" stroke="none"/><circle cx="109.1" cy="259.7" r="2.3" fill="rgb(24,24,24)" stroke="none"/><circle cx="329.2" cy="203.5" r="3.6" fill="rgb(31,31,31)" stroke="none"/><circle cx="356.7" cy="5.2" r="2.3" fill="rgb(23,23,23)" stroke="none"/><circle cx="188.7" cy="330.0" r="2.1" fill="rgb(33,33,33)" stroke="none"/><circle cx="68.5" cy="309.3" r="2.8" fill="rgb(30,30,30)" stroke="none"/><circle cx="178.9" cy="59.8" r="2.8" fill="rgb(34,34,34)" stroke="none"/><circle cx="328.3" cy="230.9" r="2.7" fill="rgb(17,17,17)" stroke="none"/><circle cx="81.3" cy="337.9" r="2.1" fill="rgb(28,28,28)" stroke="none"/><circle cx="63.8" cy="136.5" r="3.2" fill="rgb(26,26,26)" stroke="none"/><circle cx="145.8" cy="133.7" r="3.2" fill="rgb(16,16,16)" stroke="none"/><circle cx="125.5" cy="7.8" r="4.0" fill="rgb(26,26,26)" stroke="none"/><circle cx="17.1" cy="55.1" r="2.5" fill="rgb(30,30,30)" stroke="none"/><circle cx="102.8" cy="189.0" r="3.1" fill="rgb(21,21,21)" stroke="none"/><circle cx="198.6" cy="361.7" r="2.1" fill="rgb(37,37,37)" stroke="none"/><circle cx="210.8" cy="291.4" r="3.5" fill="rgb(35,35,35)" stroke="none"/><circle cx="238.0" cy="239.9" r="2.6" fill="rgb(23,23,23)" stroke="none"/><circle cx="299.0" cy="329.9" r="3.4" fill="rgb(36,36,36)" stroke="none"/><circle cx="114.3" cy="288.5" r="3.0" fill="rgb(32,32,32)" stroke="none"/><circle cx="238.8" cy="132.5" r="2.8" fill="rgb(28,28,28)" stroke="none"/><circle cx="22.7" cy="127.5" r="4.0" fill="rgb(23,23,23)" stroke="none"/><circle cx="181.0" cy="138.8" r="2.5" fill="rgb(21,21,21)" stroke="none"/><circle cx="131.3" cy="51.3" r="3.7" fill="rgb(16,16,16)" stroke="none"/><circle cx="170.4" cy="168.4" r="2.6" fill="rgb(28,28,28)" stroke="none"/><circle cx="63.5" cy="25.1" r="2.6" fill="rgb(22,22,22)" stroke="none"/><circle cx="273.2" cy="208.4" r="2.7" fill="rgb(36,36,36)" stroke="none"/><circle cx="346.4" cy="220.5" r="2.4" fill="rgb(17,17,17)" stroke="none"/><circle cx="218.3" cy="373.3" r="3.5" fill="rgb(23,23,23)" stroke="none"/><circle cx="161.0" cy="328.2" r="3.0" fill="rgb(17,17,17)" stroke="none"/><circle cx="338.1" cy="104.3" r="2.0" fill="rgb(21,21,21)" stroke="none"/><circle cx="61.9" cy="101.3" r="2.4" fill="rgb(31,31,31)" stroke="none"/><circle cx="150.2" cy="75.7" r="3.7" fill="rgb(29,29,29)" stroke="none"/><circle cx="243.7" cy="74.4" r="3.9" fill="rgb(32,32,32)" stroke="none"/><circle cx="226.0" cy="30.0" r="3.8" fill="rgb(33,33,33)" stroke="none"/><circle cx="128.3" cy="51.7" r="3.1" fill="rgb(20,20,20)" stroke="none"/><circle cx="329.2" cy="241.9" r="2.4" fill="rgb(36,36,36)" stroke="none"/><circle cx="122.9" cy="283.2" r="2.8" fill="rgb(30,30,30)" stroke="none"/><circle cx="255.3" cy="127.7" r="2.8" fill="rgb(17,17,17)" stroke="none"/><circle cx="17.1" cy="236.7" r="3.0" fill="rgb(23,23,23)" stroke="none"/><circle cx="224.8" cy="97.2" r="2.0" fill="rgb(26,26,26)" stroke="none"/><circle cx="347.9" cy="213.2" r="2.1" fill="rgb(37,37,37)" stroke="none"/><circle cx="230.9" cy="273.7" r="2.2" fill="rgb(23,23,23)" stroke="none"/><circle cx="58.7" cy="53.9" r="2.2" fill="rgb(32,32,32)" stroke="none"/><circle cx="306.1" cy="160.0" r="3.2" fill="rgb(27,27,27)" stroke="none"/><circle cx="208.7" cy="248.5" r="2.7" fill="rgb(29,29,29)" stroke="none"/><circle cx="278.6" cy="97.5" r="3.5" fill="rgb(31,31,31)" stroke="none"/><circle cx="291.8" cy="116.9" r="4.0" fill="rgb(32,32,32)" stroke="none"/><circle cx="170.4" cy="105.2" r="3.9" fill="rgb(27,27,27)" stroke="none"/><circle cx="49.6" cy="3.4" r="3.3" fill="rgb(26,26,26)" stroke="none"/><circle cx="291.1" cy="137.0" r="2.5" fill="rgb(37,37,37)" stroke="none"/><circle cx="284.5" cy="34.0" r="2.3" fill="rgb(16,16,16)" stroke="none"/><circle cx="22.6" cy="189.7" r="2.4" fill="rgb(28,28,28)" stroke="none"/><circle cx="353.3" cy="138.2" r="2.4" fill="rgb(19,19,19)" stroke="none"/><circle cx="277.4" cy="348.3" r="2.1" fill="rgb(19,19,19)" stroke="none"/><circle cx="292.6" cy="91.7" r="3.0" fill="rgb(37,37,37)" stroke="none"/><circle cx="239.2" cy="130.1" r="2.9" fill="rgb(33,33,33)" stroke="none"/><circle cx="121.8" cy="341.5" r="3.5" fill="rgb(18,18,18)" stroke="none"/><circle cx="24.6" cy="244.0" r="3.7" fill="rgb(24,24,24)" stroke="none"/><circle cx="22.6" cy="213.3" r="3.8" fill="rgb(25,25,25)" stroke="none"/><circle cx="355.3" cy="237.1" r="2.5" fill="rgb(20,20,20)" stroke="none"/><circle cx="98.6" cy="164.0" r="2.4" fill="rgb(21,21,21)" stroke="none"/><circle cx="285.4" cy="242.9" r="4.0" fill="rgb(22,22,22)" stroke="none"/><circle cx="81.4" cy="215.3" r="3.7" fill="rgb(19,19,19)" stroke="none"/><circle cx="326.8" cy="101.0" r="3.6" fill="rgb(32,32,32)" stroke="none"/><circle cx="106.2" cy="125.3" r="3.8" fill="rgb(26,26,26)" stroke="none"/><circle cx="60.8" cy="258.1" r="2.9" fill="rgb(29,29,29)" stroke="none"/><circle cx="217.8" cy="333.7" r="3.8" fill="rgb(20,20,20)" stroke="none"/><circle cx="135.5" cy="294.8" r="2.4" fill="rgb(34,34,34)" stroke="none"/><circle cx="324.9" cy="376.0" r="2.0" fill="rgb(22,22,22)" stroke="none"/><circle cx="41.9" cy="368.3" r="3.8" fill="rgb(16,16,16)" stroke="none"/><circle cx="56.7" cy="278.2" r="2.3" fill="rgb(18,18,18)" stroke="none"/><circle cx="231.1" cy="184.5" r="3.8" fill="rgb(42,42,42)"/><circle cx="170.8" cy="144.9" r="2.5" fill="rgb(44,44,44)"/><circle cx="234.5" cy="180.8" r="2.5" fill="rgb(35,35,35)"/><circle cx="349.0" cy="57.8" r="2.6" fill="rgb(46,46,46)"/><circle cx="299.9" cy="57.9" r="2.9" fill="rgb(29,29,29)"/><circle cx="233.3" cy="195.7" r="3.0" fill="rgb(27,27,27)"/><circle cx="267.3" cy="127.8" r="2.7" fill="rgb(30,30,30)"/><circle cx="164.1" cy="112.0" r="2.5" fill="rgb(29,29,29)"/><circle cx="313.8" cy="104.2" r="3.0" fill="rgb(35,35,35)"/><circle cx="253.4" cy="174.8" r="3.4" fill="rgb(41,41,41)"/><circle cx="237.4" cy="164.3" r="4.0" fill="rgb(46,46,46)"/><circle cx="200.2" cy="181.0" r="2.8" fill="rgb(49,49,49)"/><circle cx="281.9" cy="145.4" r="2.3" fill="rgb(49,49,49)"/><circle cx="275.4" cy="1.6" r="2.5" fill="rgb(40,40,40)"/><circle cx="295.1" cy="142.5" r="2.2" fill="rgb(46,46,46)"/><circle cx="195.6" cy="161.5" r="3.4" fill="rgb(33,33,33)"/><circle cx="219.6" cy="178.0" r="3.9" fill="rgb(25,25,25)"/><circle cx="211.8" cy="157.3" r="3.2" fill="rgb(49,49,49)"/><circle cx="294.1" cy="76.2" r="2.8" fill="rgb(42,42,42)"/><circle cx="272.6" cy="134.4" r="3.4" fill="rgb(33,33,33)"/><circle cx="226.7" cy="181.0" r="3.2" fill="rgb(31,31,31)"/><circle cx="138.3" cy="144.0" r="3.0" fill="rgb(36,36,36)"/><circle cx="330.1" cy="113.8" r="3.1" fill="rgb(38,38,38)"/><circle cx="265.9" cy="158.0" r="2.3" fill="rgb(45,45,45)"/><circle cx="260.5" cy="132.6" r="3.8" fill="rgb(46,46,46)"/><circle cx="283.3" cy="51.3" r="3.6" fill="rgb(28,28,28)"/><circle cx="309.5" cy="74.1" r="2.7" fill="rgb(45,45,45)"/><circle cx="257.7" cy="168.0" r="2.8" fill="rgb(49,49,49)"/><circle cx="201.6" cy="181.3" r="3.6" fill="rgb(43,43,43)"/><circle cx="303.6" cy="54.2" r="3.0" fill="rgb(30,30,30)"/><circle cx="288.2" cy="143.2" r="2.0" fill="rgb(30,30,30)"/><circle cx="259.5" cy="179.1" r="3.4" fill="rgb(31,31,31)"/><circle cx="305.1" cy="145.8" r="2.2" fill="rgb(40,40,40)"/><circle cx="177.4" cy="163.7" r="3.6" fill="rgb(40,40,40)"/><circle cx="310.0" cy="135.9" r="2.7" fill="rgb(42,42,42)"/><circle cx="291.9" cy="122.8" r="3.6" fill="rgb(33,33,33)"/><circle cx="265.0" cy="120.3" r="2.4" fill="rgb(49,49,49)"/><circle cx="197.4" cy="189.3" r="2.7" fill="rgb(26,26,26)"/><circle cx="186.5" cy="181.0" r="3.0" fill="rgb(47,47,47)"/><circle cx="217.2" cy="172.0" r="2.9" fill="rgb(36,36,36)"/><circle cx="164.2" cy="161.5" r="3.8" fill="rgb(35,35,35)"/><circle cx="244.2" cy="157.8" r="3.3" fill="rgb(43,43,43)"/><circle cx="310.6" cy="145.0" r="3.1" fill="rgb(44,44,44)"/><circle cx="202.7" cy="173.3" r="2.2" fill="rgb(45,45,45)"/><circle cx="326.2" cy="63.8" r="3.1" fill="rgb(26,26,26)"/><circle cx="217.0" cy="162.2" r="2.1" fill="rgb(42,42,42)"/><circle cx="243.8" cy="118.4" r="3.6" fill="rgb(46,46,46)"/><circle cx="300.5" cy="79.6" r="2.0" fill="rgb(49,49,49)"/><circle cx="309.1" cy="117.7" r="2.5" fill="rgb(46,46,46)"/><circle cx="240.4" cy="172.0" r="2.1" fill="rgb(32,32,32)"/><circle cx="179.8" cy="122.1" r="2.5" fill="rgb(30,30,30)"/><circle cx="290.0" cy="33.0" r="2.9" fill="rgb(37,37,37)"/><circle cx="231.3" cy="197.4" r="2.4" fill="rgb(47,47,47)"/><circle cx="266.4" cy="177.0" r="3.1" fill="rgb(35,35,35)"/><circle cx="247.7" cy="184.9" r="3.6" fill="rgb(32,32,32)"/><circle cx="218.3" cy="156.8" r="2.9" fill="rgb(48,48,48)"/><circle cx="284.1" cy="146.0" r="2.9" fill="rgb(40,40,40)"/><circle cx="306.5" cy="31.0" r="3.2" fill="rgb(29,29,29)"/><circle cx="134.0" cy="127.9" r="3.0" fill="rgb(41,41,41)"/><circle cx="220.0" cy="187.8" r="3.7" fill="rgb(28,28,28)"/><circle cx="367.6" cy="284.9" r="2.2" fill="rgb(44,44,44)"/><circle cx="344.3" cy="294.6" r="2.5" fill="rgb(47,47,47)"/><circle cx="337.2" cy="258.2" r="3.4" fill="rgb(26,26,26)"/><circle cx="350.4" cy="281.0" r="3.2" fill="rgb(32,32,32)"/><circle cx="338.2" cy="281.3" r="2.6" fill="rgb(46,46,46)"/><circle cx="274.1" cy="151.5" r="2.8" fill="rgb(25,25,25)"/><circle cx="276.9" cy="219.6" r="3.1" fill="rgb(27,27,27)"/><circle cx="295.1" cy="217.7" r="3.4" fill="rgb(27,27,27)"/><circle cx="386.0" cy="297.6" r="4.0" fill="rgb(48,48,48)"/><circle cx="303.0" cy="260.8" r="3.5" fill="rgb(37,37,37)"/><circle cx="386.0" cy="290.0" r="3.7" fill="rgb(39,39,39)"/><circle cx="319.3" cy="249.5" r="2.5" fill="rgb(47,47,47)"/><circle cx="362.1" cy="313.0" r="2.1" fill="rgb(39,39,39)"/><circle cx="344.8" cy="321.3" r="3.3" fill="rgb(26,26,26)"/><circle cx="264.9" cy="230.9" r="3.5" fill="rgb(29,29,29)"/><circle cx="345.7" cy="268.9" r="3.1" fill="rgb(27,27,27)"/><circle cx="318.1" cy="218.3" r="2.9" fill="rgb(25,25,25)"/><circle cx="329.3" cy="258.7" r="2.3" fill="rgb(39,39,39)"/><circle cx="261.2" cy="248.9" r="2.3" fill="rgb(29,29,29)"/><circle cx="349.4" cy="312.1" r="3.7" fill="rgb(37,37,37)"/><circle cx="290.8" cy="227.3" r="2.2" fill="rgb(37,37,37)"/><circle cx="325.9" cy="258.6" r="2.3" fill="rgb(38,38,38)"/><circle cx="295.7" cy="251.6" r="2.8" fill="rgb(30,30,30)"/><circle cx="256.8" cy="242.0" r="3.0" fill="rgb(47,47,47)"/><circle cx="263.4" cy="178.9" r="3.6" fill="rgb(39,39,39)"/><circle cx="338.2" cy="285.7" r="2.3" fill="rgb(31,31,31)"/><circle cx="224.5" cy="204.1" r="2.6" fill="rgb(47,47,47)"/><circle cx="236.6" cy="189.1" r="3.2" fill="rgb(44,44,44)"/><circle cx="351.3" cy="259.7" r="3.2" fill="rgb(49,49,49)"/><circle cx="222.0" cy="169.6" r="3.6" fill="rgb(33,33,33)"/><circle cx="307.3" cy="274.9" r="2.0" fill="rgb(48,48,48)"/><circle cx="283.3" cy="238.4" r="2.5" fill="rgb(43,43,43)"/><circle cx="342.9" cy="267.0" r="2.3" fill="rgb(29,29,29)"/><circle cx="237.9" cy="261.3" r="4.0" fill="rgb(44,44,44)"/><circle cx="265.5" cy="240.7" r="3.8" fill="rgb(43,43,43)"/><circle cx="334.2" cy="276.1" r="3.7" fill="rgb(44,44,44)"/><circle cx="246.6" cy="178.9" r="2.3" fill="rgb(49,49,49)"/><circle cx="331.0" cy="241.0" r="3.7" fill="rgb(48,48,48)"/><circle cx="362.2" cy="236.7" r="3.6" fill="rgb(39,39,39)"/><circle cx="309.8" cy="204.7" r="3.7" fill="rgb(32,32,32)"/><circle cx="323.5" cy="271.2" r="2.2" fill="rgb(49,49,49)"/><circle cx="347.5" cy="299.8" r="2.5" fill="rgb(29,29,29)"/><circle cx="299.0" cy="261.3" r="3.8" fill="rgb(42,42,42)"/><circle cx="310.1" cy="276.0" r="3.6" fill="rgb(42,42,42)"/><circle cx="377.7" cy="260.4" r="2.2" fill="rgb(41,41,41)"/><circle cx="340.0" cy="289.7" r="3.7" fill="rgb(44,44,44)"/><circle cx="236.9" cy="185.8" r="2.2" fill="rgb(45,45,45)"/><circle cx="274.0" cy="220.8" r="2.7" fill="rgb(30,30,30)"/><circle cx="297.7" cy="205.1" r="2.6" fill="rgb(27,27,27)"/><circle cx="263.8" cy="199.7" r="3.3" fill="rgb(45,45,45)"/><circle cx="251.1" cy="195.4" r="3.6" fill="rgb(29,29,29)"/><circle cx="288.7" cy="215.3" r="2.4" fill="rgb(47,47,47)"/><circle cx="336.9" cy="235.6" r="3.0" fill="rgb(48,48,48)"/><circle cx="317.5" cy="240.8" r="3.7" fill="rgb(29,29,29)"/><circle cx="320.3" cy="243.0" r="3.9" fill="rgb(36,36,36)"/><circle cx="350.8" cy="282.7" r="2.2" fill="rgb(38,38,38)"/><circle cx="338.5" cy="268.2" r="3.9" fill="rgb(47,47,47)"/><circle cx="355.1" cy="264.2" r="2.9" fill="rgb(48,48,48)"/><circle cx="268.4" cy="204.9" r="2.8" fill="rgb(38,38,38)"/><circle cx="351.5" cy="239.0" r="2.7" fill="rgb(49,49,49)"/></g><g filter="url(#bl1)" fill="none" stroke-linecap="round" stroke-linejoin="round"><circle cx="97.6" cy="44.9" r="1.3" fill="rgb(118,118,118)"/><circle cx="100.2" cy="45.2" r="1.2" fill="rgb(107,107,107)"/><circle cx="91.9" cy="11.6" r="2.2" fill="rgb(73,73,73)"/><circle cx="80.1" cy="15.6" r="1.9" fill="rgb(103,103,103)"/><circle cx="149.2" cy="101.7" r="1.5" fill="rgb(75,75,75)"/><circle cx="83.8" cy="24.1" r="1.4" fill="rgb(123,123,123)"/><circle cx="103.7" cy="76.3" r="1.3" fill="rgb(66,66,66)"/><circle cx="87.1" cy="18.3" r="1.6" fill="rgb(124,124,124)"/><circle cx="93.4" cy="62.6" r="2.0" fill="rgb(86,86,86)"/><circle cx="92.6" cy="62.5" r="2.1" fill="rgb(91,91,91)"/><circle cx="142.8" cy="102.7" r="2.1" fill="rgb(76,76,76)"/><circle cx="107.7" cy="58.2" r="2.1" fill="rgb(123,123,123)"/><circle cx="124.8" cy="99.3" r="1.9" fill="rgb(123,123,123)"/><circle cx="104.6" cy="40.6" r="1.8" fill="rgb(133,133,133)"/><circle cx="83.8" cy="-1.2" r="2.4" fill="rgb(150,150,150)"/><circle cx="84.9" cy="39.1" r="1.2" fill="rgb(110,110,110)"/><circle cx="90.5" cy="21.0" r="2.1" fill="rgb(74,74,74)"/><circle cx="81.4" cy="36.6" r="1.3" fill="rgb(109,109,109)"/><circle cx="111.3" cy="54.6" r="2.2" fill="rgb(90,90,90)"/><circle cx="86.8" cy="58.1" r="2.3" fill="rgb(76,76,76)"/><circle cx="89.6" cy="24.9" r="1.8" fill="rgb(124,124,124)"/><circle cx="97.4" cy="30.8" r="1.6" fill="rgb(122,122,122)"/><circle cx="133.0" cy="89.8" r="1.9" fill="rgb(134,134,134)"/><circle cx="94.7" cy="0.1" r="2.2" fill="rgb(147,147,147)"/><circle cx="91.9" cy="47.5" r="2.0" fill="rgb(66,66,66)"/><circle cx="87.5" cy="11.3" r="1.6" fill="rgb(65,65,65)"/><circle cx="86.6" cy="2.3" r="1.6" fill="rgb(62,62,62)"/><circle cx="125.8" cy="88.4" r="1.5" fill="rgb(98,98,98)"/><circle cx="101.9" cy="50.7" r="2.4" fill="rgb(111,111,111)"/><circle cx="101.1" cy="56.9" r="1.6" fill="rgb(89,89,89)"/><circle cx="181.8" cy="157.4" r="2.3" fill="rgb(118,118,118)"/><circle cx="306.6" cy="64.7" r="1.8" fill="rgb(167,167,167)"/><circle cx="169.0" cy="140.8" r="1.6" fill="rgb(78,78,78)"/><circle cx="176.2" cy="162.3" r="1.6" fill="rgb(84,84,84)"/><circle cx="206.4" cy="156.7" r="2.2" fill="rgb(150,150,150)"/><circle cx="205.5" cy="184.5" r="1.6" fill="rgb(63,63,63)"/><circle cx="300.2" cy="37.0" r="2.0" fill="rgb(165,165,165)"/><circle cx="310.3" cy="137.3" r="2.3" fill="rgb(100,100,100)"/><circle cx="311.1" cy="95.8" r="1.4" fill="rgb(128,128,128)"/><circle cx="169.3" cy="131.3" r="2.0" fill="rgb(147,147,147)"/><circle cx="292.4" cy="25.8" r="2.1" fill="rgb(142,142,142)"/><circle cx="281.6" cy="174.3" r="1.6" fill="rgb(148,148,148)"/><circle cx="137.5" cy="133.1" r="2.3" fill="rgb(139,139,139)"/><circle cx="314.4" cy="77.1" r="2.3" fill="rgb(148,148,148)"/><circle cx="323.3" cy="37.9" r="2.0" fill="rgb(98,98,98)"/><circle cx="257.9" cy="173.0" r="2.4" fill="rgb(131,131,131)"/><circle cx="272.8" cy="162.6" r="2.2" fill="rgb(150,150,150)"/><circle cx="309.9" cy="94.7" r="1.5" fill="rgb(124,124,124)"/><circle cx="304.9" cy="103.7" r="2.3" fill="rgb(98,98,98)"/><circle cx="257.0" cy="140.4" r="1.7" fill="rgb(160,160,160)"/><circle cx="254.8" cy="159.4" r="1.2" fill="rgb(108,108,108)"/><circle cx="329.7" cy="77.3" r="1.4" fill="rgb(112,112,112)"/><circle cx="198.7" cy="169.6" r="1.8" fill="rgb(121,121,121)"/><circle cx="202.9" cy="172.6" r="1.5" fill="rgb(90,90,90)"/><circle cx="180.7" cy="165.4" r="2.1" fill="rgb(160,160,160)"/><circle cx="271.0" cy="140.5" r="1.8" fill="rgb(136,136,136)"/><circle cx="266.7" cy="148.5" r="2.3" fill="rgb(136,136,136)"/><circle cx="176.5" cy="143.4" r="1.9" fill="rgb(163,163,163)"/><circle cx="181.4" cy="157.6" r="1.7" fill="rgb(67,67,67)"/><circle cx="324.7" cy="102.2" r="2.1" fill="rgb(158,158,158)"/><circle cx="306.1" cy="52.0" r="1.4" fill="rgb(157,157,157)"/><circle cx="152.4" cy="153.9" r="1.7" fill="rgb(113,113,113)"/><circle cx="145.5" cy="116.6" r="1.7" fill="rgb(116,116,116)"/><circle cx="304.4" cy="132.4" r="2.1" fill="rgb(62,62,62)"/><circle cx="253.4" cy="173.5" r="1.6" fill="rgb(128,128,128)"/><circle cx="294.9" cy="177.0" r="2.1" fill="rgb(166,166,166)"/><circle cx="306.2" cy="55.5" r="2.1" fill="rgb(89,89,89)"/><circle cx="286.6" cy="71.4" r="2.2" fill="rgb(88,88,88)"/><circle cx="321.7" cy="59.2" r="2.0" fill="rgb(69,69,69)"/><circle cx="299.2" cy="27.1" r="1.3" fill="rgb(163,163,163)"/><circle cx="236.1" cy="178.6" r="2.2" fill="rgb(67,67,67)"/><circle cx="162.4" cy="151.9" r="1.9" fill="rgb(161,161,161)"/><circle cx="319.3" cy="113.3" r="1.5" fill="rgb(72,72,72)"/><circle cx="317.0" cy="72.2" r="1.6" fill="rgb(93,93,93)"/><circle cx="194.8" cy="181.1" r="1.4" fill="rgb(98,98,98)"/><circle cx="301.1" cy="27.6" r="2.1" fill="rgb(120,120,120)"/><circle cx="284.6" cy="82.8" r="1.3" fill="rgb(150,150,150)"/><circle cx="262.6" cy="147.2" r="1.7" fill="rgb(115,115,115)"/><circle cx="228.9" cy="176.0" r="2.2" fill="rgb(137,137,137)"/><circle cx="225.8" cy="188.6" r="1.3" fill="rgb(74,74,74)"/><circle cx="303.9" cy="33.4" r="1.4" fill="rgb(69,69,69)"/><circle cx="188.7" cy="141.2" r="1.5" fill="rgb(86,86,86)"/><circle cx="303.0" cy="112.8" r="1.7" fill="rgb(88,88,88)"/><circle cx="162.2" cy="126.2" r="1.5" fill="rgb(166,166,166)"/><circle cx="306.0" cy="115.9" r="1.7" fill="rgb(112,112,112)"/><circle cx="271.7" cy="174.7" r="1.2" fill="rgb(89,89,89)"/><circle cx="303.0" cy="49.7" r="1.2" fill="rgb(93,93,93)"/><circle cx="298.4" cy="85.5" r="2.1" fill="rgb(132,132,132)"/><circle cx="218.5" cy="166.4" r="1.6" fill="rgb(168,168,168)"/><circle cx="306.7" cy="50.6" r="1.3" fill="rgb(151,151,151)"/><circle cx="152.2" cy="130.6" r="2.2" fill="rgb(75,75,75)"/><circle cx="241.9" cy="166.2" r="2.2" fill="rgb(150,150,150)"/><circle cx="261.0" cy="168.2" r="2.0" fill="rgb(85,85,85)"/><circle cx="308.9" cy="37.4" r="1.3" fill="rgb(151,151,151)"/><circle cx="243.5" cy="162.5" r="2.0" fill="rgb(113,113,113)"/><circle cx="305.6" cy="3.6" r="1.8" fill="rgb(118,118,118)"/><circle cx="243.8" cy="187.5" r="1.5" fill="rgb(68,68,68)"/><circle cx="309.0" cy="95.4" r="2.1" fill="rgb(167,167,167)"/><circle cx="260.4" cy="168.8" r="2.0" fill="rgb(144,144,144)"/><circle cx="237.1" cy="181.5" r="1.4" fill="rgb(87,87,87)"/><circle cx="197.8" cy="184.4" r="1.2" fill="rgb(66,66,66)"/><circle cx="302.1" cy="88.9" r="2.0" fill="rgb(91,91,91)"/><circle cx="252.6" cy="168.0" r="1.3" fill="rgb(158,158,158)"/><circle cx="335.6" cy="78.3" r="1.2" fill="rgb(110,110,110)"/><circle cx="194.6" cy="154.7" r="1.5" fill="rgb(83,83,83)"/><circle cx="155.7" cy="146.2" r="1.4" fill="rgb(117,117,117)"/><circle cx="164.2" cy="145.6" r="1.8" fill="rgb(157,157,157)"/><circle cx="217.1" cy="198.7" r="1.8" fill="rgb(62,62,62)"/><circle cx="288.2" cy="21.7" r="1.6" fill="rgb(75,75,75)"/><circle cx="291.8" cy="143.8" r="1.2" fill="rgb(142,142,142)"/><circle cx="196.3" cy="170.7" r="2.1" fill="rgb(159,159,159)"/><circle cx="302.1" cy="118.3" r="2.4" fill="rgb(124,124,124)"/><circle cx="289.4" cy="132.8" r="1.3" fill="rgb(71,71,71)"/><circle cx="173.4" cy="179.4" r="1.5" fill="rgb(89,89,89)"/><circle cx="269.8" cy="174.0" r="2.3" fill="rgb(157,157,157)"/><circle cx="168.3" cy="140.8" r="2.3" fill="rgb(120,120,120)"/><circle cx="226.5" cy="179.0" r="1.7" fill="rgb(142,142,142)"/><circle cx="230.9" cy="185.3" r="2.3" fill="rgb(74,74,74)"/><circle cx="269.4" cy="163.2" r="2.1" fill="rgb(167,167,167)"/><circle cx="304.8" cy="93.3" r="1.9" fill="rgb(103,103,103)"/><circle cx="264.5" cy="216.1" r="2.3" fill="rgb(114,114,114)"/><circle cx="309.3" cy="183.8" r="1.7" fill="rgb(75,75,75)"/><circle cx="273.8" cy="218.0" r="1.3" fill="rgb(86,86,86)"/><circle cx="238.6" cy="204.5" r="2.1" fill="rgb(105,105,105)"/><circle cx="275.4" cy="231.5" r="1.6" fill="rgb(66,66,66)"/><circle cx="279.4" cy="219.2" r="1.8" fill="rgb(129,129,129)"/><circle cx="360.6" cy="282.4" r="1.5" fill="rgb(103,103,103)"/><circle cx="325.2" cy="228.0" r="2.2" fill="rgb(62,62,62)"/><circle cx="235.0" cy="156.3" r="1.8" fill="rgb(124,124,124)"/><circle cx="211.6" cy="208.1" r="2.2" fill="rgb(154,154,154)"/><circle cx="372.4" cy="289.6" r="1.4" fill="rgb(117,117,117)"/><circle cx="356.6" cy="243.1" r="2.0" fill="rgb(144,144,144)"/><circle cx="292.7" cy="236.5" r="2.1" fill="rgb(85,85,85)"/><circle cx="357.1" cy="265.4" r="1.4" fill="rgb(87,87,87)"/><circle cx="322.9" cy="242.1" r="1.3" fill="rgb(117,117,117)"/><circle cx="308.1" cy="253.7" r="1.9" fill="rgb(61,61,61)"/><circle cx="235.5" cy="233.0" r="2.0" fill="rgb(157,157,157)"/><circle cx="300.7" cy="251.7" r="2.4" fill="rgb(137,137,137)"/><circle cx="294.2" cy="226.3" r="2.0" fill="rgb(106,106,106)"/><circle cx="250.7" cy="186.9" r="1.5" fill="rgb(63,63,63)"/><circle cx="258.7" cy="238.2" r="1.4" fill="rgb(147,147,147)"/><circle cx="330.7" cy="256.0" r="2.4" fill="rgb(94,94,94)"/><circle cx="353.6" cy="276.4" r="2.1" fill="rgb(92,92,92)"/><circle cx="359.4" cy="280.0" r="1.5" fill="rgb(105,105,105)"/><circle cx="338.6" cy="248.4" r="1.7" fill="rgb(83,83,83)"/><circle cx="375.9" cy="286.2" r="1.3" fill="rgb(103,103,103)"/><circle cx="381.9" cy="256.4" r="2.4" fill="rgb(162,162,162)"/><circle cx="293.5" cy="260.3" r="2.1" fill="rgb(63,63,63)"/><circle cx="318.7" cy="261.9" r="1.6" fill="rgb(78,78,78)"/><circle cx="237.5" cy="200.0" r="2.3" fill="rgb(73,73,73)"/><circle cx="375.3" cy="295.6" r="2.2" fill="rgb(150,150,150)"/><circle cx="310.7" cy="241.1" r="1.6" fill="rgb(161,161,161)"/><circle cx="239.1" cy="235.9" r="1.2" fill="rgb(105,105,105)"/><circle cx="351.7" cy="259.7" r="1.2" fill="rgb(66,66,66)"/><circle cx="364.3" cy="302.7" r="2.3" fill="rgb(97,97,97)"/><circle cx="291.9" cy="214.5" r="1.5" fill="rgb(138,138,138)"/><circle cx="276.6" cy="226.0" r="2.1" fill="rgb(160,160,160)"/><circle cx="328.3" cy="248.1" r="1.5" fill="rgb(112,112,112)"/><circle cx="385.5" cy="275.7" r="1.5" fill="rgb(107,107,107)"/><circle cx="311.6" cy="236.5" r="2.2" fill="rgb(141,141,141)"/><circle cx="355.7" cy="243.9" r="1.6" fill="rgb(95,95,95)"/><circle cx="284.7" cy="222.5" r="1.4" fill="rgb(142,142,142)"/><circle cx="271.5" cy="218.9" r="1.9" fill="rgb(95,95,95)"/><circle cx="408.7" cy="251.1" r="1.5" fill="rgb(69,69,69)"/><circle cx="225.6" cy="197.8" r="1.7" fill="rgb(85,85,85)"/><circle cx="273.8" cy="217.7" r="2.1" fill="rgb(153,153,153)"/><circle cx="352.1" cy="272.4" r="1.6" fill="rgb(122,122,122)"/><circle cx="284.1" cy="219.3" r="1.5" fill="rgb(86,86,86)"/><circle cx="272.8" cy="191.0" r="1.6" fill="rgb(103,103,103)"/><circle cx="363.4" cy="283.6" r="2.2" fill="rgb(131,131,131)"/><circle cx="389.3" cy="294.9" r="2.2" fill="rgb(152,152,152)"/><circle cx="377.6" cy="278.9" r="1.3" fill="rgb(80,80,80)"/><circle cx="340.4" cy="263.6" r="1.6" fill="rgb(155,155,155)"/><circle cx="294.1" cy="264.9" r="2.3" fill="rgb(71,71,71)"/><circle cx="310.8" cy="239.4" r="1.6" fill="rgb(75,75,75)"/><circle cx="262.1" cy="233.2" r="2.0" fill="rgb(82,82,82)"/><circle cx="230.0" cy="207.8" r="1.4" fill="rgb(94,94,94)"/><circle cx="268.4" cy="192.2" r="1.3" fill="rgb(71,71,71)"/><circle cx="266.4" cy="225.0" r="1.3" fill="rgb(78,78,78)"/><circle cx="323.9" cy="260.1" r="1.6" fill="rgb(164,164,164)"/><circle cx="262.5" cy="218.1" r="1.7" fill="rgb(155,155,155)"/><circle cx="368.6" cy="292.6" r="2.1" fill="rgb(82,82,82)"/><circle cx="254.3" cy="176.0" r="2.2" fill="rgb(104,104,104)"/><circle cx="351.3" cy="274.4" r="1.2" fill="rgb(120,120,120)"/><circle cx="331.9" cy="246.1" r="1.9" fill="rgb(100,100,100)"/><circle cx="312.1" cy="251.9" r="1.8" fill="rgb(161,161,161)"/><circle cx="223.3" cy="200.9" r="2.4" fill="rgb(81,81,81)"/><circle cx="295.0" cy="186.3" r="1.8" fill="rgb(65,65,65)"/><circle cx="339.9" cy="299.3" r="1.9" fill="rgb(150,150,150)"/><circle cx="260.4" cy="194.8" r="1.7" fill="rgb(153,153,153)"/><circle cx="358.1" cy="276.5" r="1.7" fill="rgb(116,116,116)"/><circle cx="295.1" cy="239.4" r="2.1" fill="rgb(158,158,158)"/><circle cx="219.7" cy="180.1" r="1.2" fill="rgb(152,152,152)"/><circle cx="236.8" cy="188.5" r="2.0" fill="rgb(93,93,93)"/><circle cx="277.0" cy="226.1" r="2.0" fill="rgb(109,109,109)"/><circle cx="316.3" cy="239.4" r="1.8" fill="rgb(85,85,85)"/><circle cx="348.1" cy="241.6" r="1.4" fill="rgb(112,112,112)"/><circle cx="263.7" cy="211.2" r="1.3" fill="rgb(108,108,108)"/><circle cx="327.1" cy="247.7" r="1.3" fill="rgb(140,140,140)"/><circle cx="341.3" cy="260.2" r="1.8" fill="rgb(101,101,101)"/><circle cx="390.2" cy="303.4" r="2.4" fill="rgb(140,140,140)"/><circle cx="367.3" cy="307.1" r="1.8" fill="rgb(165,165,165)"/><circle cx="379.3" cy="300.1" r="2.3" fill="rgb(67,67,67)"/><circle cx="282.2" cy="218.5" r="2.3" fill="rgb(90,90,90)"/><circle cx="363.4" cy="279.6" r="2.3" fill="rgb(82,82,82)"/><circle cx="255.4" cy="218.7" r="1.2" fill="rgb(80,80,80)"/><circle cx="280.3" cy="196.6" r="2.3" fill="rgb(78,78,78)"/><circle cx="362.4" cy="274.4" r="2.0" fill="rgb(99,99,99)"/><circle cx="339.4" cy="263.9" r="2.3" fill="rgb(71,71,71)"/><circle cx="364.1" cy="272.6" r="2.2" fill="rgb(89,89,89)"/><circle cx="242.6" cy="286.0" r="2.1" fill="rgb(108,108,108)"/><circle cx="191.5" cy="239.1" r="2.2" fill="rgb(87,87,87)"/><circle cx="232.8" cy="270.4" r="2.0" fill="rgb(94,94,94)"/><circle cx="184.6" cy="231.1" r="1.9" fill="rgb(107,107,107)"/><circle cx="217.0" cy="261.0" r="1.5" fill="rgb(131,131,131)"/><circle cx="189.0" cy="231.6" r="1.3" fill="rgb(99,99,99)"/><circle cx="185.5" cy="239.3" r="1.4" fill="rgb(128,128,128)"/><circle cx="223.6" cy="275.2" r="1.5" fill="rgb(76,76,76)"/><circle cx="175.8" cy="223.9" r="2.1" fill="rgb(104,104,104)"/><circle cx="208.8" cy="248.1" r="1.9" fill="rgb(98,98,98)"/><circle cx="205.0" cy="278.3" r="2.1" fill="rgb(87,87,87)"/><circle cx="252.0" cy="287.7" r="1.7" fill="rgb(86,86,86)"/><circle cx="184.1" cy="232.6" r="1.9" fill="rgb(163,163,163)"/><circle cx="192.7" cy="249.7" r="1.8" fill="rgb(130,130,130)"/><circle cx="238.8" cy="286.5" r="1.6" fill="rgb(65,65,65)"/><circle cx="244.1" cy="271.9" r="1.2" fill="rgb(152,152,152)"/><circle cx="217.5" cy="279.8" r="1.7" fill="rgb(84,84,84)"/><circle cx="187.1" cy="239.1" r="1.6" fill="rgb(142,142,142)"/><circle cx="233.6" cy="263.9" r="1.5" fill="rgb(120,120,120)"/><circle cx="210.9" cy="249.1" r="1.5" fill="rgb(130,130,130)"/><circle cx="99.6" cy="394.7" r="1.2" fill="rgb(88,88,88)"/><circle cx="93.7" cy="278.9" r="2.1" fill="rgb(95,95,95)"/><circle cx="92.7" cy="372.7" r="2.3" fill="rgb(129,129,129)"/><circle cx="84.0" cy="323.7" r="1.8" fill="rgb(152,152,152)"/><circle cx="104.8" cy="339.8" r="2.1" fill="rgb(122,122,122)"/><circle cx="99.3" cy="323.5" r="1.3" fill="rgb(160,160,160)"/><circle cx="97.5" cy="294.9" r="2.3" fill="rgb(97,97,97)"/><circle cx="95.6" cy="294.3" r="2.0" fill="rgb(129,129,129)"/><circle cx="97.8" cy="344.4" r="1.9" fill="rgb(99,99,99)"/><circle cx="105.8" cy="340.9" r="1.3" fill="rgb(155,155,155)"/><circle cx="100.4" cy="367.9" r="1.4" fill="rgb(72,72,72)"/><circle cx="101.2" cy="268.4" r="2.0" fill="rgb(150,150,150)"/><circle cx="97.7" cy="346.1" r="1.3" fill="rgb(143,143,143)"/><circle cx="89.6" cy="309.5" r="1.2" fill="rgb(88,88,88)"/><circle cx="93.5" cy="298.1" r="1.6" fill="rgb(166,166,166)"/><circle cx="108.1" cy="317.9" r="1.2" fill="rgb(105,105,105)"/><circle cx="99.8" cy="313.3" r="2.0" fill="rgb(119,119,119)"/><circle cx="97.0" cy="297.8" r="2.2" fill="rgb(78,78,78)"/><circle cx="95.1" cy="296.3" r="2.4" fill="rgb(60,60,60)"/><circle cx="81.7" cy="328.7" r="1.4" fill="rgb(114,114,114)"/><circle cx="100.6" cy="307.0" r="2.3" fill="rgb(91,91,91)"/><circle cx="90.5" cy="289.7" r="1.3" fill="rgb(130,130,130)"/><circle cx="95.2" cy="272.9" r="2.1" fill="rgb(129,129,129)"/><circle cx="88.8" cy="320.4" r="2.3" fill="rgb(69,69,69)"/><circle cx="102.9" cy="368.1" r="1.5" fill="rgb(159,159,159)"/><circle cx="222.1" cy="84.3" r="1.5" fill="rgb(110,110,110)"/><circle cx="233.2" cy="66.9" r="2.0" fill="rgb(98,98,98)"/><circle cx="231.6" cy="74.9" r="2.0" fill="rgb(141,141,141)"/><circle cx="210.7" cy="59.4" r="1.9" fill="rgb(73,73,73)"/><circle cx="232.7" cy="70.8" r="1.4" fill="rgb(93,93,93)"/><circle cx="244.7" cy="80.6" r="1.4" fill="rgb(87,87,87)"/><circle cx="221.6" cy="64.8" r="1.6" fill="rgb(80,80,80)"/><circle cx="258.2" cy="91.3" r="2.4" fill="rgb(71,71,71)"/><circle cx="237.6" cy="67.8" r="2.1" fill="rgb(107,107,107)"/><circle cx="219.3" cy="55.0" r="1.4" fill="rgb(102,102,102)"/><circle cx="207.5" cy="53.4" r="2.0" fill="rgb(115,115,115)"/><circle cx="235.5" cy="81.6" r="1.9" fill="rgb(104,104,104)"/><circle cx="250.3" cy="81.5" r="1.9" fill="rgb(142,142,142)"/><circle cx="229.4" cy="80.7" r="2.3" fill="rgb(145,145,145)"/><circle cx="248.1" cy="76.2" r="2.0" fill="rgb(109,109,109)"/><circle cx="33.5" cy="134.5" r="1.7" fill="rgb(146,146,146)"/><circle cx="79.5" cy="122.4" r="1.7" fill="rgb(110,110,110)"/><circle cx="60.8" cy="137.0" r="2.3" fill="rgb(80,80,80)"/><circle cx="79.2" cy="118.8" r="1.8" fill="rgb(167,167,167)"/><circle cx="-1.2" cy="146.9" r="2.1" fill="rgb(163,163,163)"/><circle cx="71.4" cy="137.7" r="1.8" fill="rgb(138,138,138)"/><circle cx="47.9" cy="115.6" r="1.8" fill="rgb(105,105,105)"/><circle cx="117.4" cy="140.2" r="1.7" fill="rgb(143,143,143)"/><circle cx="23.7" cy="144.3" r="1.3" fill="rgb(90,90,90)"/><circle cx="57.2" cy="135.3" r="1.7" fill="rgb(136,136,136)"/><circle cx="40.6" cy="143.4" r="2.1" fill="rgb(163,163,163)"/><circle cx="65.3" cy="147.5" r="1.7" fill="rgb(83,83,83)"/><circle cx="18.2" cy="127.0" r="2.0" fill="rgb(111,111,111)"/><circle cx="70.0" cy="155.0" r="1.6" fill="rgb(130,130,130)"/><circle cx="102.2" cy="116.6" r="1.6" fill="rgb(120,120,120)"/><circle cx="19.4" cy="137.0" r="2.2" fill="rgb(89,89,89)"/><circle cx="43.8" cy="145.9" r="1.4" fill="rgb(60,60,60)"/><circle cx="84.3" cy="135.2" r="1.6" fill="rgb(112,112,112)"/><circle cx="40.6" cy="122.1" r="1.6" fill="rgb(162,162,162)"/><circle cx="119.7" cy="133.1" r="2.3" fill="rgb(146,146,146)"/><circle cx="52.8" cy="314.2" r="1.0" fill="rgb(69,69,69)"/><circle cx="4.3" cy="359.8" r="1.2" fill="rgb(71,71,71)"/><circle cx="38.2" cy="54.0" r="1.6" fill="rgb(47,47,47)"/><circle cx="130.3" cy="57.7" r="1.6" fill="rgb(84,84,84)"/><circle cx="63.1" cy="336.8" r="1.6" fill="rgb(68,68,68)"/><circle cx="251.3" cy="337.9" r="1.7" fill="rgb(78,78,78)"/><circle cx="74.2" cy="261.9" r="1.6" fill="rgb(64,64,64)"/><circle cx="164.9" cy="333.7" r="1.2" fill="rgb(65,65,65)"/><circle cx="88.1" cy="52.7" r="1.0" fill="rgb(62,62,62)"/><circle cx="175.6" cy="54.6" r="1.4" fill="rgb(62,62,62)"/><circle cx="202.9" cy="326.2" r="1.7" fill="rgb(35,35,35)"/><circle cx="176.0" cy="212.7" r="1.7" fill="rgb(71,71,71)"/><circle cx="141.0" cy="158.3" r="1.1" fill="rgb(87,87,87)"/><circle cx="239.5" cy="240.5" r="1.5" fill="rgb(36,36,36)"/><circle cx="256.7" cy="352.1" r="1.8" fill="rgb(53,53,53)"/><circle cx="192.0" cy="183.2" r="1.0" fill="rgb(84,84,84)"/><circle cx="270.0" cy="236.4" r="1.7" fill="rgb(53,53,53)"/><circle cx="137.7" cy="179.4" r="1.6" fill="rgb(63,63,63)"/><circle cx="79.2" cy="164.5" r="1.4" fill="rgb(58,58,58)"/><circle cx="310.8" cy="110.7" r="1.3" fill="rgb(80,80,80)"/><circle cx="189.4" cy="102.7" r="1.8" fill="rgb(62,62,62)"/><circle cx="246.1" cy="299.4" r="1.3" fill="rgb(53,53,53)"/><circle cx="112.5" cy="221.7" r="1.6" fill="rgb(69,69,69)"/><circle cx="15.1" cy="273.2" r="1.4" fill="rgb(83,83,83)"/><circle cx="18.7" cy="113.6" r="1.2" fill="rgb(35,35,35)"/><circle cx="346.5" cy="230.1" r="1.6" fill="rgb(71,71,71)"/><circle cx="342.1" cy="231.2" r="1.5" fill="rgb(68,68,68)"/><circle cx="261.8" cy="225.4" r="1.2" fill="rgb(72,72,72)"/><circle cx="250.8" cy="173.1" r="1.1" fill="rgb(76,76,76)"/><circle cx="68.2" cy="14.0" r="1.7" fill="rgb(77,77,77)"/><circle cx="246.5" cy="139.4" r="1.6" fill="rgb(80,80,80)"/><circle cx="211.4" cy="97.5" r="1.3" fill="rgb(51,51,51)"/><circle cx="119.7" cy="162.8" r="1.7" fill="rgb(70,70,70)"/><circle cx="20.5" cy="214.5" r="1.1" fill="rgb(37,37,37)"/><circle cx="304.7" cy="217.5" r="1.4" fill="rgb(85,85,85)"/><circle cx="5.3" cy="146.3" r="1.8" fill="rgb(67,67,67)"/><circle cx="368.8" cy="179.7" r="1.1" fill="rgb(57,57,57)"/><circle cx="242.3" cy="80.2" r="1.0" fill="rgb(43,43,43)"/><circle cx="1.8" cy="258.5" r="1.8" fill="rgb(41,41,41)"/><circle cx="33.1" cy="328.7" r="1.0" fill="rgb(42,42,42)"/><circle cx="270.5" cy="91.6" r="1.1" fill="rgb(75,75,75)"/><circle cx="18.9" cy="292.6" r="1.7" fill="rgb(74,74,74)"/><circle cx="274.4" cy="31.9" r="1.6" fill="rgb(69,69,69)"/><circle cx="173.2" cy="352.4" r="1.8" fill="rgb(48,48,48)"/><circle cx="269.7" cy="4.3" r="1.5" fill="rgb(35,35,35)"/><circle cx="307.3" cy="30.1" r="1.6" fill="rgb(52,52,52)"/><circle cx="62.4" cy="325.4" r="1.0" fill="rgb(61,61,61)"/><circle cx="138.2" cy="217.3" r="1.5" fill="rgb(59,59,59)"/><circle cx="54.5" cy="301.4" r="1.5" fill="rgb(54,54,54)"/><circle cx="236.8" cy="158.0" r="1.6" fill="rgb(56,56,56)"/><circle cx="355.3" cy="296.6" r="1.2" fill="rgb(66,66,66)"/><circle cx="22.8" cy="368.2" r="1.7" fill="rgb(73,73,73)"/><circle cx="124.8" cy="229.0" r="1.7" fill="rgb(88,88,88)"/><circle cx="226.0" cy="116.6" r="1.7" fill="rgb(58,58,58)"/><circle cx="141.6" cy="258.9" r="1.7" fill="rgb(68,68,68)"/><circle cx="303.6" cy="107.1" r="1.2" fill="rgb(35,35,35)"/><circle cx="158.9" cy="221.8" r="1.7" fill="rgb(79,79,79)"/><circle cx="15.9" cy="315.0" r="1.7" fill="rgb(79,79,79)"/><circle cx="215.0" cy="103.5" r="1.6" fill="rgb(81,81,81)"/><circle cx="257.4" cy="345.4" r="1.1" fill="rgb(54,54,54)"/><circle cx="208.2" cy="301.4" r="1.6" fill="rgb(46,46,46)"/><circle cx="350.3" cy="88.5" r="1.5" fill="rgb(68,68,68)"/><circle cx="175.0" cy="78.1" r="1.6" fill="rgb(49,49,49)"/><circle cx="297.7" cy="173.8" r="1.6" fill="rgb(39,39,39)"/><circle cx="290.3" cy="88.0" r="1.7" fill="rgb(66,66,66)"/><circle cx="332.8" cy="197.3" r="1.5" fill="rgb(61,61,61)"/><circle cx="71.1" cy="72.7" r="1.6" fill="rgb(44,44,44)"/><circle cx="136.4" cy="213.4" r="1.4" fill="rgb(57,57,57)"/><circle cx="56.0" cy="16.9" r="1.3" fill="rgb(89,89,89)"/><circle cx="39.9" cy="239.2" r="1.1" fill="rgb(78,78,78)"/><circle cx="224.6" cy="130.4" r="1.0" fill="rgb(63,63,63)"/><circle cx="12.6" cy="374.4" r="1.4" fill="rgb(82,82,82)"/><circle cx="213.3" cy="98.9" r="1.3" fill="rgb(77,77,77)"/><circle cx="355.9" cy="290.0" r="1.8" fill="rgb(80,80,80)"/><circle cx="95.5" cy="14.3" r="1.1" fill="rgb(46,46,46)"/><circle cx="31.5" cy="19.3" r="1.7" fill="rgb(65,65,65)"/><circle cx="172.3" cy="358.0" r="1.1" fill="rgb(85,85,85)"/><circle cx="224.9" cy="150.2" r="1.8" fill="rgb(41,41,41)"/><circle cx="96.7" cy="213.4" r="1.8" fill="rgb(70,70,70)"/><circle cx="251.8" cy="148.6" r="1.1" fill="rgb(59,59,59)"/><circle cx="363.1" cy="374.9" r="1.0" fill="rgb(47,47,47)"/><circle cx="96.2" cy="133.1" r="1.7" fill="rgb(84,84,84)"/><circle cx="314.8" cy="17.8" r="1.6" fill="rgb(78,78,78)"/><circle cx="243.2" cy="372.5" r="1.1" fill="rgb(38,38,38)"/><circle cx="283.9" cy="355.1" r="1.2" fill="rgb(72,72,72)"/><circle cx="222.4" cy="286.5" r="1.3" fill="rgb(40,40,40)"/><circle cx="96.6" cy="46.9" r="1.1" fill="rgb(61,61,61)"/><circle cx="89.7" cy="54.1" r="1.0" fill="rgb(72,72,72)"/><circle cx="269.7" cy="73.7" r="1.7" fill="rgb(36,36,36)"/><circle cx="82.9" cy="353.0" r="1.7" fill="rgb(82,82,82)"/><circle cx="52.6" cy="169.1" r="1.7" fill="rgb(40,40,40)"/><circle cx="316.7" cy="237.5" r="1.3" fill="rgb(59,59,59)"/><circle cx="309.5" cy="180.5" r="1.1" fill="rgb(69,69,69)"/><circle cx="83.3" cy="21.4" r="1.4" fill="rgb(74,74,74)"/><circle cx="54.4" cy="329.1" r="1.3" fill="rgb(49,49,49)"/><circle cx="58.5" cy="102.5" r="1.3" fill="rgb(81,81,81)"/><circle cx="63.1" cy="185.6" r="1.7" fill="rgb(52,52,52)"/><circle cx="42.9" cy="369.9" r="1.7" fill="rgb(38,38,38)"/><circle cx="251.3" cy="79.8" r="1.2" fill="rgb(61,61,61)"/><circle cx="96.9" cy="76.2" r="1.8" fill="rgb(55,55,55)"/><circle cx="375.3" cy="349.7" r="1.2" fill="rgb(40,40,40)"/><circle cx="337.0" cy="21.7" r="1.2" fill="rgb(74,74,74)"/><circle cx="368.0" cy="6.1" r="1.3" fill="rgb(79,79,79)"/><circle cx="52.7" cy="0.7" r="1.4" fill="rgb(80,80,80)"/><circle cx="69.9" cy="164.5" r="1.2" fill="rgb(85,85,85)"/><circle cx="214.8" cy="52.2" r="1.6" fill="rgb(44,44,44)"/><circle cx="267.6" cy="74.4" r="1.1" fill="rgb(39,39,39)"/><circle cx="228.8" cy="187.3" r="1.2" fill="rgb(50,50,50)"/><circle cx="230.3" cy="267.5" r="1.5" fill="rgb(79,79,79)"/><circle cx="76.1" cy="24.8" r="1.3" fill="rgb(75,75,75)"/><circle cx="72" cy="54" r="2.3" fill="#e6e6e6" stroke="none"/><circle cx="99" cy="49" r="2.3" fill="#e6e6e6" stroke="none"/><circle cx="299" cy="33" r="2.3" fill="#e6e6e6" stroke="none"/><circle cx="310" cy="33" r="2.3" fill="#e6e6e6" stroke="none"/><circle cx="301" cy="76" r="2.3" fill="#e6e6e6" stroke="none"/><circle cx="268" cy="106" r="2.3" fill="#e6e6e6" stroke="none"/><circle cx="133" cy="127" r="2.3" fill="#e6e6e6" stroke="none"/><circle cx="10" cy="146" r="2.3" fill="#e6e6e6" stroke="none"/><circle cx="227" cy="137" r="2.3" fill="#e6e6e6" stroke="none"/><circle cx="272" cy="158" r="2.3" fill="#e6e6e6" stroke="none"/><circle cx="184" cy="176" r="2.3" fill="#e6e6e6" stroke="none"/><circle cx="244" cy="185" r="2.3" fill="#e6e6e6" stroke="none"/><circle cx="227" cy="213" r="2.3" fill="#e6e6e6" stroke="none"/><circle cx="274" cy="221" r="2.3" fill="#e6e6e6" stroke="none"/><circle cx="189" cy="238" r="2.3" fill="#e6e6e6" stroke="none"/><circle cx="201" cy="248" r="2.3" fill="#e6e6e6" stroke="none"/><circle cx="322" cy="242" r="2.3" fill="#e6e6e6" stroke="none"/><circle cx="340" cy="214" r="2.3" fill="#e6e6e6" stroke="none"/><circle cx="365" cy="257" r="2.3" fill="#e6e6e6" stroke="none"/><circle cx="367" cy="286" r="2.3" fill="#e6e6e6" stroke="none"/><circle cx="279" cy="273" r="2.3" fill="#e6e6e6" stroke="none"/><circle cx="289" cy="273" r="2.3" fill="#e6e6e6" stroke="none"/><circle cx="230" cy="288" r="2.3" fill="#e6e6e6" stroke="none"/><circle cx="146" cy="337" r="2.3" fill="#e6e6e6" stroke="none"/><circle cx="112" cy="248" r="2.3" fill="#e6e6e6" stroke="none"/><circle cx="3" cy="234" r="2.3" fill="#e6e6e6" stroke="none"/><circle cx="94" cy="365" r="2.3" fill="#e6e6e6" stroke="none"/><circle cx="284" cy="367" r="2.3" fill="#e6e6e6" stroke="none"/><circle cx="218" cy="166" r="2.3" fill="#e6e6e6" stroke="none"/><circle cx="257" cy="176" r="2.3" fill="#e6e6e6" stroke="none"/><circle cx="299" cy="54" r="2.3" fill="#e6e6e6" stroke="none"/><circle cx="95" cy="45" r="2.3" fill="#e6e6e6" stroke="none"/></g></svg></div>
<div class="a" style="left:1033px;top:448px;width:376px;height:10px;box-sizing:border-box;border-top:1px solid #fff;border-bottom:1px solid #000;background:#c0c0c0;"></div>
<div class="a" style="left:1033px;top:448px;width:1px;height:10px;background:#000;"></div>
<div class="a" style="left:1041px;top:449px;width:1px;height:8px;background:#000;"></div>
<div class="a" style="left:1042px;top:449px;width:1px;height:8px;background:#fff;"></div>
<div class="a" style="left:1399px;top:449px;width:1px;height:8px;background:#000;"></div>
<div class="a" style="left:1400px;top:449px;width:1px;height:8px;background:#fff;"></div>
<div class="a" style="left:631px;top:573px;width:10px;height:377px;box-sizing:border-box;border-left:1px solid #000;border-top:1px solid #000;background:#fff;"></div>
<div class="a" style="left:633px;top:575px;width:8px;height:7px;background:#c0c0c0;"></div>
<div class="a" style="left:633px;top:582px;width:8px;height:1px;background:#000;"></div>
<div class="a" style="left:633px;top:583px;width:8px;height:1px;background:#fff;"></div>
<div class="a" style="left:633px;top:584px;width:8px;height:357px;background:#c0c0c0;"></div>
<div class="a" style="left:633px;top:941px;width:8px;height:1px;background:#000;"></div>
<div class="a" style="left:633px;top:942px;width:8px;height:1px;background:#fff;"></div>
<div class="a" style="left:633px;top:943px;width:8px;height:6px;background:#c0c0c0;"></div>
<div class="a" style="left:633px;top:949px;width:8px;height:1px;background:#000;"></div>
<div class="a" style="left:641px;top:559px;width:376px;height:13px;box-sizing:border-box;border:1px solid #000;border-bottom:none;background:linear-gradient(to right,#b4b5cb 0%,#a8a7b9 50%,#8c8b9c 100%);"></div>
<div class="t" style="top:558.69px;font-size:11px;line-height:14px;color:#000;letter-spacing:0.25px;left:645px;">D:&nbsp; Camera 1 Cy5</div>
<div class="t" style="top:558.69px;font-size:11px;line-height:14px;color:#000;letter-spacing:0.25px;right:777px;">Temp: 4 C</div>
<div class="a" style="left:641px;top:572px;width:376px;height:378px;background:#000;overflow:hidden"><svg width="376" height="378" style="position:absolute;left:0;top:0"><defs><filter id="bl2" x="-10%" y="-10%" width="120%" height="120%" color-interpolation-filters="sRGB"><feGaussianBlur stdDeviation="3.0"/></filter><filter id="bw2" x="-10%" y="-10%" width="120%" height="120%" color-interpolation-filters="sRGB"><feGaussianBlur stdDeviation="6"/></filter></defs><g filter="url(#bw2)" fill="none" stroke-linecap="round" stroke-linejoin="round"><rect x="-10" y="-10" width="400" height="400" fill="#030303" stroke="none"/><path d="M81,3 C83,25 86,50 87,75 C90,92 100,100 112,117 C122,130 134,143 152,161 C165,174 180,182 191,187 C205,195 215,203 222,209 C230,210 250,228 268,240 C285,252 300,262 320,270 C335,275 352,278 368,287 L378,293" stroke="#262626" stroke-width="14" opacity="1.0"/><path d="M80,2 C82,30 86,55 86,80 C86,92 95,100 108,110" stroke="#262626" stroke-width="18" opacity="1.0"/><path d="M74,98 C66,112 58,128 50,145 C42,158 32,170 26,180 C20,200 14,222 8,240 L0,258" stroke="#161616" stroke-width="9" opacity="1.0"/><path d="M165,178 C155,190 145,200 135,215 C125,228 118,245 106,257 C108,265 108,275 104,290 C98,305 93,318 91,335 C90,350 89,365 88,378" stroke="#161616" stroke-width="9" opacity="1.0"/></g><g filter="url(#bl2)" fill="none" stroke-linecap="round" stroke-linejoin="round"><path d="M81,3 C83,25 86,50 87,75 C90,92 100,100 112,117 C122,130 134,143 152,161 C165,174 180,182 191,187 C205,195 215,203 222,209 C230,210 250,228 268,240 C285,252 300,262 320,270 C335,275 352,278 368,287 L378,293" stroke="#c8c8c8" stroke-width="6" opacity="1.0"/><path d="M81,3 C83,25 86,50 87,75" stroke="#c0c0c0" stroke-width="12" opacity="1.0"/><path d="M87,75 C90,92 100,100 115,117 C125,128 135,147 150,160" stroke="#c8c8c8" stroke-width="8.5" opacity="1.0"/><path d="M76,80 C75,90 74,95 72,100 L90,100" stroke="#a8a8a8" stroke-width="5" opacity="1.0"/><path d="M74,98 C66,112 58,128 50,145 C42,158 32,170 26,180 C20,200 14,222 8,240 L0,258" stroke="#666666" stroke-width="3" opacity="1.0"/><path d="M165,178 C155,190 145,200 135,215 C125,228 118,245 106,257 C108,265 108,275 104,290 C98,305 93,318 91,335 C90,350 89,365 88,378" stroke="#808080" stroke-width="3.5" opacity="1.0"/><path d="M205,7 C210,30 216,50 230,75 C245,90 240,100 234,108" stroke="#333" stroke-width="2" opacity="1.0"/><path d="M225,210 C220,220 215,228 210,235" stroke="#555" stroke-width="2.5" opacity="1.0"/><path d="M350,240 C355,248 357,255 357,265" stroke="#777" stroke-width="3" opacity="1.0"/><path d="M270,272 C290,270 305,272 320,275" stroke="#444" stroke-width="3" opacity="1.0"/><ellipse cx="89" cy="84" rx="4" ry="6" fill="#222"/><circle cx="135" cy="148" r="3" fill="#e4e4e4" stroke="none"/><circle cx="160" cy="168" r="3" fill="#e4e4e4" stroke="none"/><circle cx="208" cy="198" r="3" fill="#e4e4e4" stroke="none"/><circle cx="232" cy="214" r="3" fill="#e4e4e4" stroke="none"/><circle cx="300" cy="262" r="3" fill="#e4e4e4" stroke="none"/><circle cx="325" cy="272" r="3" fill="#e4e4e4" stroke="none"/><circle cx="337" cy="273" r="3" fill="#e4e4e4" stroke="none"/><circle cx="368" cy="287" r="3" fill="#e4e4e4" stroke="none"/><circle cx="86" cy="40" r="3" fill="#e4e4e4" stroke="none"/><circle cx="84" cy="20" r="3" fill="#e4e4e4" stroke="none"/><circle cx="356" cy="248" r="3" fill="#e4e4e4" stroke="none"/><circle cx="210.5" cy="6.8" r="1.9" fill="rgb(62,62,62)"/><circle cx="248.7" cy="77.7" r="2.1" fill="rgb(41,41,41)"/><circle cx="222.3" cy="52.7" r="2.3" fill="rgb(47,47,47)"/><circle cx="229.3" cy="67.4" r="1.7" fill="rgb(77,77,77)"/><circle cx="232.9" cy="81.3" r="1.5" fill="rgb(67,67,67)"/><circle cx="225.7" cy="52.2" r="2.2" fill="rgb(73,73,73)"/><circle cx="223.5" cy="47.7" r="2.0" fill="rgb(53,53,53)"/><circle cx="201.3" cy="20.8" r="2.2" fill="rgb(57,57,57)"/><circle cx="198.8" cy="21.6" r="1.4" fill="rgb(76,76,76)"/><circle cx="209.2" cy="27.6" r="1.6" fill="rgb(59,59,59)"/><circle cx="238.8" cy="103.8" r="1.6" fill="rgb(87,87,87)"/><circle cx="208.3" cy="33.9" r="1.3" fill="rgb(53,53,53)"/><circle cx="206.9" cy="59.3" r="1.5" fill="rgb(50,50,50)"/><circle cx="229.6" cy="101.5" r="2.0" fill="rgb(78,78,78)"/><circle cx="218.8" cy="49.0" r="1.8" fill="rgb(67,67,67)"/><circle cx="252.1" cy="284.5" r="1.5" fill="rgb(34,34,34)"/><circle cx="136.4" cy="346.8" r="1.5" fill="rgb(43,43,43)"/><circle cx="108.4" cy="238.2" r="1.5" fill="rgb(34,34,34)"/><circle cx="290.0" cy="15.6" r="1.5" fill="rgb(53,53,53)"/><circle cx="213.0" cy="133.7" r="1.5" fill="rgb(57,57,57)"/><circle cx="99.8" cy="92.0" r="1.5" fill="rgb(27,27,27)"/><circle cx="206.3" cy="284.9" r="1.5" fill="rgb(48,48,48)"/><circle cx="155.2" cy="305.3" r="1.5" fill="rgb(28,28,28)"/><circle cx="115.4" cy="243.7" r="1.5" fill="rgb(58,58,58)"/><circle cx="238.3" cy="261.6" r="1.5" fill="rgb(52,52,52)"/><circle cx="148.3" cy="355.5" r="1.5" fill="rgb(50,50,50)"/><circle cx="128.5" cy="148.4" r="1.5" fill="rgb(53,53,53)"/><circle cx="131.5" cy="70.2" r="1.5" fill="rgb(55,55,55)"/><circle cx="200.0" cy="197.0" r="1.5" fill="rgb(48,48,48)"/><circle cx="339.0" cy="50.5" r="1.5" fill="rgb(36,36,36)"/><circle cx="24.8" cy="156.2" r="1.5" fill="rgb(42,42,42)"/><circle cx="320.3" cy="252.4" r="1.5" fill="rgb(45,45,45)"/><circle cx="151.8" cy="216.9" r="1.5" fill="rgb(34,34,34)"/><circle cx="317.6" cy="298.0" r="1.5" fill="rgb(54,54,54)"/><circle cx="56.8" cy="253.8" r="1.5" fill="rgb(51,51,51)"/><circle cx="188.2" cy="339.6" r="1.5" fill="rgb(56,56,56)"/><circle cx="279.4" cy="310.3" r="1.5" fill="rgb(47,47,47)"/><circle cx="330.4" cy="49.6" r="1.5" fill="rgb(49,49,49)"/><circle cx="264.6" cy="231.5" r="1.5" fill="rgb(34,34,34)"/><circle cx="25.3" cy="228.1" r="1.5" fill="rgb(53,53,53)"/><circle cx="102.7" cy="80.5" r="1.5" fill="rgb(32,32,32)"/><circle cx="35.3" cy="255.5" r="1.5" fill="rgb(59,59,59)"/><circle cx="301.6" cy="136.0" r="1.5" fill="rgb(49,49,49)"/><circle cx="27.1" cy="317.0" r="1.5" fill="rgb(36,36,36)"/><circle cx="1.3" cy="237.9" r="1.5" fill="rgb(29,29,29)"/><circle cx="103.4" cy="22.3" r="1.5" fill="rgb(40,40,40)"/><circle cx="208.6" cy="305.2" r="1.5" fill="rgb(26,26,26)"/><circle cx="311.1" cy="41.8" r="1.5" fill="rgb(32,32,32)"/><circle cx="236.7" cy="128.6" r="1.5" fill="rgb(36,36,36)"/><circle cx="213.7" cy="82.4" r="1.5" fill="rgb(52,52,52)"/><circle cx="78.6" cy="317.3" r="1.5" fill="rgb(53,53,53)"/><circle cx="201.9" cy="11.5" r="1.5" fill="rgb(52,52,52)"/><circle cx="10.7" cy="190.8" r="1.5" fill="rgb(39,39,39)"/><circle cx="23.7" cy="238.1" r="1.5" fill="rgb(50,50,50)"/><circle cx="219.9" cy="151.3" r="1.5" fill="rgb(42,42,42)"/></g></svg></div>
<div class="a" style="left:641px;top:950px;width:376px;height:10px;box-sizing:border-box;border-top:1px solid #fff;border-bottom:1px solid #000;background:#c0c0c0;"></div>
<div class="a" style="left:641px;top:950px;width:1px;height:10px;background:#000;"></div>
<div class="a" style="left:649px;top:951px;width:1px;height:8px;background:#000;"></div>
<div class="a" style="left:650px;top:951px;width:1px;height:8px;background:#fff;"></div>
<div class="a" style="left:1007px;top:951px;width:1px;height:8px;background:#000;"></div>
<div class="a" style="left:1008px;top:951px;width:1px;height:8px;background:#fff;"></div>
<div class="a" style="left:641px;top:461px;width:70px;height:16px;background:#dde1dc;"></div>
<div class="a" style="left:712px;top:461px;width:46px;height:16px;background:#dde1dc;"></div>
<div class="a" style="left:641px;top:478px;width:70px;height:16px;background:#dde1dc;"></div>
<div class="a" style="left:641px;top:495px;width:70px;height:16px;background:#dde1dc;"></div>
<div class="a" style="left:641px;top:512px;width:70px;height:16px;background:#dde1dc;"></div>
<div class="t" style="top:462.54px;font-size:10px;line-height:14px;color:#222;font-weight:bold;letter-spacing:0.8px;left:644px;">Channel:</div>
<div class="t" style="top:462.54px;font-size:10px;line-height:14px;color:#222;font-weight:bold;letter-spacing:1.2px;left:715px;">528</div>
<div class="t" style="top:479.54px;font-size:10px;line-height:14px;color:#222;font-weight:bold;letter-spacing:1.0px;left:644px;">Min (2147):</div>
<div class="t" style="top:496.54px;font-size:10px;line-height:14px;color:#222;font-weight:bold;letter-spacing:1.0px;left:644px;overflow:hidden;width:68px;">Max (32722):</div>
<div class="t" style="top:513.53px;font-size:10px;line-height:14px;color:#222;font-weight:bold;letter-spacing:1.2px;left:644px;">Gamma:</div>
<div class="a" style="left:714px;top:478px;width:44px;height:16px;box-sizing:border-box;border-top:1px solid #666;border-left:1px solid #666;background:#fff;"></div>
<div class="t" style="top:479.54px;font-size:10px;line-height:14px;color:#000;font-weight:bold;letter-spacing:1.0px;left:716px;">2147</div>
<div class="a" style="left:714px;top:495px;width:44px;height:16px;box-sizing:border-box;border-top:1px solid #666;border-left:1px solid #666;background:#fff;"></div>
<div class="t" style="top:496.54px;font-size:10px;line-height:14px;color:#000;font-weight:bold;letter-spacing:1.0px;left:716px;">32722</div>
<div class="a" style="left:714px;top:512px;width:44px;height:16px;box-sizing:border-box;border-top:1px solid #666;border-left:1px solid #666;background:#fff;"></div>
<div class="t" style="top:513.53px;font-size:10px;line-height:14px;color:#000;font-weight:bold;letter-spacing:1.0px;left:716px;">1.0</div>
<div class="a" style="left:641px;top:531px;width:117px;height:16px;background:#dde1dc;"></div>
<div class="a" style="left:645px;top:534px;width:9px;height:10px;box-sizing:border-box;border:1px solid #999;border-right-color:#eee;border-bottom-color:#eee;background:#dde1dc;"></div>
<svg class="a" style="left:645px;top:533px" width="11" height="11"><path d="M2 5 L4.5 9 L9 2" stroke="#111" stroke-width="1.6" fill="none"/></svg>
<div class="t" style="top:531.53px;font-size:10px;line-height:14px;color:#222;font-weight:bold;letter-spacing:1.2px;left:671px;">autoscale</div>
<div class="a" style="left:763px;top:461px;width:254px;height:86px;box-sizing:border-box;border:2px solid #000;background:linear-gradient(to right,#b5b6cb 0%,#a9a8bb 50%,#8b899a 100%);"></div>
<div class="t" style="top:463.36px;font-size:10.5px;line-height:14px;color:#000;font-weight:bold;letter-spacing:1.4px;right:790px;">Histogram</div>
<svg class="a" style="left:763px;top:461px" width="254" height="86"><path d="M51 66 L51 16 L54 16 L55 30 L56 44 L57 52 L58 58 L60 61 L63 63 L68 65 L70 66 Z" fill="#0000ff"/><line x1="50.5" y1="16" x2="50.5" y2="67" stroke="#ffff00" stroke-width="1"/><line x1="223.5" y1="16" x2="223.5" y2="67" stroke="#ffff00" stroke-width="1"/><line x1="51" y1="65.5" x2="223" y2="65.5" stroke="#0000ff" stroke-width="1.2"/><line x1="51" y1="66" x2="223" y2="16.5" stroke="#f0b000" stroke-width="1.3"/></svg>
<div class="t" style="top:529.53px;font-size:10px;line-height:14px;color:#000;font-weight:bold;letter-spacing:1.0px;left:513px;width:600px;text-align:center;">2147</div>
<div class="t" style="top:529.53px;font-size:10px;line-height:14px;color:#000;font-weight:bold;letter-spacing:1.0px;right:772px;">32722</div>
<div class="a" style="left:1033px;top:461px;width:70px;height:16px;background:#dde1dc;"></div>
<div class="a" style="left:1104px;top:461px;width:46px;height:16px;background:#dde1dc;"></div>
<div class="a" style="left:1033px;top:478px;width:70px;height:16px;background:#dde1dc;"></div>
<div class="a" style="left:1033px;top:495px;width:70px;height:16px;background:#dde1dc;"></div>
<div class="a" style="left:1033px;top:512px;width:70px;height:16px;background:#dde1dc;"></div>
<div class="t" style="top:462.54px;font-size:10px;line-height:14px;color:#222;font-weight:bold;letter-spacing:0.8px;left:1036px;">Channel:</div>
<div class="t" style="top:462.54px;font-size:10px;line-height:14px;color:#222;font-weight:bold;letter-spacing:1.2px;left:1107px;">609</div>
<div class="t" style="top:479.54px;font-size:10px;line-height:14px;color:#222;font-weight:bold;letter-spacing:1.0px;left:1036px;">Min (228):</div>
<div class="t" style="top:496.54px;font-size:10px;line-height:14px;color:#222;font-weight:bold;letter-spacing:1.0px;left:1036px;overflow:hidden;width:68px;">Max (5743):</div>
<div class="t" style="top:513.53px;font-size:10px;line-height:14px;color:#222;font-weight:bold;letter-spacing:1.2px;left:1036px;">Gamma:</div>
<div class="a" style="left:1106px;top:478px;width:44px;height:16px;box-sizing:border-box;border-top:1px solid #666;border-left:1px solid #666;background:#fff;"></div>
<div class="t" style="top:479.54px;font-size:10px;line-height:14px;color:#000;font-weight:bold;letter-spacing:1.0px;left:1108px;">228</div>
<div class="a" style="left:1106px;top:495px;width:44px;height:16px;box-sizing:border-box;border-top:1px solid #666;border-left:1px solid #666;background:#fff;"></div>
<div class="t" style="top:496.54px;font-size:10px;line-height:14px;color:#000;font-weight:bold;letter-spacing:1.0px;left:1108px;">5743</div>
<div class="a" style="left:1106px;top:512px;width:44px;height:16px;box-sizing:border-box;border-top:1px solid #666;border-left:1px solid #666;background:#fff;"></div>
<div class="t" style="top:513.53px;font-size:10px;line-height:14px;color:#000;font-weight:bold;letter-spacing:1.0px;left:1108px;">1.0</div>
<div class="a" style="left:1033px;top:531px;width:117px;height:16px;background:#dde1dc;"></div>
<div class="a" style="left:1037px;top:534px;width:9px;height:10px;box-sizing:border-box;border:1px solid #999;border-right-color:#eee;border-bottom-color:#eee;background:#dde1dc;"></div>
<svg class="a" style="left:1037px;top:533px" width="11" height="11"><path d="M2 5 L4.5 9 L9 2" stroke="#111" stroke-width="1.6" fill="none"/></svg>
<div class="t" style="top:531.53px;font-size:10px;line-height:14px;color:#222;font-weight:bold;letter-spacing:1.2px;left:1063px;">autoscale</div>
<div class="a" style="left:1155px;top:461px;width:254px;height:86px;box-sizing:border-box;border:2px solid #000;background:linear-gradient(to right,#b5b6cb 0%,#a9a8bb 50%,#8b899a 100%);"></div>
<div class="t" style="top:463.36px;font-size:10.5px;line-height:14px;color:#000;font-weight:bold;letter-spacing:1.4px;right:398px;">Histogram</div>
<svg class="a" style="left:1155px;top:461px" width="254" height="86"><path d="M51 66 L51 16 L55 16 L56 34 L57 48 L58 56 L60 61 L63 64 L66 65 L68 66 Z" fill="#0000ff"/><line x1="50.5" y1="16" x2="50.5" y2="67" stroke="#ffff00" stroke-width="1"/><line x1="223.5" y1="16" x2="223.5" y2="67" stroke="#ffff00" stroke-width="1"/><line x1="51" y1="65.5" x2="223" y2="65.5" stroke="#0000ff" stroke-width="1.2"/><line x1="51" y1="66" x2="223" y2="16.5" stroke="#f0b000" stroke-width="1.3"/></svg>
<div class="t" style="top:529.53px;font-size:10px;line-height:14px;color:#000;font-weight:bold;letter-spacing:1.0px;left:905px;width:600px;text-align:center;">228</div>
<div class="t" style="top:529.53px;font-size:10px;line-height:14px;color:#000;font-weight:bold;letter-spacing:1.0px;right:380px;">5743</div>
<div class="a" style="left:641px;top:963px;width:70px;height:16px;background:#dde1dc;"></div>
<div class="a" style="left:712px;top:963px;width:46px;height:16px;background:#dde1dc;"></div>
<div class="a" style="left:641px;top:980px;width:70px;height:16px;background:#dde1dc;"></div>
<div class="a" style="left:641px;top:997px;width:70px;height:16px;background:#dde1dc;"></div>
<div class="a" style="left:641px;top:1014px;width:70px;height:16px;background:#dde1dc;"></div>
<div class="t" style="top:964.53px;font-size:10px;line-height:14px;color:#222;font-weight:bold;letter-spacing:0.8px;left:644px;">Channel:</div>
<div class="t" style="top:964.53px;font-size:10px;line-height:14px;color:#222;font-weight:bold;letter-spacing:1.2px;left:715px;">683</div>
<div class="t" style="top:981.53px;font-size:10px;line-height:14px;color:#222;font-weight:bold;letter-spacing:1.0px;left:644px;">Min (114):</div>
<div class="t" style="top:998.53px;font-size:10px;line-height:14px;color:#222;font-weight:bold;letter-spacing:1.0px;left:644px;overflow:hidden;width:68px;">Max (21020):</div>
<div class="t" style="top:1015.53px;font-size:10px;line-height:14px;color:#222;font-weight:bold;letter-spacing:1.2px;left:644px;">Gamma:</div>
<div class="a" style="left:714px;top:980px;width:44px;height:16px;box-sizing:border-box;border-top:1px solid #666;border-left:1px solid #666;background:#fff;"></div>
<div class="t" style="top:981.53px;font-size:10px;line-height:14px;color:#000;font-weight:bold;letter-spacing:1.0px;left:716px;">114</div>
<div class="a" style="left:714px;top:997px;width:44px;height:16px;box-sizing:border-box;border-top:1px solid #666;border-left:1px solid #666;background:#fff;"></div>
<div class="t" style="top:998.53px;font-size:10px;line-height:14px;color:#000;font-weight:bold;letter-spacing:1.0px;left:716px;">21020</div>
<div class="a" style="left:714px;top:1014px;width:44px;height:16px;box-sizing:border-box;border-top:1px solid #666;border-left:1px solid #666;background:#fff;"></div>
<div class="t" style="top:1015.53px;font-size:10px;line-height:14px;color:#000;font-weight:bold;letter-spacing:1.0px;left:716px;">1.0</div>
<div class="a" style="left:641px;top:1033px;width:117px;height:16px;background:#dde1dc;"></div>
<div class="a" style="left:645px;top:1036px;width:9px;height:10px;box-sizing:border-box;border:1px solid #999;border-right-color:#eee;border-bottom-color:#eee;background:#dde1dc;"></div>
<svg class="a" style="left:645px;top:1035px" width="11" height="11"><path d="M2 5 L4.5 9 L9 2" stroke="#111" stroke-width="1.6" fill="none"/></svg>
<div class="t" style="top:1033.54px;font-size:10px;line-height:14px;color:#222;font-weight:bold;letter-spacing:1.2px;left:671px;">autoscale</div>
<div class="a" style="left:763px;top:963px;width:254px;height:86px;box-sizing:border-box;border:2px solid #000;background:linear-gradient(to right,#b5b6cb 0%,#a9a8bb 50%,#8b899a 100%);"></div>
<div class="t" style="top:965.36px;font-size:10.5px;line-height:14px;color:#000;font-weight:bold;letter-spacing:1.4px;right:790px;">Histogram</div>
<svg class="a" style="left:763px;top:963px" width="254" height="86"><path d="M51 66 L51 62 L53 62 L54 66 Z" fill="#0000ff"/><line x1="50.5" y1="16" x2="50.5" y2="67" stroke="#ffff00" stroke-width="1"/><line x1="223.5" y1="16" x2="223.5" y2="67" stroke="#ffff00" stroke-width="1"/><line x1="51" y1="65.5" x2="223" y2="65.5" stroke="#0000ff" stroke-width="1.2"/><line x1="51" y1="66" x2="223" y2="16.5" stroke="#f0b000" stroke-width="1.3"/></svg>
<div class="t" style="top:1031.54px;font-size:10px;line-height:14px;color:#000;font-weight:bold;letter-spacing:1.0px;left:513px;width:600px;text-align:center;">114</div>
<div class="t" style="top:1031.54px;font-size:10px;line-height:14px;color:#000;font-weight:bold;letter-spacing:1.0px;right:772px;">21020</div>
<div class="a" style="left:4px;top:1044px;width:1751px;height:1px;background:#7a8a99;"></div>
<div class="a" style="left:2px;top:1045px;width:1753px;height:4px;background:linear-gradient(to bottom,#fcfcfc 0%,#fcfcfc 30%,#ececec 50%,#ececec 75%,#fafafa 100%);"></div>
<div class="a" style="left:0px;top:1049px;width:1775px;height:1px;background:#111;"></div>
<div class="a" style="left:247px;top:210px;width:104px;height:122px;box-sizing:border-box;border:1px solid #111;border-bottom-width:2px;background:#eeeeee;"></div>
<div class="a" style="left:248px;top:211px;width:86px;height:15px;background:#a3b8cc;"></div>
<div class="t" style="top:211.84px;font-size:12px;line-height:14px;color:#333;left:250px;">55</div>
<div class="t" style="top:226.84px;font-size:12px;line-height:14px;color:#333;left:250px;">60</div>
<div class="t" style="top:241.84px;font-size:12px;line-height:14px;color:#333;left:250px;">65</div>
<div class="t" style="top:256.84px;font-size:12px;line-height:14px;color:#333;left:250px;">70</div>
<div class="t" style="top:271.84px;font-size:12px;line-height:14px;color:#333;left:250px;">75</div>
<div class="t" style="top:286.84px;font-size:12px;line-height:14px;color:#333;left:250px;">80</div>
<div class="t" style="top:301.84px;font-size:12px;line-height:14px;color:#333;left:250px;">85</div>
<div class="t" style="top:316.84px;font-size:12px;line-height:14px;color:#333;left:250px;">90</div>
<div class="a" style="left:333px;top:212px;width:16px;height:118px;box-sizing:border-box;border:1px solid #7a8a99;background:#eeeeee;"></div>
<div class="a" style="left:334px;top:213px;width:14px;height:14px;box-sizing:border-box;border:1px solid #7a8a99;border-top:none;border-left:none;background:linear-gradient(to right,#ffffff 0%,#f3f7fb 25%,#dde8f3 45%,#c6d7ea 100%);"></div>
<svg class="a" style="left:337.0px;top:218.0px" width="8" height="4"><polygon points="0,4 8,4 4.0,0" fill="#333"/></svg>
<div class="a" style="left:334px;top:259px;width:14px;height:17px;box-sizing:border-box;border:1px solid #7a8a99;background:linear-gradient(to right,#ffffff 0%,#f3f7fb 25%,#dde8f3 45%,#c6d7ea 100%);"></div>
<div class="a" style="left:337px;top:265px;width:8px;height:1px;background:#6382bf;"></div>
<div class="a" style="left:337px;top:267px;width:8px;height:1px;background:#6382bf;"></div>
<div class="a" style="left:337px;top:269px;width:8px;height:1px;background:#6382bf;"></div>
<div class="a" style="left:334px;top:315px;width:14px;height:15px;box-sizing:border-box;border:1px solid #7a8a99;border-left:none;border-bottom:none;background:linear-gradient(to right,#ffffff 0%,#f3f7fb 25%,#dde8f3 45%,#c6d7ea 100%);"></div>
<svg class="a" style="left:337.0px;top:320.0px" width="8" height="4"><polygon points="0,0 8,0 4.0,4" fill="#333"/></svg>
</div></body></html>
